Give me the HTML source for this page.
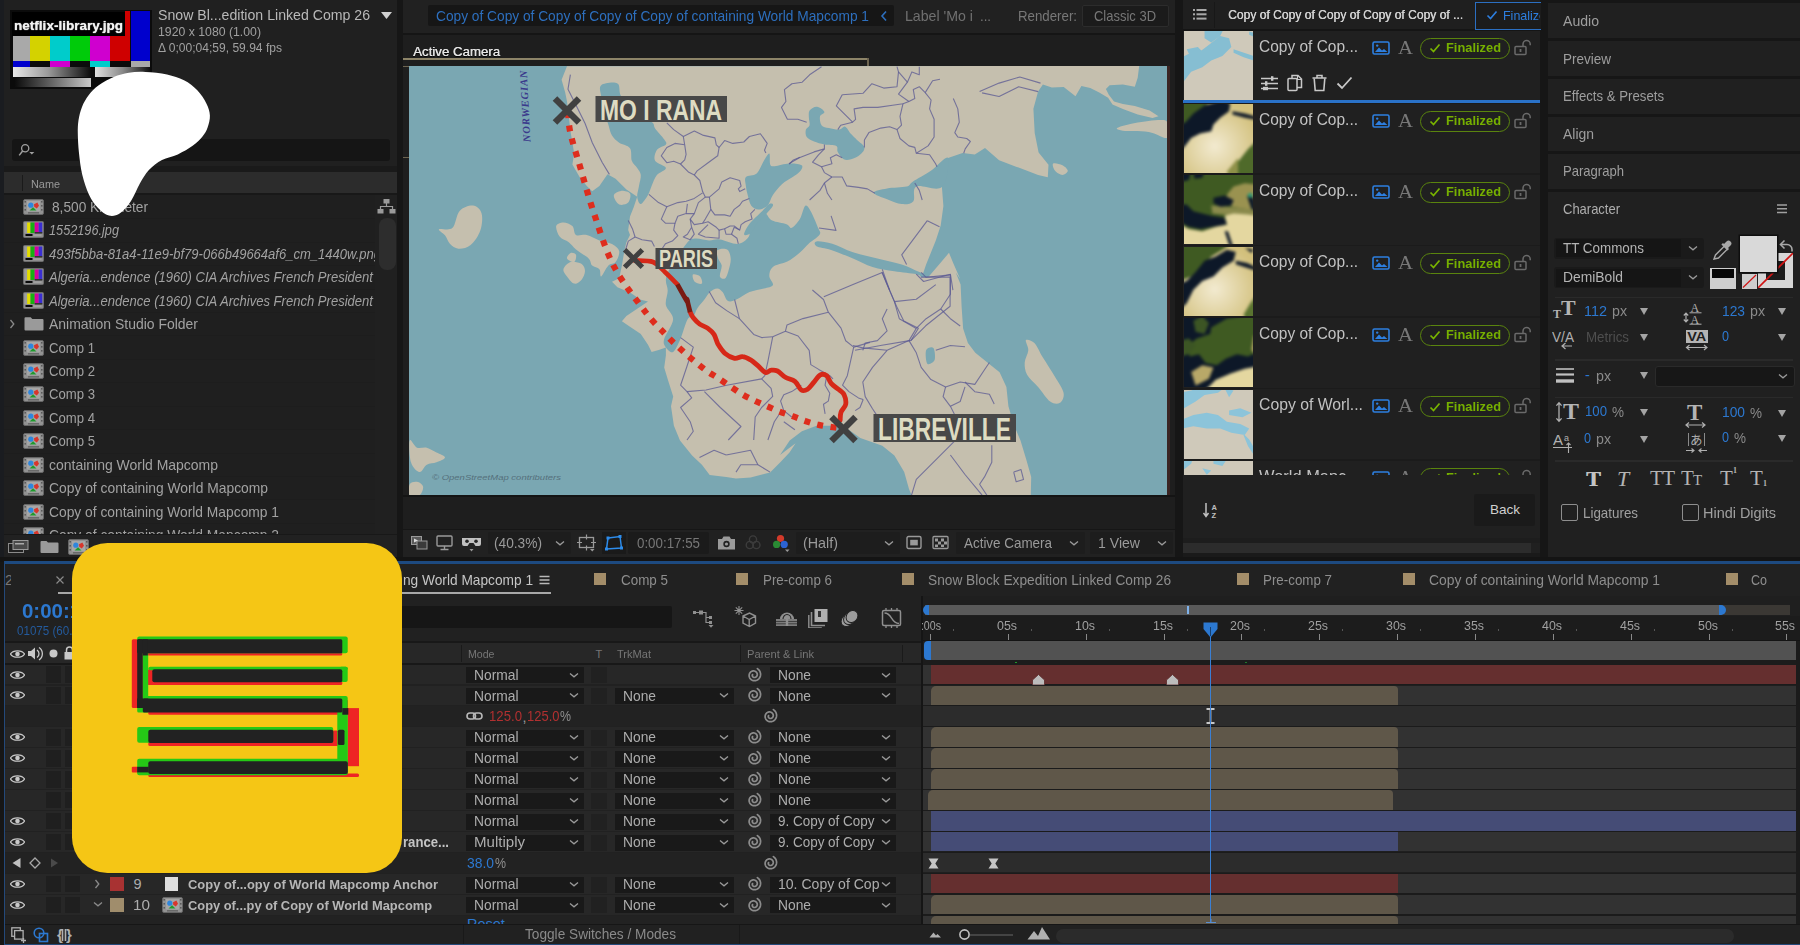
<!DOCTYPE html>
<html><head><meta charset="utf-8"><title>After Effects</title>
<style>
html,body{margin:0;padding:0;background:#1b1b1b;}
#root{position:relative;width:1800px;height:945px;overflow:hidden;background:#161616;font-family:"Liberation Sans",sans-serif;}
#root div,#root svg,#root span.t{position:absolute;display:block;}
span.t{white-space:nowrap;transform-origin:0 50%;}
</style></head><body><div id="root">
<div style="left:0px;top:0px;width:4px;height:557px;background:#1a1c20;"></div>
<div style="left:4px;top:0px;width:393px;height:557px;background:#202020;"></div>
<div style="left:403px;top:0px;width:772px;height:557px;background:#1e1e1e;"></div>
<div style="left:403px;top:0px;width:772px;height:33px;background:#212121;"></div>
<div style="left:403px;top:33px;width:772px;height:2px;background:#151515;"></div>
<div style="left:1183px;top:0px;width:357px;height:557px;background:#202020;"></div>
<div style="left:1548px;top:0px;width:252px;height:557px;background:#202020;"></div>
<div style="left:0px;top:557px;width:1800px;height:5px;background:#141414;"></div>
<div style="left:4px;top:561px;width:1796px;height:384px;background:#212121;box-sizing:border-box;border:1px solid #24497a;border-top:3px solid #1d4a80;border-right:none;"></div>
<div style="left:10px;top:10px;width:142px;height:79px;background:#0b0b0b;"></div>
<div style="left:13.4px;top:35.6px;width:16.4px;height:25px;background:#a9a9a9;"></div>
<div style="left:29.8px;top:35.6px;width:20.4px;height:25px;background:#d4d200;"></div>
<div style="left:50.2px;top:35.6px;width:19.7px;height:25px;background:#00cccb;"></div>
<div style="left:69.9px;top:35.6px;width:20.4px;height:25px;background:#00cb0a;"></div>
<div style="left:90.3px;top:35.6px;width:19.6px;height:25px;background:#cf00cf;"></div>
<div style="left:109.9px;top:35.6px;width:20.5px;height:25px;background:#cf0000;"></div>
<div style="left:130.8px;top:35.6px;width:19.2px;height:25px;background:#0000cd;"></div>
<div style="left:124.6px;top:11px;width:5.8px;height:25px;background:#cf0000;"></div>
<div style="left:130.8px;top:11px;width:19.2px;height:25px;background:#0000cd;"></div>
<div style="left:13.4px;top:60.6px;width:16.4px;height:6px;background:#0000cd;"></div>
<div style="left:50.2px;top:60.6px;width:19.7px;height:6px;background:#cf00cf;"></div>
<div style="left:90.3px;top:60.6px;width:19.6px;height:6px;background:#00cccb;"></div>
<div style="left:130.8px;top:60.6px;width:19.2px;height:6px;background:#a9a9a9;"></div>
<div style="left:13.4px;top:67.2px;width:78px;height:9.6px;background:linear-gradient(90deg,#e8e8e8,#9a9a9a 45%,#0c0c0c);"></div>
<div style="left:95px;top:67.2px;width:55px;height:9.6px;background:linear-gradient(90deg,#e0e0e0,#8a8a8a 50%,#111);"></div>
<div style="left:15px;top:78px;width:76px;height:9px;background:linear-gradient(90deg,#0c0c0c,#555 40%,#c9c9c9);"></div>
<div style="left:12px;top:12px;width:112.5px;height:23.5px;background:#000;"></div>
<span class="t" style="left:14px;top:16.5px;font-size:13px;line-height:17px;color:#f2f2f2;font-weight:700;transform:scaleX(1.0431);text-shadow:0 0 1px #fff;">netflix-library.jpg</span>
<span class="t" style="left:158px;top:5.0px;font-size:15px;line-height:20px;color:#b9b9b9;transform:scaleX(0.9417);">Snow Bl...edition Linked Comp 26</span>
<svg style="left:381.0px;top:12.0px;" width="11" height="7" viewBox="0 0 11 7"><path d="M0 0 L11 0 L5.5 7Z" fill="#d0d0d0"/></svg>
<span class="t" style="left:158px;top:24.0px;font-size:12.5px;line-height:16px;color:#a0a0a0;transform:scaleX(0.9816);">1920 x 1080 (1.00)</span>
<span class="t" style="left:158px;top:40.0px;font-size:12.5px;line-height:16px;color:#a0a0a0;transform:scaleX(0.9643);">Δ 0;00;04;59, 59.94 fps</span>
<div style="left:12px;top:139px;width:378px;height:22px;background:#151515;border-radius:3px;"></div>
<svg style="left:18px;top:142px;" width="20" height="16" viewBox="0 0 20 16"><circle cx="7.2" cy="6.2" r="3.6" fill="none" stroke="#a0a0a0" stroke-width="1.3"/><path d="M4.6 9 L1.2 13.4" stroke="#a0a0a0" stroke-width="1.5"/><path d="M11.3 10 h5 l-2.5 2.6z" fill="#a0a0a0"/></svg>
<div style="left:4px;top:166px;width:393px;height:6px;background:#1a1a1a;"></div>
<div style="left:4px;top:172px;width:393px;height:21px;background:#2c2c2c;"></div>
<div style="left:22px;top:175px;width:1px;height:16px;background:#1a1a1a;"></div>
<span class="t" style="left:31px;top:177.0px;font-size:11.5px;line-height:15px;color:#9a9a9a;transform:scaleX(0.9454);">Name</span>
<div style="left:4px;top:193px;width:393px;height:2px;background:#181818;"></div>
<div style="left:4px;top:195px;width:371px;height:340px;overflow:hidden;background:#1f1f1f;">
<div style="left:0px;top:23.2px;width:371px;height:1px;background:#1d1d1d;"></div>
<svg style="left:19px;top:4.0px;" width="21" height="16" viewBox="0 0 21 16"><rect x="0.5" y="0.5" width="20" height="15" rx="1.5" fill="#929292" stroke="#666"/><rect x="4" y="2" width="13" height="10.5" fill="#a6a6a6"/><g fill="#555"><rect x="1.5" y="2" width="1.4" height="1.6"/><rect x="1.5" y="6" width="1.4" height="1.6"/><rect x="1.5" y="10" width="1.4" height="1.6"/><rect x="18.1" y="2" width="1.4" height="1.6"/><rect x="18.1" y="6" width="1.4" height="1.6"/><rect x="18.1" y="10" width="1.4" height="1.6"/></g><rect x="5" y="13" width="11" height="1.6" fill="#6a6a6a"/><circle cx="7.8" cy="6.2" r="2.6" fill="#2f86dc"/><path d="M11 5.2 l3.4 -1.6 l1.6 3.2 l-2.2 2.6 l-2.6 -1.6z" fill="#d8362c"/><path d="M6.5 11.6 l3.6 -3.4 l3.4 3.4z" fill="#1e9b2c"/></svg>
<span class="t" style="left:48px;top:2.0px;font-size:15px;line-height:20px;color:#a2a2a2;transform:scaleX(0.9138);">8,500 Kilometer</span>
<div style="left:0px;top:46.6px;width:371px;height:1px;background:#1d1d1d;"></div>
<svg style="left:19px;top:26.4px;" width="21" height="17" viewBox="0 0 21 17"><rect x="0.5" y="0.5" width="20" height="16" rx="1" fill="#8d8d8d" stroke="#6c6c6c"/><rect x="1.5" y="1.5" width="2.6" height="10.5" fill="#9d9d9d"/><rect x="4.1" y="1.5" width="3.4" height="10.5" fill="#e2dc00"/><rect x="7.5" y="1.5" width="4.2" height="10.5" fill="#17b013"/><rect x="11.7" y="1.5" width="4" height="10.5" fill="#d6009e"/><rect x="15.7" y="1.5" width="3.6" height="10.5" fill="#3a2fd2"/><rect x="11.7" y="11" width="7.6" height="1.6" fill="#333"/><rect x="2.5" y="13" width="7" height="2" fill="#0a0a0a"/><rect x="10.5" y="13.4" width="8" height="1.4" fill="#a5a5a5"/></svg>
<span class="t" style="left:45px;top:25.4px;font-size:15px;line-height:20px;color:#a2a2a2;font-style:italic;transform:scaleX(0.8477);">1552196.jpg</span>
<div style="left:0px;top:70.1px;width:371px;height:1px;background:#1d1d1d;"></div>
<svg style="left:19px;top:49.9px;" width="21" height="17" viewBox="0 0 21 17"><rect x="0.5" y="0.5" width="20" height="16" rx="1" fill="#8d8d8d" stroke="#6c6c6c"/><rect x="1.5" y="1.5" width="2.6" height="10.5" fill="#9d9d9d"/><rect x="4.1" y="1.5" width="3.4" height="10.5" fill="#e2dc00"/><rect x="7.5" y="1.5" width="4.2" height="10.5" fill="#17b013"/><rect x="11.7" y="1.5" width="4" height="10.5" fill="#d6009e"/><rect x="15.7" y="1.5" width="3.6" height="10.5" fill="#3a2fd2"/><rect x="11.7" y="11" width="7.6" height="1.6" fill="#333"/><rect x="2.5" y="13" width="7" height="2" fill="#0a0a0a"/><rect x="10.5" y="13.4" width="8" height="1.4" fill="#a5a5a5"/></svg>
<span class="t" style="left:45px;top:48.9px;font-size:15px;line-height:20px;color:#a2a2a2;font-style:italic;transform:scaleX(0.8679);">493f5bba-81a4-11e9-bf79-066b49664af6_cm_1440w.png</span>
<div style="left:0px;top:93.5px;width:371px;height:1px;background:#1d1d1d;"></div>
<svg style="left:19px;top:73.3px;" width="21" height="17" viewBox="0 0 21 17"><rect x="0.5" y="0.5" width="20" height="16" rx="1" fill="#8d8d8d" stroke="#6c6c6c"/><rect x="1.5" y="1.5" width="2.6" height="10.5" fill="#9d9d9d"/><rect x="4.1" y="1.5" width="3.4" height="10.5" fill="#e2dc00"/><rect x="7.5" y="1.5" width="4.2" height="10.5" fill="#17b013"/><rect x="11.7" y="1.5" width="4" height="10.5" fill="#d6009e"/><rect x="15.7" y="1.5" width="3.6" height="10.5" fill="#3a2fd2"/><rect x="11.7" y="11" width="7.6" height="1.6" fill="#333"/><rect x="2.5" y="13" width="7" height="2" fill="#0a0a0a"/><rect x="10.5" y="13.4" width="8" height="1.4" fill="#a5a5a5"/></svg>
<span class="t" style="left:45px;top:72.3px;font-size:15px;line-height:20px;color:#a2a2a2;font-style:italic;transform:scaleX(0.8700);">Algeria...endence (1960) CIA Archives French President</span>
<div style="left:0px;top:116.9px;width:371px;height:1px;background:#1d1d1d;"></div>
<svg style="left:19px;top:96.7px;" width="21" height="17" viewBox="0 0 21 17"><rect x="0.5" y="0.5" width="20" height="16" rx="1" fill="#8d8d8d" stroke="#6c6c6c"/><rect x="1.5" y="1.5" width="2.6" height="10.5" fill="#9d9d9d"/><rect x="4.1" y="1.5" width="3.4" height="10.5" fill="#e2dc00"/><rect x="7.5" y="1.5" width="4.2" height="10.5" fill="#17b013"/><rect x="11.7" y="1.5" width="4" height="10.5" fill="#d6009e"/><rect x="15.7" y="1.5" width="3.6" height="10.5" fill="#3a2fd2"/><rect x="11.7" y="11" width="7.6" height="1.6" fill="#333"/><rect x="2.5" y="13" width="7" height="2" fill="#0a0a0a"/><rect x="10.5" y="13.4" width="8" height="1.4" fill="#a5a5a5"/></svg>
<span class="t" style="left:45px;top:95.7px;font-size:15px;line-height:20px;color:#a2a2a2;font-style:italic;transform:scaleX(0.8700);">Algeria...endence (1960) CIA Archives French President</span>
<div style="left:0px;top:140.4px;width:371px;height:1px;background:#1d1d1d;"></div>
<svg style="left:20px;top:121.1px;" width="20" height="15" viewBox="0 0 20 15"><path d="M0.5 2.2 a1 1 0 0 1 1 -1 h5.2 l1.6 1.8 h10.2 a1 1 0 0 1 1 1 v9.5 a1 1 0 0 1 -1 1 h-17 a1 1 0 0 1 -1 -1z" fill="#9a9a9a"/></svg>
<svg style="left:4.5px;top:124.14999999999998px;" width="7" height="10" viewBox="0 0 7 10"><path d="M1.5 1 L4.8 5 L1.5 9" fill="none" stroke="#8a8a8a" stroke-width="1.3"/></svg>
<span class="t" style="left:45px;top:119.1px;font-size:15px;line-height:20px;color:#a2a2a2;transform:scaleX(0.9308);">Animation Studio Folder</span>
<div style="left:0px;top:163.8px;width:371px;height:1px;background:#1d1d1d;"></div>
<svg style="left:19px;top:144.6px;" width="21" height="16" viewBox="0 0 21 16"><rect x="0.5" y="0.5" width="20" height="15" rx="1.5" fill="#929292" stroke="#666"/><rect x="4" y="2" width="13" height="10.5" fill="#a6a6a6"/><g fill="#555"><rect x="1.5" y="2" width="1.4" height="1.6"/><rect x="1.5" y="6" width="1.4" height="1.6"/><rect x="1.5" y="10" width="1.4" height="1.6"/><rect x="18.1" y="2" width="1.4" height="1.6"/><rect x="18.1" y="6" width="1.4" height="1.6"/><rect x="18.1" y="10" width="1.4" height="1.6"/></g><rect x="5" y="13" width="11" height="1.6" fill="#6a6a6a"/><circle cx="7.8" cy="6.2" r="2.6" fill="#2f86dc"/><path d="M11 5.2 l3.4 -1.6 l1.6 3.2 l-2.2 2.6 l-2.6 -1.6z" fill="#d8362c"/><path d="M6.5 11.6 l3.6 -3.4 l3.4 3.4z" fill="#1e9b2c"/></svg>
<span class="t" style="left:45px;top:142.6px;font-size:15px;line-height:20px;color:#a2a2a2;transform:scaleX(0.8758);">Comp 1</span>
<div style="left:0px;top:187.2px;width:371px;height:1px;background:#1d1d1d;"></div>
<svg style="left:19px;top:168.0px;" width="21" height="16" viewBox="0 0 21 16"><rect x="0.5" y="0.5" width="20" height="15" rx="1.5" fill="#929292" stroke="#666"/><rect x="4" y="2" width="13" height="10.5" fill="#a6a6a6"/><g fill="#555"><rect x="1.5" y="2" width="1.4" height="1.6"/><rect x="1.5" y="6" width="1.4" height="1.6"/><rect x="1.5" y="10" width="1.4" height="1.6"/><rect x="18.1" y="2" width="1.4" height="1.6"/><rect x="18.1" y="6" width="1.4" height="1.6"/><rect x="18.1" y="10" width="1.4" height="1.6"/></g><rect x="5" y="13" width="11" height="1.6" fill="#6a6a6a"/><circle cx="7.8" cy="6.2" r="2.6" fill="#2f86dc"/><path d="M11 5.2 l3.4 -1.6 l1.6 3.2 l-2.2 2.6 l-2.6 -1.6z" fill="#d8362c"/><path d="M6.5 11.6 l3.6 -3.4 l3.4 3.4z" fill="#1e9b2c"/></svg>
<span class="t" style="left:45px;top:166.0px;font-size:15px;line-height:20px;color:#a2a2a2;transform:scaleX(0.8758);">Comp 2</span>
<div style="left:0px;top:210.7px;width:371px;height:1px;background:#1d1d1d;"></div>
<svg style="left:19px;top:191.4px;" width="21" height="16" viewBox="0 0 21 16"><rect x="0.5" y="0.5" width="20" height="15" rx="1.5" fill="#929292" stroke="#666"/><rect x="4" y="2" width="13" height="10.5" fill="#a6a6a6"/><g fill="#555"><rect x="1.5" y="2" width="1.4" height="1.6"/><rect x="1.5" y="6" width="1.4" height="1.6"/><rect x="1.5" y="10" width="1.4" height="1.6"/><rect x="18.1" y="2" width="1.4" height="1.6"/><rect x="18.1" y="6" width="1.4" height="1.6"/><rect x="18.1" y="10" width="1.4" height="1.6"/></g><rect x="5" y="13" width="11" height="1.6" fill="#6a6a6a"/><circle cx="7.8" cy="6.2" r="2.6" fill="#2f86dc"/><path d="M11 5.2 l3.4 -1.6 l1.6 3.2 l-2.2 2.6 l-2.6 -1.6z" fill="#d8362c"/><path d="M6.5 11.6 l3.6 -3.4 l3.4 3.4z" fill="#1e9b2c"/></svg>
<span class="t" style="left:45px;top:189.4px;font-size:15px;line-height:20px;color:#a2a2a2;transform:scaleX(0.8758);">Comp 3</span>
<div style="left:0px;top:234.1px;width:371px;height:1px;background:#1d1d1d;"></div>
<svg style="left:19px;top:214.9px;" width="21" height="16" viewBox="0 0 21 16"><rect x="0.5" y="0.5" width="20" height="15" rx="1.5" fill="#929292" stroke="#666"/><rect x="4" y="2" width="13" height="10.5" fill="#a6a6a6"/><g fill="#555"><rect x="1.5" y="2" width="1.4" height="1.6"/><rect x="1.5" y="6" width="1.4" height="1.6"/><rect x="1.5" y="10" width="1.4" height="1.6"/><rect x="18.1" y="2" width="1.4" height="1.6"/><rect x="18.1" y="6" width="1.4" height="1.6"/><rect x="18.1" y="10" width="1.4" height="1.6"/></g><rect x="5" y="13" width="11" height="1.6" fill="#6a6a6a"/><circle cx="7.8" cy="6.2" r="2.6" fill="#2f86dc"/><path d="M11 5.2 l3.4 -1.6 l1.6 3.2 l-2.2 2.6 l-2.6 -1.6z" fill="#d8362c"/><path d="M6.5 11.6 l3.6 -3.4 l3.4 3.4z" fill="#1e9b2c"/></svg>
<span class="t" style="left:45px;top:212.9px;font-size:15px;line-height:20px;color:#a2a2a2;transform:scaleX(0.8758);">Comp 4</span>
<div style="left:0px;top:257.5px;width:371px;height:1px;background:#1d1d1d;"></div>
<svg style="left:19px;top:238.3px;" width="21" height="16" viewBox="0 0 21 16"><rect x="0.5" y="0.5" width="20" height="15" rx="1.5" fill="#929292" stroke="#666"/><rect x="4" y="2" width="13" height="10.5" fill="#a6a6a6"/><g fill="#555"><rect x="1.5" y="2" width="1.4" height="1.6"/><rect x="1.5" y="6" width="1.4" height="1.6"/><rect x="1.5" y="10" width="1.4" height="1.6"/><rect x="18.1" y="2" width="1.4" height="1.6"/><rect x="18.1" y="6" width="1.4" height="1.6"/><rect x="18.1" y="10" width="1.4" height="1.6"/></g><rect x="5" y="13" width="11" height="1.6" fill="#6a6a6a"/><circle cx="7.8" cy="6.2" r="2.6" fill="#2f86dc"/><path d="M11 5.2 l3.4 -1.6 l1.6 3.2 l-2.2 2.6 l-2.6 -1.6z" fill="#d8362c"/><path d="M6.5 11.6 l3.6 -3.4 l3.4 3.4z" fill="#1e9b2c"/></svg>
<span class="t" style="left:45px;top:236.3px;font-size:15px;line-height:20px;color:#a2a2a2;transform:scaleX(0.8758);">Comp 5</span>
<div style="left:0px;top:280.9px;width:371px;height:1px;background:#1d1d1d;"></div>
<svg style="left:19px;top:261.7px;" width="21" height="16" viewBox="0 0 21 16"><rect x="0.5" y="0.5" width="20" height="15" rx="1.5" fill="#929292" stroke="#666"/><rect x="4" y="2" width="13" height="10.5" fill="#a6a6a6"/><g fill="#555"><rect x="1.5" y="2" width="1.4" height="1.6"/><rect x="1.5" y="6" width="1.4" height="1.6"/><rect x="1.5" y="10" width="1.4" height="1.6"/><rect x="18.1" y="2" width="1.4" height="1.6"/><rect x="18.1" y="6" width="1.4" height="1.6"/><rect x="18.1" y="10" width="1.4" height="1.6"/></g><rect x="5" y="13" width="11" height="1.6" fill="#6a6a6a"/><circle cx="7.8" cy="6.2" r="2.6" fill="#2f86dc"/><path d="M11 5.2 l3.4 -1.6 l1.6 3.2 l-2.2 2.6 l-2.6 -1.6z" fill="#d8362c"/><path d="M6.5 11.6 l3.6 -3.4 l3.4 3.4z" fill="#1e9b2c"/></svg>
<span class="t" style="left:45px;top:259.7px;font-size:15px;line-height:20px;color:#a2a2a2;transform:scaleX(0.9312);">containing World Mapcomp</span>
<div style="left:0px;top:304.4px;width:371px;height:1px;background:#1d1d1d;"></div>
<svg style="left:19px;top:285.2px;" width="21" height="16" viewBox="0 0 21 16"><rect x="0.5" y="0.5" width="20" height="15" rx="1.5" fill="#929292" stroke="#666"/><rect x="4" y="2" width="13" height="10.5" fill="#a6a6a6"/><g fill="#555"><rect x="1.5" y="2" width="1.4" height="1.6"/><rect x="1.5" y="6" width="1.4" height="1.6"/><rect x="1.5" y="10" width="1.4" height="1.6"/><rect x="18.1" y="2" width="1.4" height="1.6"/><rect x="18.1" y="6" width="1.4" height="1.6"/><rect x="18.1" y="10" width="1.4" height="1.6"/></g><rect x="5" y="13" width="11" height="1.6" fill="#6a6a6a"/><circle cx="7.8" cy="6.2" r="2.6" fill="#2f86dc"/><path d="M11 5.2 l3.4 -1.6 l1.6 3.2 l-2.2 2.6 l-2.6 -1.6z" fill="#d8362c"/><path d="M6.5 11.6 l3.6 -3.4 l3.4 3.4z" fill="#1e9b2c"/></svg>
<span class="t" style="left:45px;top:283.2px;font-size:15px;line-height:20px;color:#a2a2a2;transform:scaleX(0.9227);">Copy of containing World Mapcomp</span>
<div style="left:0px;top:327.8px;width:371px;height:1px;background:#1d1d1d;"></div>
<svg style="left:19px;top:308.6px;" width="21" height="16" viewBox="0 0 21 16"><rect x="0.5" y="0.5" width="20" height="15" rx="1.5" fill="#929292" stroke="#666"/><rect x="4" y="2" width="13" height="10.5" fill="#a6a6a6"/><g fill="#555"><rect x="1.5" y="2" width="1.4" height="1.6"/><rect x="1.5" y="6" width="1.4" height="1.6"/><rect x="1.5" y="10" width="1.4" height="1.6"/><rect x="18.1" y="2" width="1.4" height="1.6"/><rect x="18.1" y="6" width="1.4" height="1.6"/><rect x="18.1" y="10" width="1.4" height="1.6"/></g><rect x="5" y="13" width="11" height="1.6" fill="#6a6a6a"/><circle cx="7.8" cy="6.2" r="2.6" fill="#2f86dc"/><path d="M11 5.2 l3.4 -1.6 l1.6 3.2 l-2.2 2.6 l-2.6 -1.6z" fill="#d8362c"/><path d="M6.5 11.6 l3.6 -3.4 l3.4 3.4z" fill="#1e9b2c"/></svg>
<span class="t" style="left:45px;top:306.6px;font-size:15px;line-height:20px;color:#a2a2a2;transform:scaleX(0.9206);">Copy of containing World Mapcomp 1</span>
<div style="left:0px;top:351.2px;width:371px;height:1px;background:#1d1d1d;"></div>
<svg style="left:19px;top:332.0px;" width="21" height="16" viewBox="0 0 21 16"><rect x="0.5" y="0.5" width="20" height="15" rx="1.5" fill="#929292" stroke="#666"/><rect x="4" y="2" width="13" height="10.5" fill="#a6a6a6"/><g fill="#555"><rect x="1.5" y="2" width="1.4" height="1.6"/><rect x="1.5" y="6" width="1.4" height="1.6"/><rect x="1.5" y="10" width="1.4" height="1.6"/><rect x="18.1" y="2" width="1.4" height="1.6"/><rect x="18.1" y="6" width="1.4" height="1.6"/><rect x="18.1" y="10" width="1.4" height="1.6"/></g><rect x="5" y="13" width="11" height="1.6" fill="#6a6a6a"/><circle cx="7.8" cy="6.2" r="2.6" fill="#2f86dc"/><path d="M11 5.2 l3.4 -1.6 l1.6 3.2 l-2.2 2.6 l-2.6 -1.6z" fill="#d8362c"/><path d="M6.5 11.6 l3.6 -3.4 l3.4 3.4z" fill="#1e9b2c"/></svg>
<span class="t" style="left:45px;top:330.0px;font-size:15px;line-height:20px;color:#a2a2a2;transform:scaleX(0.9206);">Copy of containing World Mapcomp 2</span>
</div>
<div style="left:375px;top:195px;width:22px;height:340px;background:#202020;"></div>
<div style="left:379px;top:218px;width:17px;height:52px;background:#2d2d2d;border-radius:8px;"></div>
<svg style="left:377px;top:198px;" width="20" height="18" viewBox="0 0 20 18"><g fill="#9a9a9a"><rect x="6.5" y="1" width="6" height="4.5"/><rect x="0.5" y="11" width="6" height="4.5"/><rect x="12.5" y="11" width="6" height="4.5"/></g><path d="M9.5 5 v3.5 M3.5 11 v-2.5 h12 v2.5" fill="none" stroke="#9a9a9a" stroke-width="1.2"/></svg>
<div style="left:4px;top:535px;width:393px;height:22px;background:#212121;"></div>
<div style="left:4px;top:534px;width:393px;height:1px;background:#181818;"></div>
<svg style="left:8px;top:539px;" width="24" height="16" viewBox="0 0 24 16"><rect x="0.5" y="4.5" width="15" height="9" fill="none" stroke="#8a8a8a"/><rect x="5" y="1.5" width="15" height="9" fill="#4a4a4a" stroke="#9a9a9a"/><rect x="7" y="4" width="9" height="1.5" fill="#aaa"/></svg>
<svg style="left:40px;top:540px;" width="20" height="14" viewBox="0 0 20 14"><path d="M0.5 2 a1 1 0 0 1 1 -1 h5 l1.5 1.6 h9.5 a1 1 0 0 1 1 1 v8.5 a1 1 0 0 1 -1 1 h-16 a1 1 0 0 1 -1 -1z" fill="#9a9a9a"/></svg>
<svg style="left:68px;top:539px;" width="21" height="16" viewBox="0 0 21 16"><rect x="0.5" y="0.5" width="20" height="15" rx="1.5" fill="#929292" stroke="#666"/><rect x="4" y="2" width="13" height="10.5" fill="#a6a6a6"/><g fill="#555"><rect x="1.5" y="2" width="1.4" height="1.6"/><rect x="1.5" y="6" width="1.4" height="1.6"/><rect x="1.5" y="10" width="1.4" height="1.6"/><rect x="18.1" y="2" width="1.4" height="1.6"/><rect x="18.1" y="6" width="1.4" height="1.6"/><rect x="18.1" y="10" width="1.4" height="1.6"/></g><rect x="5" y="13" width="11" height="1.6" fill="#6a6a6a"/><circle cx="7.8" cy="6.2" r="2.6" fill="#2f86dc"/><path d="M11 5.2 l3.4 -1.6 l1.6 3.2 l-2.2 2.6 l-2.6 -1.6z" fill="#d8362c"/><path d="M6.5 11.6 l3.6 -3.4 l3.4 3.4z" fill="#1e9b2c"/></svg>
<div style="left:428px;top:5px;width:466px;height:21px;background:#161616;border-radius:2px;"></div>
<span class="t" style="left:436px;top:6.5px;font-size:14.5px;line-height:19px;color:#2d6fbe;transform:scaleX(0.9464);">Copy of Copy of Copy of Copy of Copy of containing World Mapcomp 1</span>
<svg style="left:880px;top:10px;" width="8" height="12" viewBox="0 0 8 12"><path d="M6 1.5 L2 6 L6 10.5" fill="none" stroke="#2d6fbe" stroke-width="1.6"/></svg>
<span class="t" style="left:905px;top:6.5px;font-size:14.5px;line-height:19px;color:#707070;transform:scaleX(0.9761);">Label &#x27;Mo i</span>
<span class="t" style="left:980px;top:6.5px;font-size:14.5px;line-height:19px;color:#777;transform:scaleX(0.9103);">...</span>
<span class="t" style="left:1018px;top:6.5px;font-size:14.5px;line-height:19px;color:#777;transform:scaleX(0.9151);">Renderer:</span>
<div style="left:1082px;top:5px;width:87px;height:22px;background:#1b1b1b;border:1px solid #2c2c2c;box-sizing:border-box;border-radius:2px;"></div>
<span class="t" style="left:1094px;top:6.5px;font-size:14.5px;line-height:19px;color:#777;transform:scaleX(0.8947);">Classic 3D</span>
<span class="t" style="left:413px;top:43.0px;font-size:13.5px;line-height:18px;color:#e8e8e8;transform:scaleX(0.9828);text-shadow:0.4px 0 0 #ccc, 0 1px 1px #000;">Active Camera</span>
<div style="left:403px;top:58px;width:465px;height:1.5px;background:#8d8468;"></div>
<div style="left:867px;top:58px;width:1.5px;height:8px;background:#6d6450;"></div>
<div style="left:403px;top:66px;width:6px;height:1px;background:#6d6450;"></div>
<div style="left:403px;top:157px;width:6px;height:1px;background:#6d6450;"></div>
<svg style="left:0;top:0;" width="1800" height="945" viewBox="0 0 1800 945"><defs><clipPath id="mapclip"><rect x="409" y="66" width="758" height="429"/></clipPath></defs><g clip-path="url(#mapclip)"><rect x="409" y="66" width="758" height="429" fill="#7aa7b2"/><path d="M567.0 66.3 L561.6 79.8 L565.2 92.4 L567.0 101.4 L570.6 132.0 L574.2 153.6 L572.4 164.4 L579.6 176.9 L586.8 185.9 L592.2 191.3 L599.4 185.9 L607.5 174.2 L615.6 178.7 L626.4 189.5 L637.2 196.7 L633.6 207.5 L630.0 216.5 L628.2 230.0 L630.0 235.0 L626.4 242.2 L624.6 249.4 L621.9 265.6 L619.2 278.2 L612.0 281.8 L617.4 287.2 L630.0 292.6 L640.8 299.8 L648.0 301.6 L637.2 308.7 L626.4 315.9 L621.9 321.3 L630.0 326.7 L640.8 333.9 L648.0 344.7 L651.6 351.9 L658.7 350.1 L665.9 347.4 L665.9 355.2 L664.2 367.4 L667.8 379.6 L673.2 396.6 L671.0 406.3 L673.9 425.8 L680.0 440.4 L692.1 455.5 L701.9 464.8 L709.7 475.0 L726.2 476.9 L736.0 478.6 L750.6 477.4 L770.1 472.6 L780.3 462.3 L789.5 452.6 L795.6 443.3 L780.0 455.0 L789.7 440.4 L801.9 431.2 L816.5 425.8 L843.3 425.8 L860.3 438.0 L882.3 445.8 L894.4 455.5 L904.2 472.1 L909.0 489.1 L911.5 495.2 L1030.8 495.2 L1031.2 476.9 L1026.4 459.9 L1020.5 440.4 L1014.2 425.8 L1008.4 406.3 L1006.4 386.9 L999.6 372.3 L987.4 362.5 L975.3 352.8 L967.9 343.0 L963.1 328.4 L961.6 306.5 L960.6 284.6 L955.8 272.4 L960.2 279.1 L953.3 263.3 L949.0 252.8 L939.5 264.0 L929.0 276.2 L922.4 275.5 L926.1 264.5 L935.8 240.6 L940.7 225.6 L943.4 206.1 L941.9 187.1 L935.8 182.9 L948.0 157.9 L962.6 153.0 L974.8 154.5 L985.0 148.1 L999.1 160.3 L1018.6 167.6 L1038.1 174.9 L1047.8 177.3 L1048.5 164.7 L1038.6 152.5 L1034.7 133.0 L1033.4 108.7 L1038.1 91.6 L1042.9 84.4 L1051.8 87.4 L1063.7 87.0 L1075.5 96.3 L1081.4 85.9 L1090.3 88.1 L1099.2 92.6 L1108.1 97.8 L1112.5 104.4 L1122.9 108.9 L1137.7 114.5 L1152.5 118.1 L1158.5 116.3 L1149.6 110.4 L1134.8 105.9 L1122.9 104.1 L1114.0 101.5 L1108.8 94.8 L1105.9 88.9 L1109.6 85.2 L1122.9 84.4 L1134.8 86.7 L1137.7 77.8 L1139.2 65.9Z" fill="#c5bfae" /><path d="M601.2 85.2 C603.9 83.1 614.1 81.6 617.4 83.4 C620.7 85.2 618.3 90.9 621.0 96.0 C623.7 101.1 628.5 109.6 633.6 114.0 C638.7 118.3 648.0 119.7 651.6 122.1 C655.1 124.5 653.1 125.5 655.1 128.4 C657.2 131.2 662.3 136.5 664.1 139.2 C665.9 141.9 667.1 142.8 665.9 144.6 C664.7 146.4 658.7 147.3 656.9 150.0 C655.1 152.7 653.6 157.8 655.1 160.8 C656.6 163.8 665.6 165.6 665.9 168.0 C666.2 170.4 659.3 172.2 656.9 175.1 C654.5 178.1 653.1 182.6 651.6 185.9 C650.1 189.2 649.8 191.9 648.0 194.9 C646.2 197.9 642.6 203.6 640.8 203.9 C639.0 204.2 637.5 199.7 637.2 196.7 C636.9 193.7 638.4 189.5 639.0 185.9 C639.6 182.3 641.1 178.1 640.8 175.1 C640.5 172.2 638.7 170.4 637.2 168.0 C635.7 165.6 633.0 164.1 631.8 160.8 C630.6 157.5 632.1 151.2 630.0 148.2 C627.9 145.2 622.2 144.9 619.2 142.8 C616.2 140.7 613.8 138.6 612.0 135.6 C610.2 132.6 609.9 129.9 608.4 124.8 C606.9 119.7 604.2 109.8 603.0 105.0 C601.8 100.2 601.5 99.3 601.2 96.0 C600.9 92.7 598.5 87.3 601.2 85.2Z" fill="#7aa7b2"/><path d="M745.9 177.0 C747.7 174.9 753.7 176.1 756.7 173.4 C759.7 170.7 761.8 164.1 763.9 160.8 C766.0 157.5 768.3 153.0 769.3 153.6 C770.4 154.2 769.3 162.3 770.2 164.4 C771.1 166.5 771.6 166.3 774.7 166.2 C777.9 166.0 784.6 163.6 789.1 163.5 C793.6 163.3 799.9 163.9 801.7 165.3 C803.5 166.6 801.4 169.6 799.9 171.6 C798.4 173.5 795.7 174.9 792.7 177.0 C789.7 179.1 785.2 181.2 781.9 184.2 C778.6 187.2 775.3 191.4 772.9 195.0 C770.5 198.6 769.9 203.4 767.5 205.8 C765.1 208.2 761.2 209.4 758.5 209.4 C755.8 209.4 753.1 208.2 751.3 205.8 C749.5 203.4 748.6 198.3 747.7 195.0 C746.8 191.7 746.2 189.0 745.9 186.0 C745.6 183.0 744.1 179.1 745.9 177.0Z" fill="#7aa7b2"/><path d="M809.6 110.4 C811.0 108.5 814.6 106.4 817.0 106.7 C819.5 106.9 824.0 110.2 824.4 111.9 C824.9 113.5 820.5 114.1 820.0 116.3 C819.5 118.5 820.0 123.2 821.5 125.2 C823.0 127.2 825.9 127.4 828.9 128.1 C831.9 128.9 836.5 129.9 839.3 129.6 C842.0 129.4 843.2 125.9 845.2 126.7 C847.2 127.4 849.1 131.9 851.1 134.1 C853.1 136.3 854.8 137.8 857.0 140.0 C859.3 142.2 864.0 144.9 864.4 147.4 C864.9 149.9 862.2 152.8 860.0 154.8 C857.8 156.8 853.8 158.5 851.1 159.3 C848.4 160.0 845.9 160.5 843.7 159.3 C841.5 158.0 839.0 154.1 837.8 151.9 C836.5 149.6 838.5 147.2 836.3 145.9 C834.1 144.7 828.1 145.2 824.4 144.4 C820.7 143.7 817.0 142.7 814.1 141.5 C811.1 140.2 808.0 139.0 806.7 137.0 C805.3 135.1 805.4 131.6 805.9 129.6 C806.4 127.7 809.1 127.2 809.6 125.2 C810.1 123.2 808.9 120.2 808.9 117.8 C808.9 115.3 808.3 112.2 809.6 110.4Z" fill="#7aa7b2"/><path d="M873.7 192.7 C873.7 190.9 881.6 189.6 887.1 188.5 C892.6 187.5 902.3 187.7 906.6 186.6 C910.9 185.5 908.6 184.4 912.7 181.7 C916.7 179.1 925.1 174.7 930.9 170.8 C936.8 166.8 946.2 155.2 948.0 157.9 C949.8 160.6 947.2 182.3 941.9 187.1 C936.6 191.9 921.1 184.2 916.3 186.6 C911.6 189.0 915.8 198.3 913.4 201.2 C911.0 204.1 906.1 204.5 901.7 204.1 C897.3 203.8 891.8 201.2 887.1 199.3 C882.5 197.4 873.7 194.5 873.7 192.7Z" fill="#7aa7b2"/><path d="M816.5 241.4 C819.2 241.0 826.3 242.0 832.3 243.8 C838.4 245.6 845.5 249.9 853.0 252.3 C860.5 254.8 869.3 256.4 877.4 258.4 C885.5 260.4 894.8 262.3 901.7 264.5 C908.6 266.7 914.2 269.9 918.8 271.8 C923.3 273.8 928.4 275.3 929.0 276.2 C929.6 277.1 924.5 277.5 922.4 277.2 C920.3 276.8 921.0 275.2 916.3 274.2 C911.7 273.3 901.7 272.5 894.4 271.3 C887.1 270.1 879.4 269.1 872.5 266.9 C865.6 264.8 859.9 261.3 853.0 258.4 C846.1 255.6 837.2 251.9 831.1 249.9 C825.0 247.9 819.0 247.7 816.5 246.2 C814.1 244.8 813.9 241.8 816.5 241.4Z" fill="#7aa7b2"/><path d="M665.9 347.4 C664.4 345.3 662.9 344.0 664.1 339.3 C665.3 334.7 672.8 325.2 673.1 319.5 C673.4 313.8 666.8 309.9 665.9 305.1 C665.0 300.4 667.7 295.0 667.7 290.8 C667.7 286.6 665.6 283.6 665.9 280.0 C666.2 276.4 666.1 275.2 669.5 269.2 C673.0 263.1 682.4 248.7 686.6 243.6 C690.8 238.5 691.0 239.1 694.7 238.6 C698.5 238.0 704.9 240.2 709.1 240.4 C713.3 240.5 715.1 238.9 719.9 239.5 C724.7 240.1 733.1 244.4 737.9 244.0 C742.7 243.5 746.6 239.8 748.7 236.8 C750.8 233.8 749.3 228.7 750.5 226.0 C751.7 223.3 753.5 222.7 755.9 220.6 C758.3 218.5 762.2 213.4 764.9 213.4 C767.6 213.4 768.5 218.8 772.1 220.6 C775.7 222.4 783.2 223.0 786.5 224.2 C789.8 225.4 789.6 228.7 791.9 227.8 C794.1 226.9 797.7 222.5 800.0 218.8 C802.2 215.1 803.5 207.0 805.3 205.8 C807.1 204.5 808.6 207.6 810.7 211.2 C812.8 214.8 816.4 223.5 817.9 227.4 C819.4 231.3 821.2 231.9 819.7 234.6 C818.2 237.3 812.2 240.6 808.9 243.6 C805.6 246.6 803.5 249.6 799.9 252.6 C796.3 255.6 791.8 259.2 787.3 261.6 C782.8 263.9 775.9 264.5 772.9 266.9 C769.9 269.3 769.3 272.9 769.3 275.9 C769.3 278.9 773.8 282.8 772.9 284.9 C772.0 287.0 767.8 287.3 763.9 288.5 C760.0 289.7 754.0 290.3 749.5 292.1 C745.0 293.9 740.5 297.8 736.9 299.3 C733.4 300.8 730.4 302.3 728.0 301.1 C725.6 299.9 724.4 294.2 722.6 292.1 C720.8 290.0 719.3 288.5 717.2 288.5 C715.1 288.5 712.1 290.3 710.0 292.1 C707.9 293.9 706.7 296.6 704.6 299.3 C702.5 302.0 699.2 305.6 697.4 308.3 C695.6 311.0 695.4 313.7 693.8 315.5 C692.1 317.4 689.8 315.6 687.5 319.5 C685.3 323.5 682.7 333.9 680.3 339.3 C677.9 344.7 675.5 350.6 673.1 351.9 C670.7 353.3 667.4 349.5 665.9 347.4Z" fill="#7aa7b2"/><path d="M744.1 234.6 C743.8 233.1 746.5 227.7 749.5 223.8 C752.5 219.9 758.8 214.5 762.1 211.2 C765.4 207.9 767.5 204.9 769.3 204.0 C771.1 203.1 773.8 203.7 772.9 205.8 C772.0 207.9 766.6 213.6 763.9 216.6 C761.2 219.6 758.8 221.1 756.7 223.8 C754.6 226.5 753.4 231.0 751.3 232.8 C749.2 234.6 744.4 236.1 744.1 234.6Z" fill="#7aa7b2"/><path d="M439.0 229.2 C440.2 228.0 448.9 231.0 452.3 228.0 C455.8 224.9 456.2 214.7 459.6 210.9 C463.1 207.2 469.4 205.2 473.0 205.6 C476.7 206.0 480.3 209.2 481.6 213.4 C482.8 217.5 482.2 225.1 480.3 230.4 C478.5 235.7 474.3 242.0 470.6 245.0 C467.0 248.1 461.9 248.9 458.4 248.7 C455.0 248.5 452.1 246.0 449.9 243.8 C447.7 241.6 446.9 237.7 445.0 235.3 C443.2 232.9 437.7 230.4 439.0 229.2Z" fill="#c5bfae"/><path d="M556.2 226.0 C556.8 223.6 560.7 222.4 563.4 222.4 C566.1 222.4 570.3 223.9 572.4 226.0 C574.5 228.1 573.6 233.5 576.0 235.0 C578.4 236.5 582.9 234.1 586.8 235.0 C590.7 235.9 595.2 238.9 599.4 240.4 C603.6 241.9 608.7 242.2 612.0 244.0 C615.3 245.8 618.6 248.2 619.2 251.2 C619.8 254.2 617.4 259.6 615.6 262.0 C613.8 264.4 610.8 263.2 608.4 265.6 C606.0 268.0 602.7 275.8 601.2 276.4 C599.7 277.0 600.9 271.0 599.4 269.2 C597.9 267.4 594.0 267.4 592.2 265.6 C590.4 263.8 591.3 261.1 588.6 258.4 C585.9 255.7 579.3 252.1 576.0 249.4 C572.7 246.7 571.5 244.3 568.8 242.2 C566.1 240.1 561.9 239.5 559.8 236.8 C557.7 234.1 555.6 228.4 556.2 226.0Z" fill="#c5bfae"/><path d="M563.4 269.2 C564.0 266.8 567.6 262.9 570.6 262.0 C573.6 261.1 579.0 262.3 581.4 263.8 C583.8 265.3 585.0 268.3 585.0 271.0 C585.0 273.7 583.2 277.9 581.4 280.0 C579.6 282.1 576.6 284.2 574.2 283.6 C571.8 283.0 568.8 278.8 567.0 276.4 C565.2 274.0 562.8 271.6 563.4 269.2Z" fill="#c5bfae"/><path d="M567.0 258.4 C566.4 256.9 569.1 253.6 570.6 253.0 C572.1 252.4 575.4 253.3 576.0 254.8 C576.6 256.3 575.7 261.4 574.2 262.0 C572.7 262.6 567.6 259.9 567.0 258.4Z" fill="#c5bfae"/><path d="M613.8 195.4 C614.1 193.1 618.3 191.2 621.0 190.9 C623.7 190.6 628.8 191.6 630.0 193.6 C631.2 195.5 630.0 200.8 628.2 202.6 C626.4 204.4 621.6 205.6 619.2 204.4 C616.8 203.2 613.5 197.6 613.8 195.4Z" fill="#c5bfae"/><path d="M717.2 250.3 C718.7 248.8 724.9 248.0 727.1 249.4 C729.4 250.7 730.4 255.1 730.7 258.4 C731.0 261.7 729.8 265.9 728.9 269.2 C728.0 272.5 726.8 277.0 725.3 278.2 C723.8 279.4 720.5 278.5 719.9 276.4 C719.3 274.3 722.0 268.6 721.7 265.6 C721.4 262.6 718.9 260.9 718.1 258.4 C717.4 255.8 715.7 251.8 717.2 250.3Z" fill="#c5bfae"/><path d="M692.9 274.6 C693.8 273.7 698.6 274.9 700.1 276.4 C701.6 277.9 702.8 282.7 701.9 283.6 C701.0 284.5 696.2 283.3 694.7 281.8 C693.2 280.3 692.0 275.5 692.9 274.6Z" fill="#c5bfae"/><path d="M1025.9 340.1 C1026.9 338.9 1031.6 340.1 1034.4 343.0 C1037.3 346.0 1039.5 352.0 1042.9 357.6 C1046.4 363.3 1051.7 371.2 1055.1 377.1 C1058.6 383.0 1062.8 388.7 1063.6 392.9 C1064.4 397.2 1062.2 401.3 1060.0 402.7 C1057.7 404.1 1053.9 404.1 1050.2 401.5 C1046.6 398.8 1041.9 391.3 1038.1 386.9 C1034.2 382.4 1029.3 378.7 1027.1 374.7 C1024.9 370.6 1024.5 366.6 1024.7 362.5 C1024.9 358.5 1028.1 354.1 1028.3 350.3 C1028.5 346.6 1024.9 341.3 1025.9 340.1Z" fill="#c5bfae"/><path d="M1053.2 163.5 C1054.4 162.5 1060.0 164.0 1062.4 165.2 C1064.8 166.4 1067.8 169.1 1067.8 170.8 C1067.8 172.4 1064.5 174.9 1062.4 174.9 C1060.3 174.9 1056.6 172.7 1055.1 170.8 C1053.6 168.9 1051.9 164.4 1053.2 163.5Z" fill="#c5bfae"/><path d="M1117.0 128.1 C1118.2 127.0 1125.6 125.1 1130.3 124.0 C1135.0 122.9 1140.4 122.1 1145.1 121.5 C1149.8 120.8 1154.8 119.9 1158.5 120.0 C1162.2 120.1 1165.9 119.2 1167.3 122.2 C1168.8 125.2 1169.8 136.0 1167.3 137.8 C1164.9 139.5 1157.5 134.0 1152.5 132.9 C1147.6 131.8 1142.7 131.4 1137.7 131.1 C1132.8 130.7 1126.4 131.3 1122.9 130.8 C1119.5 130.3 1115.8 129.3 1117.0 128.1Z" fill="#c5bfae"/><path d="M409.7 440.4 C410.8 438.0 414.2 446.5 417.0 447.7 C419.9 448.9 423.5 446.9 426.8 447.7 C430.0 448.5 433.5 451.0 436.5 452.6 C439.6 454.2 445.0 455.8 445.0 457.5 C445.0 459.1 439.6 461.1 436.5 462.3 C433.5 463.5 429.6 463.1 426.8 464.8 C423.9 466.4 422.1 472.5 419.5 472.1 C416.8 471.7 412.6 467.6 411.0 462.3 C409.3 457.1 408.7 442.9 409.7 440.4Z" fill="#c5bfae"/><path d="M409.7 484.2 C411.0 482.0 414.8 481.4 417.0 481.8 C419.3 482.2 422.7 484.4 423.1 486.7 C423.5 488.9 421.7 493.8 419.5 495.2 C417.2 496.6 411.4 497.0 409.7 495.2 C408.1 493.4 408.5 486.5 409.7 484.2Z" fill="#c5bfae"/><path d="M570.4 74.6 L568.0 89.2 L575.3 103.8 L585.0 123.3 L592.3 142.8 L602.1 162.3 L609.4 174.4" fill="none" stroke="#5a5893" stroke-width="1.1" opacity="0.75" stroke-linejoin="round"/><path d="M979.6 91.6 L999.1 83.1 L1019.8 77.0 L1040.5 83.1" fill="none" stroke="#5a5893" stroke-width="1.1" opacity="0.75" stroke-linejoin="round"/><path d="M982.1 92.9 L999.1 96.5 L1018.6 86.8 L1038.1 91.6" fill="none" stroke="#5a5893" stroke-width="1.1" opacity="0.75" stroke-linejoin="round"/><path d="M831.1 215.8 L836.0 230.4 L819.0 228.0" fill="none" stroke="#5a5893" stroke-width="1.1" opacity="0.75" stroke-linejoin="round"/><path d="M927.3 220.7 L939.5 226.8" fill="none" stroke="#5a5893" stroke-width="1.1" opacity="0.75" stroke-linejoin="round"/><path d="M927.3 220.7 L901.7 254.8 L906.6 264.5" fill="none" stroke="#5a5893" stroke-width="1.1" opacity="0.75" stroke-linejoin="round"/><path d="M882.3 269.4 L889.6 290.1" fill="none" stroke="#5a5893" stroke-width="1.1" opacity="0.75" stroke-linejoin="round"/><path d="M916.3 274.2 L923.6 281.5 L950.4 274.2 L952.9 290.1" fill="none" stroke="#5a5893" stroke-width="1.1" opacity="0.75" stroke-linejoin="round"/><path d="M881.9 272.3 L896.5 306.3 L903.8 320.9 L918.4 328.2 L911.1 340.4" fill="none" stroke="#5a5893" stroke-width="1.1" opacity="0.75" stroke-linejoin="round"/><path d="M855.1 350.2 L881.9 345.3 L911.1 340.4 L925.7 325.8 L950.1 306.3 L950.1 277.1 L920.8 277.1" fill="none" stroke="#5a5893" stroke-width="1.1" opacity="0.75" stroke-linejoin="round"/><path d="M726.2 455.0 L750.6 450.2 L757.9 464.8" fill="none" stroke="#5a5893" stroke-width="1.1" opacity="0.75" stroke-linejoin="round"/><path d="M699.5 457.5 L714.1 450.2 L726.2 455.0" fill="none" stroke="#5a5893" stroke-width="1.1" opacity="0.75" stroke-linejoin="round"/><path d="M736.0 472.1 L740.8 464.8 L757.9 464.8 L770.1 472.1" fill="none" stroke="#5a5893" stroke-width="1.1" opacity="0.75" stroke-linejoin="round"/><path d="M823.8 296.8 L853.0 284.6 L882.3 272.4" fill="none" stroke="#5a5893" stroke-width="1.1" opacity="0.75" stroke-linejoin="round"/><path d="M882.3 272.4 L887.1 284.6 L894.4 301.6 L899.3 318.7 L916.3 328.4" fill="none" stroke="#5a5893" stroke-width="1.1" opacity="0.75" stroke-linejoin="round"/><path d="M916.3 328.4 L926.1 318.7 L940.7 309.0 L950.4 294.3 L950.4 274.9 L926.1 277.3 L921.2 272.4" fill="none" stroke="#5a5893" stroke-width="1.1" opacity="0.75" stroke-linejoin="round"/><path d="M853.0 345.5 L862.8 347.9 L887.1 350.3 L909.0 340.6 L916.3 328.4" fill="none" stroke="#5a5893" stroke-width="1.1" opacity="0.75" stroke-linejoin="round"/><path d="M887.1 309.0 L882.3 318.7 L887.1 330.9 L877.4 340.6 L865.2 343.0 L862.8 350.3" fill="none" stroke="#5a5893" stroke-width="1.1" opacity="0.75" stroke-linejoin="round"/><path d="M894.4 301.6 L916.3 299.2 L935.8 284.6" fill="none" stroke="#5a5893" stroke-width="1.1" opacity="0.75" stroke-linejoin="round"/><path d="M940.7 309.0 L950.4 318.7 L960.2 326.0" fill="none" stroke="#5a5893" stroke-width="1.1" opacity="0.75" stroke-linejoin="round"/><path d="M909.0 340.6 L916.3 352.8 L921.2 367.4 L930.9 379.6 L945.6 386.9 L960.2 382.0 L974.8 384.4 L984.5 369.8 L989.4 362.5" fill="none" stroke="#5a5893" stroke-width="1.1" opacity="0.75" stroke-linejoin="round"/><path d="M935.8 350.3 L950.4 345.5 L965.0 346.7" fill="none" stroke="#5a5893" stroke-width="1.1" opacity="0.75" stroke-linejoin="round"/><path d="M887.1 350.3 L872.5 367.4 L862.8 382.0 L865.2 396.6 L872.5 408.8 L877.4 416.1" fill="none" stroke="#5a5893" stroke-width="1.1" opacity="0.75" stroke-linejoin="round"/><path d="M945.6 386.9 L943.1 396.6 L950.4 406.3 L960.2 401.5 L965.0 386.9" fill="none" stroke="#5a5893" stroke-width="1.1" opacity="0.75" stroke-linejoin="round"/><path d="M965.0 382.0 L974.8 391.7 L989.4 394.2 L994.2 403.9" fill="none" stroke="#5a5893" stroke-width="1.1" opacity="0.75" stroke-linejoin="round"/><path d="M950.4 406.3 L955.3 416.1" fill="none" stroke="#5a5893" stroke-width="1.1" opacity="0.75" stroke-linejoin="round"/><path d="M955.3 440.4 L935.8 459.9 L916.3 479.4 L911.5 495.2" fill="none" stroke="#5a5893" stroke-width="1.1" opacity="0.75" stroke-linejoin="round"/><path d="M950.4 455.0 L965.0 474.5 L982.1 495.2" fill="none" stroke="#5a5893" stroke-width="1.1" opacity="0.75" stroke-linejoin="round"/><path d="M991.8 445.3 L991.8 462.3 L984.5 476.9 L979.6 484.2 L986.9 495.2" fill="none" stroke="#5a5893" stroke-width="1.1" opacity="0.75" stroke-linejoin="round"/><path d="M1013.7 472.1 L1021.0 469.6 L1023.5 479.4 L1016.2 481.8 L1013.7 472.1" fill="none" stroke="#5a5893" stroke-width="1.1" opacity="0.75" stroke-linejoin="round"/><path d="M666.8 122.8 L673.7 129.6 L683.3 136.5 L684.7 144.8 L675.0 143.4 L666.8 147.5 L661.3 155.8 L666.8 162.7 L673.7 161.3 L680.5 164.0 L684.7 159.9 L686.1 154.4 L684.7 144.8" fill="none" stroke="#5a5893" stroke-width="1.1" opacity="0.75" stroke-linejoin="round"/><path d="M683.3 136.5 L694.3 131.0 L702.6 135.1 L714.9 137.9 L716.3 144.8 L719.1 147.5 L724.6 140.6 L732.8 143.4 L743.8 142.0 L749.4 136.5 L760.4 133.8 L767.2 143.4 L764.5 150.3 L765.9 153.0" fill="none" stroke="#5a5893" stroke-width="1.1" opacity="0.75" stroke-linejoin="round"/><path d="M719.1 147.5 L717.7 155.8 L708.1 162.7 L697.1 170.9 L694.3 175.0" fill="none" stroke="#5a5893" stroke-width="1.1" opacity="0.75" stroke-linejoin="round"/><path d="M680.5 164.0 L688.8 172.3 L694.3 175.0 L699.8 180.5 L702.6 191.6 L705.3 197.1 L709.4 197.1 L719.1 188.8 L721.8 181.9 L730.1 177.8 L739.7 180.5 L741.1 186.1 L738.3 188.8 L739.7 191.6 L745.2 188.8" fill="none" stroke="#5a5893" stroke-width="1.1" opacity="0.75" stroke-linejoin="round"/><path d="M648.9 194.3 L658.5 202.6 L666.8 206.7 L677.8 202.6 L686.1 201.2 L694.3 198.4 L702.6 192.9" fill="none" stroke="#5a5893" stroke-width="1.1" opacity="0.75" stroke-linejoin="round"/><path d="M666.8 206.7 L661.3 219.1 L665.4 223.2 L675.0 223.2 L677.8 216.3 L686.1 213.6 L687.4 203.9" fill="none" stroke="#5a5893" stroke-width="1.1" opacity="0.75" stroke-linejoin="round"/><path d="M705.3 197.1 L698.4 202.6 L694.3 213.6 L686.1 213.6" fill="none" stroke="#5a5893" stroke-width="1.1" opacity="0.75" stroke-linejoin="round"/><path d="M709.4 197.1 L710.8 209.4 L705.3 219.1 L702.6 223.2 L694.3 224.6 L690.2 219.1 L694.3 213.6" fill="none" stroke="#5a5893" stroke-width="1.1" opacity="0.75" stroke-linejoin="round"/><path d="M710.8 209.4 L714.9 214.9 L724.6 214.9 L730.1 216.3 L734.2 209.4 L739.7 205.3 L742.5 201.2 L749.4 198.4" fill="none" stroke="#5a5893" stroke-width="1.1" opacity="0.75" stroke-linejoin="round"/><path d="M702.6 223.2 L708.1 221.8 L716.3 227.3 L719.1 230.1 L724.6 228.7 L730.1 226.0 L734.2 226.0 L739.7 230.1 L741.1 224.6 L745.2 221.8 L752.1 219.1 L750.7 213.6 L754.9 209.4" fill="none" stroke="#5a5893" stroke-width="1.1" opacity="0.75" stroke-linejoin="round"/><path d="M708.1 224.6 L698.4 234.2 L705.3 237.0 L719.1 238.3 L719.1 230.1" fill="none" stroke="#5a5893" stroke-width="1.1" opacity="0.75" stroke-linejoin="round"/><path d="M724.6 228.7 L726.0 234.2 L731.5 234.2 L737.0 238.3 L738.3 243.8" fill="none" stroke="#5a5893" stroke-width="1.1" opacity="0.75" stroke-linejoin="round"/><path d="M731.5 234.2 L734.2 227.3 L739.7 230.1" fill="none" stroke="#5a5893" stroke-width="1.1" opacity="0.75" stroke-linejoin="round"/><path d="M675.0 223.2 L673.7 230.1 L677.8 235.6 L672.3 241.1 L665.4 243.8 L661.3 250.0" fill="none" stroke="#5a5893" stroke-width="1.1" opacity="0.75" stroke-linejoin="round"/><path d="M690.2 219.1 L691.6 227.3 L687.4 234.2 L683.3 237.0 L690.2 239.7 L694.3 234.2 L691.6 227.3" fill="none" stroke="#5a5893" stroke-width="1.1" opacity="0.75" stroke-linejoin="round"/><path d="M628.3 220.5 L632.4 228.7 L635.1 237.0 L642.0 239.7 L651.6 241.1 L654.4 246.6" fill="none" stroke="#5a5893" stroke-width="1.1" opacity="0.75" stroke-linejoin="round"/><path d="M635.1 237.0 L628.3 241.1 L625.5 250.0" fill="none" stroke="#5a5893" stroke-width="1.1" opacity="0.75" stroke-linejoin="round"/><path d="M789.3 164.0 L793.4 159.9 L800.0 157.2" fill="none" stroke="#5a5893" stroke-width="1.1" opacity="0.75" stroke-linejoin="round"/><path d="M821.5 66.7 L809.6 74.8 L802.2 82.2 L791.9 83.7 L784.4 89.6 L785.9 101.5 L781.5 107.4 L787.4 119.3 L797.8 119.3 L806.7 122.2" fill="none" stroke="#5a5893" stroke-width="1.1" opacity="0.75" stroke-linejoin="round"/><path d="M842.2 94.8 L863.0 93.3 L871.9 83.7 L883.7 88.1 L897.0 86.7 L898.5 71.9 L897.0 66.7" fill="none" stroke="#5a5893" stroke-width="1.1" opacity="0.75" stroke-linejoin="round"/><path d="M842.2 94.8 L836.3 105.9 L852.6 122.2 L855.6 119.3 L854.1 108.9 L863.0 107.4 L877.8 107.4 L892.6 105.2 L903.0 103.7 L908.9 101.5 L914.8 98.5 L913.3 89.6 L919.3 86.7 L925.2 92.6 L932.6 80.7 L940.0 79.3" fill="none" stroke="#5a5893" stroke-width="1.1" opacity="0.75" stroke-linejoin="round"/><path d="M852.6 122.2 L840.7 125.2 L837.8 129.6" fill="none" stroke="#5a5893" stroke-width="1.1" opacity="0.75" stroke-linejoin="round"/><path d="M903.0 103.7 L900.0 116.3 L901.5 125.2 L897.0 129.6 L889.6 126.7 L880.7 128.1 L868.9 132.6 L864.4 140.0 L864.4 147.4" fill="none" stroke="#5a5893" stroke-width="1.1" opacity="0.75" stroke-linejoin="round"/><path d="M897.0 129.6 L900.0 138.5 L908.9 145.9 L914.8 147.4 L916.3 153.3 L928.1 145.9 L934.1 137.0 L934.1 119.3 L929.6 108.9 L931.1 100.0 L925.2 92.6" fill="none" stroke="#5a5893" stroke-width="1.1" opacity="0.75" stroke-linejoin="round"/><path d="M916.3 153.3 L929.6 154.8 L935.6 163.7 L937.0 166.7" fill="none" stroke="#5a5893" stroke-width="1.1" opacity="0.75" stroke-linejoin="round"/><path d="M953.3 98.5 L957.8 108.9 L959.3 122.2 L954.8 132.6 L957.8 137.0 L966.7 138.5 L970.4 141.5 L965.2 148.9 L963.7 153.3" fill="none" stroke="#5a5893" stroke-width="1.1" opacity="0.75" stroke-linejoin="round"/><path d="M898.5 71.9 L907.4 82.2 L911.9 71.9 L919.3 74.8 L919.3 66.7" fill="none" stroke="#5a5893" stroke-width="1.1" opacity="0.75" stroke-linejoin="round"/><path d="M907.4 82.2 L898.5 94.1 L908.9 101.5" fill="none" stroke="#5a5893" stroke-width="1.1" opacity="0.75" stroke-linejoin="round"/><path d="M824.4 144.4 L824.4 148.9 L814.1 151.9 L799.3 157.8 L788.9 163.7" fill="none" stroke="#5a5893" stroke-width="1.1" opacity="0.75" stroke-linejoin="round"/><path d="M824.4 148.9 L818.5 154.8 L812.6 162.2 L821.5 166.7 L831.9 163.7 L830.4 157.8 L836.3 154.8 L842.2 157.8" fill="none" stroke="#5a5893" stroke-width="1.1" opacity="0.75" stroke-linejoin="round"/><path d="M821.5 166.7 L824.4 172.6 L831.9 177.0 L842.2 177.0 L846.7 185.9 L858.5 187.4 L867.4 188.9 L874.8 193.3" fill="none" stroke="#5a5893" stroke-width="1.1" opacity="0.75" stroke-linejoin="round"/><path d="M831.9 177.0 L824.4 183.0 L820.0 190.4 L809.6 200.0" fill="none" stroke="#5a5893" stroke-width="1.1" opacity="0.75" stroke-linejoin="round"/><path d="M824.4 183.0 L827.4 193.3 L831.9 200.0" fill="none" stroke="#5a5893" stroke-width="1.1" opacity="0.75" stroke-linejoin="round"/><path d="M914.8 183.0 L919.3 190.4 L922.2 200.0" fill="none" stroke="#5a5893" stroke-width="1.1" opacity="0.75" stroke-linejoin="round"/><path d="M709.2 291.6 L715.6 302.7 L726.7 310.6 L739.4 318.6 L753.7 334.4 L761.6 337.6 L772.7 336.8" fill="none" stroke="#5a5893" stroke-width="1.1" opacity="0.75" stroke-linejoin="round"/><path d="M734.6 299.5 L739.4 318.6" fill="none" stroke="#5a5893" stroke-width="1.1" opacity="0.75" stroke-linejoin="round"/><path d="M772.7 336.8 L785.4 331.3 L787.0 324.9 L802.9 318.6 L828.3 312.2 L823.5 299.5 L812.4 290.0" fill="none" stroke="#5a5893" stroke-width="1.1" opacity="0.75" stroke-linejoin="round"/><path d="M828.3 312.2 L841.0 328.1 L845.7 340.8 L853.7 347.1 L870.0 342.4" fill="none" stroke="#5a5893" stroke-width="1.1" opacity="0.75" stroke-linejoin="round"/><path d="M772.7 336.8 L767.9 361.4 L764.8 375.7 L761.6 378.9" fill="none" stroke="#5a5893" stroke-width="1.1" opacity="0.75" stroke-linejoin="round"/><path d="M785.4 331.3 L798.1 336.0 L809.2 350.3 L810.8 364.6 L818.7 369.4 L829.8 375.7 L833.0 378.9" fill="none" stroke="#5a5893" stroke-width="1.1" opacity="0.75" stroke-linejoin="round"/><path d="M853.7 347.1 L850.5 361.4 L847.3 375.7 L842.5 385.2 L848.9 391.6 L858.4 397.9 L863.2 399.5" fill="none" stroke="#5a5893" stroke-width="1.1" opacity="0.75" stroke-linejoin="round"/><path d="M761.6 378.9 L726.7 385.2 L706.0 390.0 L687.0 391.6 L680.6 385.2 L687.0 366.2 L693.3 347.1 L680.6 337.6" fill="none" stroke="#5a5893" stroke-width="1.1" opacity="0.75" stroke-linejoin="round"/><path d="M761.6 378.9 L771.1 388.4 L772.7 396.3 L761.6 407.5 L755.2 417.0 L753.7 440.0" fill="none" stroke="#5a5893" stroke-width="1.1" opacity="0.75" stroke-linejoin="round"/><path d="M801.3 385.2 L791.7 391.6 L783.8 394.8 L780.6 401.1 L783.8 410.6 L791.7 417.0" fill="none" stroke="#5a5893" stroke-width="1.1" opacity="0.75" stroke-linejoin="round"/><path d="M826.7 375.7 L825.1 385.2 L829.8 393.2 L828.3 401.1 L823.5 404.3 L825.1 413.8" fill="none" stroke="#5a5893" stroke-width="1.1" opacity="0.75" stroke-linejoin="round"/><path d="M704.4 391.6 L720.3 407.5 L741.0 426.5 L728.3 440.0" fill="none" stroke="#5a5893" stroke-width="1.1" opacity="0.75" stroke-linejoin="round"/><path d="M687.0 391.6 L691.7 397.9 L680.6 407.5 L690.2 421.7 L693.3 431.3 L687.0 440.0" fill="none" stroke="#5a5893" stroke-width="1.1" opacity="0.75" stroke-linejoin="round"/><path d="M780.6 412.2 L774.3 421.7 L767.9 440.0" fill="none" stroke="#5a5893" stroke-width="1.1" opacity="0.75" stroke-linejoin="round"/><path d="M783.8 421.7 L794.9 429.7" fill="none" stroke="#5a5893" stroke-width="1.1" opacity="0.75" stroke-linejoin="round"/><path d="M863.2 399.5 L860.0 407.5 L855.2 410.6" fill="none" stroke="#5a5893" stroke-width="1.1" opacity="0.75" stroke-linejoin="round"/><path d="M926.1 350.3 C927.1 347.7 932.0 346.3 933.4 347.9 C934.8 349.5 935.6 357.4 934.6 360.1 C933.6 362.7 928.7 365.4 927.3 363.7 C925.9 362.1 925.1 353.0 926.1 350.3Z" fill="#7aa7b2"/><path d="M568.0 112.3 C568.4 115.8 568.4 123.9 570.4 133.0 C572.4 142.2 576.1 153.3 580.2 167.1 C584.2 180.9 589.1 199.2 594.8 215.8 C600.4 232.4 605.7 250.8 614.2 266.9 C622.8 283.1 637.5 301.5 645.9 312.6 C654.3 323.7 659.9 328.4 664.8 333.7 C669.6 338.9 671.6 340.7 675.1 344.0 C678.5 347.3 682.0 350.4 685.4 353.5 C688.8 356.5 692.1 359.3 695.7 362.2 C699.3 365.1 703.1 368.3 706.8 371.0 C710.5 373.6 714.1 375.6 717.9 378.1 C721.8 380.6 725.9 383.4 729.8 386.0 C733.8 388.7 737.8 391.6 741.7 394.0 C745.7 396.3 749.6 398.3 753.7 400.3 C757.8 402.3 762.1 404.0 766.3 405.9 C770.6 407.7 774.7 409.7 779.0 411.4 C783.4 413.1 788.2 414.6 792.5 416.2 C796.9 417.8 800.9 419.5 805.2 421.0 C809.6 422.4 814.1 423.9 818.7 424.9 C823.4 426.0 829.0 426.7 833.0 427.3 C837.0 427.9 841.0 428.2 842.5 428.4" fill="none" stroke="#de2d1d" stroke-width="6.2" stroke-dasharray="6 7.3"/><path d="M634.8 260.6 C637.8 260.8 648.0 260.1 653.0 262.0 C658.1 264.0 661.2 268.5 665.2 272.3 C669.3 276.0 675.4 282.4 677.4 284.4" fill="none" stroke="#d62818" stroke-width="4.6" stroke-linecap="round"/><path d="M690.2 312.2 C690.7 313.1 691.7 315.8 693.3 317.8 C694.9 319.8 697.3 322.4 699.7 324.1 C702.1 325.8 705.2 326.4 707.6 328.1 C710.0 329.8 712.2 331.8 714.0 334.4 C715.7 337.1 716.1 340.8 717.9 344.0 C719.8 347.1 722.3 351.1 725.1 353.5 C727.9 355.9 731.7 357.7 734.6 358.3 C737.5 358.8 739.9 356.4 742.5 356.7 C745.2 356.9 747.8 358.3 750.5 359.8 C753.1 361.4 755.9 364.1 758.4 366.2 C760.9 368.3 763.4 371.9 765.6 372.5 C767.7 373.2 769.1 370.4 771.1 370.2 C773.1 369.9 775.1 369.8 777.5 371.0 C779.8 372.1 782.5 375.6 785.4 377.3 C788.3 379.0 792.3 379.2 794.9 381.3 C797.6 383.4 799.2 388.7 801.3 390.0 C803.4 391.3 805.5 390.5 807.6 389.2 C809.7 387.9 811.9 384.4 814.0 382.1 C816.1 379.7 818.2 376.0 820.3 374.9 C822.4 373.9 824.8 374.3 826.7 375.7 C828.5 377.2 829.3 381.3 831.4 383.7 C833.5 386.0 837.2 388.1 839.4 390.0 C841.5 391.9 843.1 392.4 844.1 394.8 C845.2 397.1 846.2 401.4 845.7 404.3 C845.2 407.2 841.9 409.6 841.0 412.2 C840.0 414.9 840.3 418.8 840.2 420.2" fill="none" stroke="#d62818" stroke-width="4.8" stroke-linecap="round" stroke-linejoin="round"/><path d="M677.4 284.4 C679.0 287.3 685.5 299.0 687.1 301.5 C688.7 304.0 686.5 297.7 687.0 299.5 C687.5 301.3 689.6 310.1 690.2 312.2" fill="none" stroke="#7a1b12" stroke-width="4.8"/><g transform="translate(567 110.5) rotate(45)" fill="#404040"><rect x="-17" y="-3.2" width="34" height="6.4"/><rect x="-3.2" y="-17" width="6.4" height="34"/></g><g transform="translate(633.5 258.5) rotate(45)" fill="#404040"><rect x="-12.5" y="-2.5" width="25.0" height="5"/><rect x="-2.5" y="-12.5" width="5" height="25.0"/></g><g transform="translate(843.5 429) rotate(45)" fill="#404040"><rect x="-17" y="-3.2" width="34" height="6.4"/><rect x="-3.2" y="-17" width="6.4" height="34"/></g><rect x="595.5" y="96" width="131.5" height="26" fill="#484848"/><rect x="655.5" y="248" width="61.5" height="21" fill="#484848"/><rect x="873.5" y="414" width="142.5" height="28" fill="#484848"/><text x="600" y="119.5" font-family="Liberation Sans,sans-serif" font-weight="700" font-size="29" fill="#dedcc2" textLength="122" lengthAdjust="spacingAndGlyphs">MO I RANA</text><text x="659" y="266.5" font-family="Liberation Sans,sans-serif" font-weight="700" font-size="23" fill="#dedcc2" textLength="54" lengthAdjust="spacingAndGlyphs">PARIS</text><text x="878" y="439.5" font-family="Liberation Sans,sans-serif" font-weight="700" font-size="31.5" fill="#dedcc2" textLength="133" lengthAdjust="spacingAndGlyphs">LIBREVILLE</text><text transform="translate(530.5 142) rotate(-93)" font-family="Liberation Serif,serif" font-style="italic" font-weight="700" font-size="10.5" fill="#3b3a8c" letter-spacing="0.9">NORWEGIAN</text><text x="432" y="480" font-family="Liberation Sans,sans-serif" font-style="italic" font-size="7.8" fill="#55707c" textLength="129" lengthAdjust="spacingAndGlyphs">© OpenStreetMap contributers</text></g></svg>
<div style="left:1167px;top:66px;width:3px;height:429px;background:#3a2422;"></div>
<div style="left:403px;top:495px;width:772px;height:2px;background:#141414;"></div>
<div style="left:403px;top:528.5px;width:772px;height:1.5px;background:#161616;"></div>
<div style="left:403px;top:530px;width:772px;height:27px;background:#212121;"></div>
<div style="left:488px;top:532px;width:83px;height:22px;background:#1d1d1d;border-radius:2px;"></div>
<svg style="left:411px;top:535px;" width="18" height="16" viewBox="0 0 18 16"><rect x="0.5" y="1.5" width="10" height="8" fill="#5a5a5a" stroke="#9a9a9a"/><rect x="6" y="6" width="10" height="8" fill="#3a3a3a" stroke="#9a9a9a"/><path d="M3 3.5 l4 2 l-4 2z" fill="#ddd"/></svg>
<svg style="left:436px;top:535px;" width="18" height="16" viewBox="0 0 18 16"><rect x="1" y="1" width="15" height="10" rx="1" fill="none" stroke="#9a9a9a" stroke-width="1.4"/><path d="M8.5 11 v3 M4.5 14.5 h8" stroke="#9a9a9a" stroke-width="1.4"/></svg>
<svg style="left:461px;top:535px;" width="22" height="18" viewBox="0 0 22 18"><path d="M1 3 h19 v6 a2 2 0 0 1 -2 2 h-3.5 l-2 -3 h-4 l-2 3 h-3.5 a2 2 0 0 1 -2 -2z" fill="#c0c0c0"/><circle cx="6" cy="6.3" r="1.8" fill="#222"/><circle cx="15" cy="6.3" r="1.8" fill="#222"/><path d="M8.5 14 h4 l-2 2.5z" fill="#9a9a9a"/></svg>
<span class="t" style="left:494px;top:533.5px;font-size:14.5px;line-height:19px;color:#9a9a9a;transform:scaleX(0.9455);">(40.3%)</span>
<svg style="left:555px;top:539.5px;" width="10" height="7" viewBox="0 0 10 7"><path d="M1 1.5 L5 4.8 L9 1.5" fill="none" stroke="#9a9a9a" stroke-width="1.3"/></svg>
<svg style="left:577px;top:534px;" width="20" height="18" viewBox="0 0 20 18"><rect x="2.5" y="3.5" width="14" height="10" fill="none" stroke="#9a9a9a" stroke-width="1.3"/><path d="M9.5 0.5 v5 M9.5 11.5 v5 M0 8.5 h5 M14 8.5 h5" stroke="#9a9a9a" stroke-width="1.2"/><path d="M13 15 h4.5 l-2.2 2.5z" fill="#9a9a9a"/></svg>
<div style="left:602px;top:532px;width:24px;height:22px;background:#1a1a1a;"></div>
<svg style="left:604px;top:534px;" width="20" height="18" viewBox="0 0 20 18"><path d="M4 4 L16 2.5 L17.5 14 L2.5 15Z" fill="none" stroke="#2d8ceb" stroke-width="1.5"/><g fill="#2d8ceb"><rect x="2.5" y="2.5" width="3" height="3"/><rect x="14.5" y="1" width="3" height="3"/><rect x="16" y="12.5" width="3" height="3"/><rect x="1" y="13.5" width="3" height="3"/></g></svg>
<div style="left:628px;top:532px;width:81px;height:22px;background:#1b1b1b;border-radius:2px;"></div>
<span class="t" style="left:637px;top:534.0px;font-size:14px;line-height:18px;color:#777;transform:scaleX(0.9521);">0:00:17:55</span>
<svg style="left:717px;top:535px;" width="19" height="16" viewBox="0 0 19 16"><path d="M1 4 h4 l1.5 -2.5 h6 l1.5 2.5 h4 v10.5 h-17z" fill="#9a9a9a"/><circle cx="9.5" cy="9" r="3.2" fill="#212121"/><circle cx="9.5" cy="9" r="1.6" fill="#9a9a9a"/></svg>
<svg style="left:744px;top:534px;" width="19" height="18" viewBox="0 0 19 18"><circle cx="9" cy="5.5" r="3.6" fill="none" stroke="#3c3c3c" stroke-width="1.4"/><circle cx="5.8" cy="11" r="3.6" fill="none" stroke="#3c3c3c" stroke-width="1.4"/><circle cx="12.4" cy="11" r="3.6" fill="none" stroke="#3c3c3c" stroke-width="1.4"/></svg>
<svg style="left:771px;top:533px;" width="20" height="20" viewBox="0 0 20 20"><circle cx="9.5" cy="5.5" r="3.6" fill="#d23a2a"/><circle cx="5.6" cy="11.4" r="3.6" fill="#2a8a34"/><circle cx="13.2" cy="11.4" r="3.6" fill="#2c63d2"/><path d="M14 16.5 h4.5 l-2.2 2.5z" fill="#9a9a9a"/></svg>
<div style="left:796px;top:532px;width:104px;height:22px;background:#1d1d1d;border-radius:2px;"></div>
<span class="t" style="left:803px;top:533.5px;font-size:14.5px;line-height:19px;color:#9a9a9a;transform:scaleX(0.9875);">(Half)</span>
<svg style="left:883.5px;top:539.5px;" width="10" height="7" viewBox="0 0 10 7"><path d="M1 1.5 L5 4.8 L9 1.5" fill="none" stroke="#9a9a9a" stroke-width="1.3"/></svg>
<svg style="left:906px;top:535px;" width="17" height="16" viewBox="0 0 17 16"><rect x="1" y="1.5" width="14" height="12" rx="1.5" fill="none" stroke="#9a9a9a" stroke-width="1.4"/><rect x="4.2" y="4.8" width="7.6" height="5.6" fill="#9a9a9a"/></svg>
<svg style="left:932px;top:535px;" width="18" height="16" viewBox="0 0 18 16"><rect x="1" y="1.5" width="15" height="12" rx="1" fill="none" stroke="#9a9a9a" stroke-width="1.3"/><g fill="#9a9a9a"><rect x="3" y="3.5" width="3" height="3"/><rect x="9" y="3.5" width="3" height="3"/><rect x="6" y="6.5" width="3" height="3"/><rect x="12" y="6.5" width="3" height="3"/><rect x="3" y="9.5" width="3" height="2.5"/><rect x="9" y="9.5" width="3" height="2.5"/></g></svg>
<div style="left:956px;top:532px;width:129px;height:22px;background:#1d1d1d;border-radius:2px;"></div>
<span class="t" style="left:964px;top:533.5px;font-size:14.5px;line-height:19px;color:#9a9a9a;transform:scaleX(0.9255);">Active Camera</span>
<svg style="left:1069px;top:539.5px;" width="10" height="7" viewBox="0 0 10 7"><path d="M1 1.5 L5 4.8 L9 1.5" fill="none" stroke="#9a9a9a" stroke-width="1.3"/></svg>
<div style="left:1090px;top:532px;width:83px;height:22px;background:#1d1d1d;border-radius:2px;"></div>
<span class="t" style="left:1098px;top:533.5px;font-size:14.5px;line-height:19px;color:#9a9a9a;transform:scaleX(0.9709);">1 View</span>
<svg style="left:1157px;top:539.5px;" width="10" height="7" viewBox="0 0 10 7"><path d="M1 1.5 L5 4.8 L9 1.5" fill="none" stroke="#9a9a9a" stroke-width="1.3"/></svg>
<div style="left:1183px;top:0px;width:357px;height:30px;background:#1f1f1f;"></div>
<div style="left:1183px;top:29px;width:357px;height:2px;background:#151515;"></div>
<svg style="left:1193px;top:8px;" width="14" height="13" viewBox="0 0 14 13"><g fill="#a8a8a8"><rect x="0" y="1" width="2" height="2"/><rect x="3.5" y="1" width="10" height="2"/><rect x="0" y="5.3" width="2" height="2"/><rect x="3.5" y="5.3" width="10" height="2"/><rect x="0" y="9.6" width="2" height="2"/><rect x="3.5" y="9.6" width="10" height="2"/></g></svg>
<div style="left:1214px;top:2px;width:1px;height:26px;background:#181818;"></div>
<span class="t" style="left:1228px;top:7.0px;font-size:12.5px;line-height:16px;color:#d2d2d2;transform:scaleX(0.9664);text-shadow:0.4px 0 0 #ccc;">Copy of Copy of Copy of Copy of Copy of ...</span>
<div style="left:1475px;top:2px;width:66px;height:28px;box-sizing:border-box;border:1.5px solid #2b6fc2;border-right:none;background:#1c1c1c;overflow:hidden;"></div>
<svg style="left:1486px;top:10px;" width="12" height="10" viewBox="0 0 12 10"><path d="M1.5 5.5 L4.5 8.5 L10.5 1.5" fill="none" stroke="#2d7fe0" stroke-width="1.6"/></svg>
<div style="left:1503px;top:6.5px;width:37px;height:17px;overflow:hidden;"><span class="t" style="left:0;top:0;font-size:13px;line-height:17px;color:#2d7fe0;transform:scaleX(0.9600);">Finalize</span></div>
<svg width="0" height="0" style="left:0;top:0"><defs><radialGradient id="tg1" cx="0.45" cy="0.6" r="0.6"><stop offset="0" stop-color="#f2ead0"/><stop offset="1" stop-color="#d2c07c"/></radialGradient><filter id="tb" x="0" y="0" width="1" height="1"><feGaussianBlur stdDeviation="1.3"/></filter><filter id="tb2" x="0" y="0" width="1" height="1"><feGaussianBlur stdDeviation="0.6"/></filter></defs></svg>
<div style="left:1183px;top:30px;width:357px;height:445px;overflow:hidden;"><div style="left:-1183px;top:-30px;width:1800px;height:945px;">
<div style="left:1184px;top:31px;width:69px;height:69px;overflow:hidden;background:#888;"><svg style="left:-4px;top:-4px;filter:blur(0.7px);" width="77" height="77" viewBox="0 0 69 69" preserveAspectRatio="none"><rect width="69" height="69" fill="#cfc9ba"/><path d="M22 0 h18 l-4 8 l-8 6 l-6 -4z M0 28 l8 -4 l10 -2 l8 -6 l10 -8 l8 2 l2 8 l-8 8 l-10 4 l-8 6 l-10 4 l-6 8 l-4 6z M6 20 l10 -2 l4 4 l-12 2z M48 20 l12 4 l9 3 v4 l-12 -4 l-9 -4z M62 4 l7 2 v4 l-7 -3z" fill="#86bed2"/></svg></div>
<span class="t" style="left:1259px;top:35.5px;font-size:17px;line-height:22px;color:#c2c2c2;transform:scaleX(0.9110);">Copy of Cop...</span>
<svg style="left:1372px;top:40.5px;" width="18" height="14" viewBox="0 0 18 14"><rect x="1" y="1" width="16" height="12" rx="1.5" fill="none" stroke="#2d7fe0" stroke-width="1.6"/><path d="M3 11 l4 -4.5 l3 3 l2 -1.5 l3.5 3z" fill="#2d7fe0"/><circle cx="5.2" cy="4.6" r="1.2" fill="#2d7fe0"/></svg>
<span class="t" style="left:1398px;top:34.5px;font-size:19px;line-height:25px;color:#777;font-family:'Liberation Serif',serif;transform:scaleX(1.0931);">A</span>
<div style="left:1420px;top:37.7px;width:90px;height:21px;box-sizing:border-box;border:1.5px solid #5a840e;border-radius:11px;"></div>
<svg style="left:1429px;top:43.1px;" width="12" height="10" viewBox="0 0 12 10"><path d="M1.5 5.5 L4.5 8.5 L10.5 1.5" fill="none" stroke="#79b400" stroke-width="1.7"/></svg>
<span class="t" style="left:1446px;top:40.1px;font-size:12.5px;line-height:16px;color:#76b000;font-weight:700;transform:scaleX(1.0284);">Finalized</span>
<svg style="left:1514px;top:38.5px;" width="19" height="17" viewBox="0 0 19 17"><rect x="1" y="7.5" width="11" height="8" rx="1" fill="none" stroke="#6a6a6a" stroke-width="1.5"/><path d="M9 7.5 v-2.5 a3.6 3.6 0 0 1 7.2 0 v1.2" fill="none" stroke="#6a6a6a" stroke-width="1.5"/><rect x="5.6" y="10" width="1.8" height="3" fill="#6a6a6a"/></svg>
<div style="left:1184px;top:104px;width:69px;height:69px;overflow:hidden;background:#888;"><svg style="left:-4px;top:-4px;filter:blur(1.4px);" width="77" height="77" viewBox="0 0 69 69" preserveAspectRatio="none"><rect width="69" height="69" fill="#e4d7a0"/><rect width="69" height="69" fill="url(#tg1)"/><path d="M0 0 h27 l-4 5 l-10 7 l-7 8 l-6 3z" fill="#3f5a22"/><path d="M69 36 l-8 8 l-8 10 l-8 8 l2 7 h22z" fill="#4f6a2a"/><path d="M52 52 l-10 12 l2 5 h8z" fill="#8e9048"/><path d="M22 5 l16 -5 l7 3 l-1 7 l-8 6 l-6 6 l-2 6 l-10 2 l-8 4 l-6 8 l-4 4 v-24 l5 -2 l7 -8z" fill="#0d1828"/><path d="M47 10 l11 2 l11 3 v3 l-11 -2 l-11 -3z" fill="#0d1828"/></svg></div>
<div style="left:1183px;top:102px;width:357px;height:1.5px;background:#1b1b1b;"></div>
<span class="t" style="left:1259px;top:108.5px;font-size:17px;line-height:22px;color:#c2c2c2;transform:scaleX(0.9110);">Copy of Cop...</span>
<svg style="left:1372px;top:113.5px;" width="18" height="14" viewBox="0 0 18 14"><rect x="1" y="1" width="16" height="12" rx="1.5" fill="none" stroke="#2d7fe0" stroke-width="1.6"/><path d="M3 11 l4 -4.5 l3 3 l2 -1.5 l3.5 3z" fill="#2d7fe0"/><circle cx="5.2" cy="4.6" r="1.2" fill="#2d7fe0"/></svg>
<span class="t" style="left:1398px;top:107.5px;font-size:19px;line-height:25px;color:#777;font-family:'Liberation Serif',serif;transform:scaleX(1.0931);">A</span>
<div style="left:1420px;top:110.7px;width:90px;height:21px;box-sizing:border-box;border:1.5px solid #5a840e;border-radius:11px;"></div>
<svg style="left:1429px;top:116.1px;" width="12" height="10" viewBox="0 0 12 10"><path d="M1.5 5.5 L4.5 8.5 L10.5 1.5" fill="none" stroke="#79b400" stroke-width="1.7"/></svg>
<span class="t" style="left:1446px;top:113.1px;font-size:12.5px;line-height:16px;color:#76b000;font-weight:700;transform:scaleX(1.0284);">Finalized</span>
<svg style="left:1514px;top:111.5px;" width="19" height="17" viewBox="0 0 19 17"><rect x="1" y="7.5" width="11" height="8" rx="1" fill="none" stroke="#6a6a6a" stroke-width="1.5"/><path d="M9 7.5 v-2.5 a3.6 3.6 0 0 1 7.2 0 v1.2" fill="none" stroke="#6a6a6a" stroke-width="1.5"/><rect x="5.6" y="10" width="1.8" height="3" fill="#6a6a6a"/></svg>
<div style="left:1184px;top:175px;width:69px;height:69px;overflow:hidden;background:#888;"><svg style="left:-4px;top:-4px;filter:blur(1.4px);" width="77" height="77" viewBox="0 0 69 69" preserveAspectRatio="none"><rect width="69" height="69" fill="#3f5a22"/><path d="M48 14 l10 -3 l11 1 v24 l-10 -2 l-12 -2 l-8 -4 l4 -8z" fill="#9a9250"/><path d="M28 31 l14 1 l18 2 l9 2 v6 l-20 -2 l-20 -2z" fill="#8a8a4c"/><path d="M0 48 l8 4 l12 2 l12 -4 l10 -2 l-2 -8 l8 -2 l12 1 l9 1 v29 h-69z" fill="#e4d7a0"/><path d="M0 0 h10 l-2 8 l-8 2z M12 2 l10 -2 l-2 6 l-7 1z" fill="#0d1828"/><path d="M30 24 l10 -2 l8 4 l-2 5 l-10 1 l-6 -3z" fill="#0d1828"/><path d="M60 22 l6 2 l3 12 l-5 -2z" fill="#0d1828"/><circle cx="63" cy="22" r="2.2" fill="#2a9a78"/><path d="M0 30 l6 0 l6 6 l8 2 l8 2 l12 2 l2 6 l-12 2 l-12 2 l-10 -2 l-8 -4z" fill="#0d1828"/><path d="M40 54 l3 0 l5 15 h-3z" fill="#0d1828"/></svg></div>
<div style="left:1183px;top:173px;width:357px;height:1.5px;background:#1b1b1b;"></div>
<span class="t" style="left:1259px;top:179.5px;font-size:17px;line-height:22px;color:#c2c2c2;transform:scaleX(0.9110);">Copy of Cop...</span>
<svg style="left:1372px;top:184.5px;" width="18" height="14" viewBox="0 0 18 14"><rect x="1" y="1" width="16" height="12" rx="1.5" fill="none" stroke="#2d7fe0" stroke-width="1.6"/><path d="M3 11 l4 -4.5 l3 3 l2 -1.5 l3.5 3z" fill="#2d7fe0"/><circle cx="5.2" cy="4.6" r="1.2" fill="#2d7fe0"/></svg>
<span class="t" style="left:1398px;top:178.5px;font-size:19px;line-height:25px;color:#777;font-family:'Liberation Serif',serif;transform:scaleX(1.0931);">A</span>
<div style="left:1420px;top:181.7px;width:90px;height:21px;box-sizing:border-box;border:1.5px solid #5a840e;border-radius:11px;"></div>
<svg style="left:1429px;top:187.1px;" width="12" height="10" viewBox="0 0 12 10"><path d="M1.5 5.5 L4.5 8.5 L10.5 1.5" fill="none" stroke="#79b400" stroke-width="1.7"/></svg>
<span class="t" style="left:1446px;top:184.1px;font-size:12.5px;line-height:16px;color:#76b000;font-weight:700;transform:scaleX(1.0284);">Finalized</span>
<svg style="left:1514px;top:182.5px;" width="19" height="17" viewBox="0 0 19 17"><rect x="1" y="7.5" width="11" height="8" rx="1" fill="none" stroke="#6a6a6a" stroke-width="1.5"/><path d="M9 7.5 v-2.5 a3.6 3.6 0 0 1 7.2 0 v1.2" fill="none" stroke="#6a6a6a" stroke-width="1.5"/><rect x="5.6" y="10" width="1.8" height="3" fill="#6a6a6a"/></svg>
<div style="left:1184px;top:246.5px;width:69px;height:69px;overflow:hidden;background:#888;"><svg style="left:-4px;top:-4px;filter:blur(1.4px);" width="77" height="77" viewBox="0 0 69 69" preserveAspectRatio="none"><rect width="69" height="69" fill="#e4d7a0"/><rect width="69" height="69" fill="url(#tg1)"/><path d="M0 0 h46 l-8 6 l-10 6 l-8 10 l-10 8 l-10 4z" fill="#3f5a22"/><path d="M69 46 l-6 8 l-6 10 l2 5 h10z" fill="#5a7430"/><path d="M0 36 l6 -2 l8 -8 l8 -10 l10 -4 l10 -6 l8 2 l-2 8 l-10 6 l-8 8 l-10 4 l-8 8 l-6 12 l-6 6z" fill="#0d1828"/><path d="M50 16 l10 2 l9 4 v3 l-10 -3 l-9 -3z M58 4 l8 2 l-2 3z" fill="#0d1828"/></svg></div>
<div style="left:1183px;top:244.5px;width:357px;height:1.5px;background:#1b1b1b;"></div>
<span class="t" style="left:1259px;top:251.0px;font-size:17px;line-height:22px;color:#c2c2c2;transform:scaleX(0.9110);">Copy of Cop...</span>
<svg style="left:1372px;top:256.0px;" width="18" height="14" viewBox="0 0 18 14"><rect x="1" y="1" width="16" height="12" rx="1.5" fill="none" stroke="#2d7fe0" stroke-width="1.6"/><path d="M3 11 l4 -4.5 l3 3 l2 -1.5 l3.5 3z" fill="#2d7fe0"/><circle cx="5.2" cy="4.6" r="1.2" fill="#2d7fe0"/></svg>
<span class="t" style="left:1398px;top:250.0px;font-size:19px;line-height:25px;color:#777;font-family:'Liberation Serif',serif;transform:scaleX(1.0931);">A</span>
<div style="left:1420px;top:253.2px;width:90px;height:21px;box-sizing:border-box;border:1.5px solid #5a840e;border-radius:11px;"></div>
<svg style="left:1429px;top:258.6px;" width="12" height="10" viewBox="0 0 12 10"><path d="M1.5 5.5 L4.5 8.5 L10.5 1.5" fill="none" stroke="#79b400" stroke-width="1.7"/></svg>
<span class="t" style="left:1446px;top:255.6px;font-size:12.5px;line-height:16px;color:#76b000;font-weight:700;transform:scaleX(1.0284);">Finalized</span>
<svg style="left:1514px;top:254.0px;" width="19" height="17" viewBox="0 0 19 17"><rect x="1" y="7.5" width="11" height="8" rx="1" fill="none" stroke="#6a6a6a" stroke-width="1.5"/><path d="M9 7.5 v-2.5 a3.6 3.6 0 0 1 7.2 0 v1.2" fill="none" stroke="#6a6a6a" stroke-width="1.5"/><rect x="5.6" y="10" width="1.8" height="3" fill="#6a6a6a"/></svg>
<div style="left:1184px;top:318px;width:69px;height:69px;overflow:hidden;background:#888;"><svg style="left:-4px;top:-4px;filter:blur(1.4px);" width="77" height="77" viewBox="0 0 69 69" preserveAspectRatio="none"><rect width="69" height="69" fill="#0d1828"/><path d="M12 6 l8 -4 l6 6 l-4 10 l-8 -2z" fill="#3c5524"/><path d="M28 12 l14 -8 l27 -4 v34 l-8 4 l-10 -2 l-10 4 l-8 6 l-10 -2 l-6 -8 l-8 2 l-4 -8 l10 -8 l12 -4z" fill="#3f5a22"/><path d="M0 24 l8 -2 l6 6 l-6 8 l-8 2z" fill="#3c5524"/><path d="M10 52 l10 -6 l10 2 l-4 10 l-12 6z" fill="#b8a868"/><path d="M22 69 l10 -10 l14 -6 l12 -4 l11 -2 v22z" fill="#e4d7a0"/><path d="M66 20 l3 -2 v20 l-5 -6z" fill="#b8a868"/></svg></div>
<div style="left:1183px;top:316px;width:357px;height:1.5px;background:#1b1b1b;"></div>
<span class="t" style="left:1259px;top:322.5px;font-size:17px;line-height:22px;color:#c2c2c2;transform:scaleX(0.9110);">Copy of Cop...</span>
<svg style="left:1372px;top:327.5px;" width="18" height="14" viewBox="0 0 18 14"><rect x="1" y="1" width="16" height="12" rx="1.5" fill="none" stroke="#2d7fe0" stroke-width="1.6"/><path d="M3 11 l4 -4.5 l3 3 l2 -1.5 l3.5 3z" fill="#2d7fe0"/><circle cx="5.2" cy="4.6" r="1.2" fill="#2d7fe0"/></svg>
<span class="t" style="left:1398px;top:321.5px;font-size:19px;line-height:25px;color:#777;font-family:'Liberation Serif',serif;transform:scaleX(1.0931);">A</span>
<div style="left:1420px;top:324.7px;width:90px;height:21px;box-sizing:border-box;border:1.5px solid #5a840e;border-radius:11px;"></div>
<svg style="left:1429px;top:330.1px;" width="12" height="10" viewBox="0 0 12 10"><path d="M1.5 5.5 L4.5 8.5 L10.5 1.5" fill="none" stroke="#79b400" stroke-width="1.7"/></svg>
<span class="t" style="left:1446px;top:327.1px;font-size:12.5px;line-height:16px;color:#76b000;font-weight:700;transform:scaleX(1.0284);">Finalized</span>
<svg style="left:1514px;top:325.5px;" width="19" height="17" viewBox="0 0 19 17"><rect x="1" y="7.5" width="11" height="8" rx="1" fill="none" stroke="#6a6a6a" stroke-width="1.5"/><path d="M9 7.5 v-2.5 a3.6 3.6 0 0 1 7.2 0 v1.2" fill="none" stroke="#6a6a6a" stroke-width="1.5"/><rect x="5.6" y="10" width="1.8" height="3" fill="#6a6a6a"/></svg>
<div style="left:1184px;top:389.5px;width:69px;height:69px;overflow:hidden;background:#888;"><svg style="left:-4px;top:-4px;filter:blur(0.7px);" width="77" height="77" viewBox="0 0 69 69" preserveAspectRatio="none"><rect width="69" height="69" fill="#cfc9ba"/><path d="M0 6 l10 -2 l12 -4 h20 l-8 6 l-12 2 l-8 6 l-14 8z M40 2 l8 2 l-4 6z M2 30 l10 -4 l12 -2 l10 2 l8 6 l12 2 l8 4 l-4 6 l-12 -2 l-10 -4 l-12 0 l-12 -2 l-10 2z M44 22 l10 -2 l10 4 l-8 4 l-12 -2z M56 42 l6 6 l7 12 v6 l-8 -12z" fill="#8cc4da"/></svg></div>
<div style="left:1183px;top:387.5px;width:357px;height:1.5px;background:#1b1b1b;"></div>
<span class="t" style="left:1259px;top:394.0px;font-size:17px;line-height:22px;color:#c2c2c2;transform:scaleX(0.9277);">Copy of Worl...</span>
<svg style="left:1372px;top:399.0px;" width="18" height="14" viewBox="0 0 18 14"><rect x="1" y="1" width="16" height="12" rx="1.5" fill="none" stroke="#2d7fe0" stroke-width="1.6"/><path d="M3 11 l4 -4.5 l3 3 l2 -1.5 l3.5 3z" fill="#2d7fe0"/><circle cx="5.2" cy="4.6" r="1.2" fill="#2d7fe0"/></svg>
<span class="t" style="left:1398px;top:393.0px;font-size:19px;line-height:25px;color:#777;font-family:'Liberation Serif',serif;transform:scaleX(1.0931);">A</span>
<div style="left:1420px;top:396.2px;width:90px;height:21px;box-sizing:border-box;border:1.5px solid #5a840e;border-radius:11px;"></div>
<svg style="left:1429px;top:401.6px;" width="12" height="10" viewBox="0 0 12 10"><path d="M1.5 5.5 L4.5 8.5 L10.5 1.5" fill="none" stroke="#79b400" stroke-width="1.7"/></svg>
<span class="t" style="left:1446px;top:398.6px;font-size:12.5px;line-height:16px;color:#76b000;font-weight:700;transform:scaleX(1.0284);">Finalized</span>
<svg style="left:1514px;top:397.0px;" width="19" height="17" viewBox="0 0 19 17"><rect x="1" y="7.5" width="11" height="8" rx="1" fill="none" stroke="#6a6a6a" stroke-width="1.5"/><path d="M9 7.5 v-2.5 a3.6 3.6 0 0 1 7.2 0 v1.2" fill="none" stroke="#6a6a6a" stroke-width="1.5"/><rect x="5.6" y="10" width="1.8" height="3" fill="#6a6a6a"/></svg>
<div style="left:1184px;top:461px;width:69px;height:69px;overflow:hidden;background:#888;"><svg style="left:-4px;top:-4px;filter:blur(0.7px);" width="77" height="77" viewBox="0 0 69 69" preserveAspectRatio="none"><rect width="69" height="69" fill="#cfc9ba"/><path d="M0 0 h12 l-2 6 l-10 8z M30 2 l12 0 l-4 6 l-8 -2z M20 10 l8 2 l-4 4z" fill="#8cc4da"/></svg></div>
<div style="left:1183px;top:459px;width:357px;height:1.5px;background:#1b1b1b;"></div>
<span class="t" style="left:1259px;top:465.5px;font-size:17px;line-height:22px;color:#c2c2c2;transform:scaleX(0.9661);">World Mapc...</span>
<svg style="left:1372px;top:470.5px;" width="18" height="14" viewBox="0 0 18 14"><rect x="1" y="1" width="16" height="12" rx="1.5" fill="none" stroke="#2d7fe0" stroke-width="1.6"/><path d="M3 11 l4 -4.5 l3 3 l2 -1.5 l3.5 3z" fill="#2d7fe0"/><circle cx="5.2" cy="4.6" r="1.2" fill="#2d7fe0"/></svg>
<span class="t" style="left:1398px;top:464.5px;font-size:19px;line-height:25px;color:#777;font-family:'Liberation Serif',serif;transform:scaleX(1.0931);">A</span>
<div style="left:1420px;top:467.7px;width:90px;height:21px;box-sizing:border-box;border:1.5px solid #5a840e;border-radius:11px;"></div>
<svg style="left:1429px;top:473.1px;" width="12" height="10" viewBox="0 0 12 10"><path d="M1.5 5.5 L4.5 8.5 L10.5 1.5" fill="none" stroke="#79b400" stroke-width="1.7"/></svg>
<span class="t" style="left:1446px;top:470.1px;font-size:12.5px;line-height:16px;color:#76b000;font-weight:700;transform:scaleX(1.0284);">Finalized</span>
<svg style="left:1514px;top:468.5px;" width="19" height="17" viewBox="0 0 19 17"><rect x="1" y="7.5" width="11" height="8" rx="1" fill="none" stroke="#6a6a6a" stroke-width="1.5"/><path d="M9 7.5 v-2.5 a3.6 3.6 0 0 1 7.2 0 v1.2" fill="none" stroke="#6a6a6a" stroke-width="1.5"/><rect x="5.6" y="10" width="1.8" height="3" fill="#6a6a6a"/></svg>
<div style="left:1183px;top:100px;width:357px;height:2.5px;background:#2a72c8;"></div>
<svg style="left:1261px;top:75px;" width="18" height="17" viewBox="0 0 18 17"><path d="M0 3.5 h17 M0 8.5 h17 M0 13.5 h17" stroke="#c8c8c8" stroke-width="1.5"/><g fill="#c8c8c8"><rect x="10" y="1.2" width="2.4" height="4.6"/><rect x="4" y="6.2" width="2.4" height="4.6"/><rect x="2" y="11.8" width="5" height="3.4"/></g></svg>
<svg style="left:1287px;top:74px;" width="16" height="18" viewBox="0 0 16 18"><rect x="1" y="4.5" width="9" height="12" rx="1" fill="none" stroke="#c8c8c8" stroke-width="1.5"/><path d="M5 4.5 v-3 h6 l3.5 3.5 v8.5 h-4.5" fill="none" stroke="#c8c8c8" stroke-width="1.5"/><path d="M10.5 1.5 v4 h4" fill="none" stroke="#c8c8c8" stroke-width="1.2"/></svg>
<svg style="left:1312px;top:74px;" width="15" height="18" viewBox="0 0 15 18"><path d="M0.5 4 h14 M5 3.5 v-2 h5 v2" fill="none" stroke="#c8c8c8" stroke-width="1.5"/><path d="M2.2 4.5 l1 12 h8.6 l1 -12" fill="none" stroke="#c8c8c8" stroke-width="1.6"/></svg>
<svg style="left:1336px;top:76px;" width="17" height="14" viewBox="0 0 17 14"><path d="M1.5 7.5 L6 12 L15.5 1.5" fill="none" stroke="#c8c8c8" stroke-width="1.8"/></svg>
</div></div>
<div style="left:1183px;top:475px;width:357px;height:82px;background:#202020;"></div>
<svg style="left:1203px;top:502px;" width="16" height="17" viewBox="0 0 16 17"><path d="M3 1 v13 M0.5 11 l2.5 3.5 l2.5 -3.5" fill="none" stroke="#c0c0c0" stroke-width="1.5"/><text x="8.5" y="7.5" font-family="Liberation Sans,sans-serif" font-weight="700" font-size="7.5" fill="#c0c0c0">A</text><text x="8.5" y="15.5" font-family="Liberation Sans,sans-serif" font-weight="700" font-size="7.5" fill="#c0c0c0">Z</text></svg>
<div style="left:1474px;top:494px;width:61px;height:32px;background:#1a1a1a;border-radius:2px;"></div>
<span class="t" style="left:1490px;top:501.0px;font-size:13.5px;line-height:18px;color:#d0d0d0;">Back</span>
<div style="left:1183px;top:538px;width:357px;height:5px;background:#1d1d1d;"></div>
<div style="left:1183px;top:543px;width:348px;height:10px;background:#2c2c2c;"></div>
<div style="left:1183px;top:553px;width:357px;height:4px;background:#1a1a1a;"></div>
<div style="left:1548px;top:0px;width:252px;height:3px;background:#161616;"></div>
<div style="left:1548px;top:38px;width:252px;height:3px;background:#161616;"></div>
<div style="left:1548px;top:75.5px;width:252px;height:3px;background:#161616;"></div>
<div style="left:1548px;top:113.5px;width:252px;height:3px;background:#161616;"></div>
<div style="left:1548px;top:151px;width:252px;height:3px;background:#161616;"></div>
<div style="left:1548px;top:189px;width:252px;height:3px;background:#161616;"></div>
<span class="t" style="left:1563px;top:11.5px;font-size:14.5px;line-height:19px;color:#9e9e9e;transform:scaleX(0.9707);">Audio</span>
<span class="t" style="left:1563px;top:49.5px;font-size:14.5px;line-height:19px;color:#9e9e9e;transform:scaleX(0.9307);">Preview</span>
<span class="t" style="left:1563px;top:87.0px;font-size:14.5px;line-height:19px;color:#9e9e9e;transform:scaleX(0.9104);">Effects &amp; Presets</span>
<span class="t" style="left:1563px;top:124.5px;font-size:14.5px;line-height:19px;color:#9e9e9e;transform:scaleX(0.9614);">Align</span>
<span class="t" style="left:1563px;top:162.0px;font-size:14.5px;line-height:19px;color:#9e9e9e;transform:scaleX(0.9009);">Paragraph</span>
<span class="t" style="left:1563px;top:199.5px;font-size:14.5px;line-height:19px;color:#aeaeae;transform:scaleX(0.8953);">Character</span>
<svg style="left:1776px;top:203px;" width="12" height="12" viewBox="0 0 12 12"><path d="M1 2 h10 M1 5.8 h10 M1 9.6 h10" stroke="#a0a0a0" stroke-width="1.5"/></svg>
<div style="left:1554px;top:237.5px;width:150px;height:21px;background:#1a1a1a;border-radius:3px;"></div>
<div style="left:1556px;top:239.0px;width:125px;height:18px;background:#151515;"></div>
<span class="t" style="left:1563px;top:238.5px;font-size:14.5px;line-height:19px;color:#b4b4b4;transform:scaleX(0.9252);">TT Commons</span>
<svg style="left:1688px;top:244.5px;" width="10" height="7" viewBox="0 0 10 7"><path d="M1 1.5 L5 4.8 L9 1.5" fill="none" stroke="#9a9a9a" stroke-width="1.3"/></svg>
<div style="left:1554px;top:267px;width:150px;height:21px;background:#1a1a1a;border-radius:3px;"></div>
<div style="left:1556px;top:268.5px;width:125px;height:18px;background:#151515;"></div>
<span class="t" style="left:1563px;top:268.0px;font-size:14.5px;line-height:19px;color:#b4b4b4;transform:scaleX(0.9545);">DemiBold</span>
<svg style="left:1688px;top:274.0px;" width="10" height="7" viewBox="0 0 10 7"><path d="M1 1.5 L5 4.8 L9 1.5" fill="none" stroke="#9a9a9a" stroke-width="1.3"/></svg>
<svg style="left:1711px;top:238px;" width="26" height="24" viewBox="0 0 26 24"><path d="M3 21 l1.5 -4 l9 -9 l3 3 l-9 9z" fill="none" stroke="#a8a8a8" stroke-width="1.4"/><path d="M13 6 l2.5 -2.5 a2.6 2.6 0 0 1 4 4 l-2.5 2.5 l1 1 l-1.6 1.6 l-6 -6 l1.6 -1.6z" fill="#a8a8a8"/></svg>
<div style="left:1758px;top:253px;width:35px;height:35px;background:#d6d6d6;"></div>
<div style="left:1766px;top:261px;width:19px;height:19px;background:#1c1c1c;"></div>
<svg style="left:1758px;top:253px;" width="35" height="35" viewBox="0 0 35 35"><path d="M0 35 L35 0" stroke="#d01414" stroke-width="1.6"/></svg>
<div style="left:1740px;top:235.5px;width:37px;height:36px;background:#d9d9d9;box-shadow:0 0 0 1.5px #0e0e0e;"></div>
<svg style="left:1779px;top:239px;" width="16" height="14" viewBox="0 0 16 14"><path d="M2 5.5 h6 a5 5 0 0 1 5 5 v2" fill="none" stroke="#a8a8a8" stroke-width="1.6"/><path d="M5.5 1.5 L1.5 5.5 L5.5 9.5" fill="none" stroke="#a8a8a8" stroke-width="1.6"/></svg>
<div style="left:1710px;top:267.5px;width:26px;height:21px;background:#cfcfcf;"></div>
<div style="left:1712px;top:269px;width:22px;height:8.5px;background:#080808;"></div>
<div style="left:1741.5px;top:274px;width:15px;height:14.5px;background:#cdcdcd;"></div>
<svg style="left:1741.5px;top:274px;" width="15" height="14.5" viewBox="0 0 15 14.5"><path d="M1 13.5 L14 1" stroke="#d01414" stroke-width="1.2"/></svg>
<div style="left:1555px;top:296.5px;width:238px;height:1.5px;background:#2a2a2a;"></div>
<div style="left:1555px;top:359px;width:238px;height:1.5px;background:#2a2a2a;"></div>
<div style="left:1555px;top:396.5px;width:238px;height:1.5px;background:#2a2a2a;"></div>
<div style="left:1555px;top:460px;width:238px;height:1.5px;background:#2a2a2a;"></div>
<span class="t" style="left:1553px;top:307.5px;font-family:'Liberation Serif',serif;font-size:12px;line-height:12px;color:#b4b4b4;font-weight:700;">T</span>
<span class="t" style="left:1561px;top:297px;font-family:'Liberation Serif',serif;font-size:22px;line-height:22px;color:#b4b4b4;font-weight:700;">T</span>
<span class="t" style="left:1584px;top:301.5px;font-size:14.5px;line-height:19px;color:#2c78d0;transform:scaleX(0.9950);">112</span>
<span class="t" style="left:1612px;top:301.5px;font-size:14.5px;line-height:19px;color:#8a8a8a;transform:scaleX(0.9795);">px</span>
<svg style="left:1639.5px;top:308.0px;" width="8" height="7" viewBox="0 0 8 7"><path d="M0 0 L8 0 L4.0 7Z" fill="#a4a4a4"/></svg>
<svg style="left:1682px;top:301px;" width="22" height="24" viewBox="0 0 22 24"><path d="M4 12.5 v8 M1.8 14.5 l2.2 -2.4 l2.2 2.4 M1.8 18.5 l2.2 2.4 l2.2 -2.4" fill="none" stroke="#b0b0b0" stroke-width="1.2"/><text x="8.5" y="11" font-family="Liberation Serif,serif" font-size="12" fill="#b0b0b0">A</text><text x="8.5" y="22.5" font-family="Liberation Serif,serif" font-size="12" fill="#b0b0b0">A</text><path d="M7.5 11.8 h12 M7.5 23.2 h12" stroke="#b0b0b0" stroke-width="1"/></svg>
<span class="t" style="left:1722px;top:301.5px;font-size:14.5px;line-height:19px;color:#2c78d0;transform:scaleX(0.9507);">123</span>
<span class="t" style="left:1750px;top:301.5px;font-size:14.5px;line-height:19px;color:#8a8a8a;transform:scaleX(0.9795);">px</span>
<svg style="left:1778.0px;top:308.0px;" width="8" height="7" viewBox="0 0 8 7"><path d="M0 0 L8 0 L4.0 7Z" fill="#a4a4a4"/></svg>
<svg style="left:1552px;top:326px;" width="26" height="24" viewBox="0 0 26 24"><text x="0" y="16" font-family="Liberation Sans,sans-serif" font-size="15" fill="#b0b0b0" textLength="22" lengthAdjust="spacingAndGlyphs">V/A</text><path d="M10 20 h10 M13.5 17 l-3.5 3 l3.5 3" fill="none" stroke="#b0b0b0" stroke-width="1.2"/></svg>
<span class="t" style="left:1586px;top:327.5px;font-size:14.5px;line-height:19px;color:#4e4e4e;transform:scaleX(0.9204);">Metrics</span>
<svg style="left:1639.5px;top:334.0px;" width="8" height="7" viewBox="0 0 8 7"><path d="M0 0 L8 0 L4.0 7Z" fill="#a4a4a4"/></svg>
<div style="left:1686px;top:329.5px;width:22px;height:13px;background:#b4b4b4;"></div>
<svg style="left:1684px;top:327px;" width="26" height="26" viewBox="0 0 26 26"><text x="3.2" y="14.2" font-family="Liberation Sans,sans-serif" font-size="12.5" font-weight="700" fill="#1e1e1e" textLength="19" lengthAdjust="spacingAndGlyphs">VA</text><path d="M2.5 20.5 h20.5 M5.5 18 l-3 2.5 l3 2.5 M20 18 l3 2.5 l-3 2.5" fill="none" stroke="#b0b0b0" stroke-width="1.2"/></svg>
<span class="t" style="left:1722px;top:326.5px;font-size:14.5px;line-height:19px;color:#2c78d0;transform:scaleX(0.8680);">0</span>
<svg style="left:1778.0px;top:334.0px;" width="8" height="7" viewBox="0 0 8 7"><path d="M0 0 L8 0 L4.0 7Z" fill="#a4a4a4"/></svg>
<svg style="left:1556px;top:367px;" width="19" height="18" viewBox="0 0 19 18"><path d="M0 2 h18 M0 7.5 h18 M0 14 h18" stroke="#c0c0c0"/><path d="M0 2 h18" stroke="#c0c0c0" stroke-width="1.2"/><path d="M0 7.5 h18" stroke="#c0c0c0" stroke-width="2.2"/><path d="M0 14 h18" stroke="#c0c0c0" stroke-width="3.4"/></svg>
<span class="t" style="left:1585px;top:366.0px;font-size:14.5px;line-height:19px;color:#2c78d0;">-</span>
<span class="t" style="left:1596px;top:366.5px;font-size:14.5px;line-height:19px;color:#8a8a8a;transform:scaleX(0.9795);">px</span>
<svg style="left:1639.5px;top:371.5px;" width="8" height="7" viewBox="0 0 8 7"><path d="M0 0 L8 0 L4.0 7Z" fill="#a4a4a4"/></svg>
<div style="left:1654.5px;top:365.5px;width:140px;height:21.5px;background:#171717;border-radius:3px;border:1px solid #2a2a2a;box-sizing:border-box;"></div>
<svg style="left:1778px;top:373.0px;" width="10" height="7" viewBox="0 0 10 7"><path d="M1 1.5 L5 4.8 L9 1.5" fill="none" stroke="#9a9a9a" stroke-width="1.3"/></svg>
<svg style="left:1554px;top:400px;" width="12" height="26" viewBox="0 0 12 26"><path d="M5 3 v18 M2.4 5.6 l2.6 -2.8 l2.6 2.8 M2.4 18.4 l2.6 2.8 l2.6 -2.8" fill="none" stroke="#b0b0b0" stroke-width="1.3"/></svg>
<span class="t" style="left:1563px;top:399px;font-family:'Liberation Serif',serif;font-size:24px;line-height:24px;color:#b4b4b4;font-weight:700;">T</span>
<span class="t" style="left:1585px;top:402.0px;font-size:14.5px;line-height:19px;color:#2c78d0;transform:scaleX(0.9094);">100</span>
<span class="t" style="left:1612px;top:402.5px;font-size:14.5px;line-height:19px;color:#8a8a8a;transform:scaleX(0.9308);">%</span>
<svg style="left:1639.5px;top:409.0px;" width="8" height="7" viewBox="0 0 8 7"><path d="M0 0 L8 0 L4.0 7Z" fill="#a4a4a4"/></svg>
<span class="t" style="left:1687px;top:401px;font-family:'Liberation Serif',serif;font-size:23px;line-height:23px;color:#b4b4b4;font-weight:700;">T</span>
<svg style="left:1684px;top:420px;" width="24" height="10" viewBox="0 0 24 10"><path d="M2 5 h19 M5 2.5 l-3 2.5 l3 2.5 M18 2.5 l3 2.5 l-3 2.5" fill="none" stroke="#b0b0b0" stroke-width="1.2"/></svg>
<span class="t" style="left:1722px;top:403.0px;font-size:14.5px;line-height:19px;color:#2c78d0;transform:scaleX(0.9507);">100</span>
<span class="t" style="left:1750px;top:403.5px;font-size:14.5px;line-height:19px;color:#8a8a8a;transform:scaleX(0.9308);">%</span>
<svg style="left:1778.0px;top:410.0px;" width="8" height="7" viewBox="0 0 8 7"><path d="M0 0 L8 0 L4.0 7Z" fill="#a4a4a4"/></svg>
<svg style="left:1553px;top:428px;" width="24" height="26" viewBox="0 0 24 26"><text x="0" y="17" font-family="Liberation Sans,sans-serif" font-size="15" fill="#b0b0b0">A</text><text x="11" y="13" font-family="Liberation Sans,sans-serif" font-size="9" fill="#b0b0b0">a</text><path d="M0 19.5 h19" stroke="#b0b0b0"/><path d="M15.5 15 v10 M13.5 17 l2 -2 l2 2" fill="none" stroke="#b0b0b0" stroke-width="1.1"/></svg>
<span class="t" style="left:1584px;top:429.0px;font-size:14.5px;line-height:19px;color:#2c78d0;transform:scaleX(0.8680);">0</span>
<span class="t" style="left:1596px;top:430.0px;font-size:14.5px;line-height:19px;color:#8a8a8a;transform:scaleX(0.9795);">px</span>
<svg style="left:1639.5px;top:436.0px;" width="8" height="7" viewBox="0 0 8 7"><path d="M0 0 L8 0 L4.0 7Z" fill="#a4a4a4"/></svg>
<svg style="left:1684px;top:430px;" width="26" height="24" viewBox="0 0 26 24"><path d="M4.5 3 v13 M20.5 3 v13" stroke="#8a8a8a" stroke-width="1"/><text x="6" y="14.5" font-family="Liberation Sans,Noto Sans CJK JP,sans-serif" font-size="12.5" fill="#b0b0b0">あ</text><path d="M2 20.5 h8 M7.5 18.5 l2.5 2 l-2.5 2 M23 20.5 h-8 M17.500 18.5 l-2.5 2 l2.5 2" fill="none" stroke="#b0b0b0" stroke-width="1.1"/></svg>
<span class="t" style="left:1722px;top:428.0px;font-size:14.5px;line-height:19px;color:#2c78d0;transform:scaleX(0.8680);">0</span>
<span class="t" style="left:1734px;top:429.0px;font-size:14.5px;line-height:19px;color:#8a8a8a;transform:scaleX(0.9308);">%</span>
<svg style="left:1778.0px;top:435.0px;" width="8" height="7" viewBox="0 0 8 7"><path d="M0 0 L8 0 L4.0 7Z" fill="#a4a4a4"/></svg>
<span class="t" style="left:1586px;top:468px;font-family:'Liberation Serif',serif;font-size:22px;line-height:22px;color:#c4c4c4;font-weight:700;text-shadow:0.6px 0 0 #c4c4c4;">T</span>
<span class="t" style="left:1617px;top:468px;font-family:'Liberation Serif',serif;font-size:22px;line-height:22px;color:#b4b4b4;font-style:italic;">T</span>
<span class="t" style="left:1650px;top:468px;font-family:'Liberation Serif',serif;font-size:21px;line-height:21px;color:#b4b4b4;letter-spacing:-0.5px;">TT</span>
<span class="t" style="left:1681px;top:468px;font-family:'Liberation Serif',serif;font-size:21px;line-height:21px;color:#b4b4b4;">T</span>
<span class="t" style="left:1693px;top:473px;font-family:'Liberation Serif',serif;font-size:15px;line-height:15px;color:#b4b4b4;">T</span>
<span class="t" style="left:1720px;top:468px;font-family:'Liberation Serif',serif;font-size:21px;line-height:21px;color:#b4b4b4;">T</span>
<span class="t" style="left:1733px;top:467px;font-family:'Liberation Serif',serif;font-size:8px;line-height:8px;color:#b4b4b4;font-weight:700;">1</span>
<span class="t" style="left:1750px;top:468px;font-family:'Liberation Serif',serif;font-size:21px;line-height:21px;color:#b4b4b4;">T</span>
<span class="t" style="left:1763px;top:480px;font-family:'Liberation Serif',serif;font-size:8px;line-height:8px;color:#b4b4b4;font-weight:700;">1</span>
<div style="left:1561px;top:504px;width:17px;height:17px;box-sizing:border-box;border:1.5px solid #8e8e8e;border-radius:2px;"></div>
<span class="t" style="left:1583px;top:503.5px;font-size:14.5px;line-height:19px;color:#a0a0a0;transform:scaleX(0.9221);">Ligatures</span>
<div style="left:1682px;top:504px;width:17px;height:17px;box-sizing:border-box;border:1.5px solid #8e8e8e;border-radius:2px;"></div>
<span class="t" style="left:1703px;top:503.5px;font-size:14.5px;line-height:19px;color:#a0a0a0;transform:scaleX(0.9955);">Hindi Digits</span>
<div style="left:2px;top:570.5px;width:9px;height:19px;overflow:hidden;"><span class="t" style="left:0;top:0;font-size:14.5px;line-height:19px;color:#777;margin-left:3px;">2</span></div>
<svg style="left:55px;top:575px;" width="10" height="10" viewBox="0 0 10 10"><path d="M1.5 1.5 L8.5 8.5 M8.5 1.5 L1.5 8.5" stroke="#8a8a8a" stroke-width="1.2"/></svg>
<div style="left:58px;top:591.5px;width:493px;height:2px;background:#a8a8a8;"></div>
<span class="t" style="left:403px;top:570.5px;font-size:14.5px;line-height:19px;color:#c6c6c6;transform:scaleX(0.9452);">ng World Mapcomp 1</span>
<svg style="left:539px;top:575px;" width="12" height="10" viewBox="0 0 12 10"><path d="M0.5 1.5 h10 M0.5 5 h10 M0.5 8.5 h10" stroke="#b8b8b8" stroke-width="1.3"/></svg>
<div style="left:594px;top:573px;width:12px;height:12px;background:#a38d69;"></div>
<span class="t" style="left:621px;top:570.5px;font-size:14.5px;line-height:19px;color:#8e8e8e;transform:scaleX(0.9257);">Comp 5</span>
<div style="left:736px;top:573px;width:12px;height:12px;background:#a38d69;"></div>
<span class="t" style="left:763px;top:570.5px;font-size:14.5px;line-height:19px;color:#8e8e8e;transform:scaleX(0.9207);">Pre-comp 6</span>
<div style="left:902px;top:573px;width:12px;height:12px;background:#a38d69;"></div>
<span class="t" style="left:928px;top:570.5px;font-size:14.5px;line-height:19px;color:#8e8e8e;transform:scaleX(0.9451);">Snow Block Expedition Linked Comp 26</span>
<div style="left:1237px;top:573px;width:12px;height:12px;background:#a38d69;"></div>
<span class="t" style="left:1263px;top:570.5px;font-size:14.5px;line-height:19px;color:#8e8e8e;transform:scaleX(0.9207);">Pre-comp 7</span>
<div style="left:1403px;top:573px;width:12px;height:12px;background:#a38d69;"></div>
<span class="t" style="left:1429px;top:570.5px;font-size:14.5px;line-height:19px;color:#8e8e8e;transform:scaleX(0.9565);">Copy of containing World Mapcomp 1</span>
<div style="left:1726px;top:573px;width:12px;height:12px;background:#a38d69;"></div>
<span class="t" style="left:1751px;top:570.5px;font-size:14.5px;line-height:19px;color:#8e8e8e;transform:scaleX(0.8632);">Co</span>
<div style="left:1771px;top:566px;width:29px;height:28px;background:#212121;"></div>
<span class="t" style="left:22px;top:596.5px;font-size:21px;line-height:27px;color:#2c78d0;font-weight:700;transform:scaleX(0.9733);">0:00:17:55</span>
<span class="t" style="left:17px;top:622.5px;font-size:12.5px;line-height:16px;color:#245a9c;transform:scaleX(0.9287);">01075 (60.00 fps)</span>
<div style="left:140px;top:606px;width:532px;height:22px;background:#161616;border-radius:2px;"></div>
<svg style="left:693px;top:608px;" width="22" height="20" viewBox="0 0 22 20"><path d="M1 4.5 h6 M7 4.5 h6 v5 h5 M13 9.5 v5 h5" fill="none" stroke="#909090" stroke-width="1.2"/><g fill="#909090"><rect x="0" y="3" width="3" height="3"/><rect x="6" y="2.5" width="4" height="4"/><rect x="16" y="8" width="3" height="3"/><rect x="16" y="13" width="3" height="3"/><path d="M15.500 17 h5 l-2.500 2.800z"/></g></svg>
<svg style="left:733px;top:606px;" width="24" height="24" viewBox="0 0 24 24"><path d="M10 10 l6.500 -3 l6 3 v7 l-6 3.500 l-6.500 -3.500z M10 10 l6.200 3.500 l6.300 -3.500 M16.200 13.500 v7" fill="none" stroke="#909090" stroke-width="1.4"/><path d="M6 0 v9 M1.500 4.500 h9 M2.800 1.300 l6.400 6.400 M9.200 1.300 l-6.400 6.400" stroke="#909090" stroke-width="1.100"/></svg>
<svg style="left:775px;top:609px;" width="24" height="18" viewBox="0 0 24 18"><path d="M1 17 v-7 h21 v7z" fill="#7c7c7c"/><path d="M1 12.500 h21 M1 14.800 h21" stroke="#3a3a3a" stroke-width="0.900"/><path d="M5 10 a7 6.500 0 0 1 14 0z" fill="#909090"/><rect x="10.800" y="4" width="2.400" height="13" fill="#909090"/><path d="M8 10 a4 4.500 0 0 1 8 0" fill="none" stroke="#222" stroke-width="1.100"/></svg>
<svg style="left:808px;top:608px;" width="22" height="20" viewBox="0 0 22 20"><rect x="6.500" y="1" width="13" height="13" fill="#b0b0b0"/><rect x="10" y="3" width="3" height="6" fill="#333"/><path d="M3.500 4 v13.500 h13.500" fill="none" stroke="#909090" stroke-width="1.600"/><path d="M0.800 7 v13 h13" fill="none" stroke="#909090" stroke-width="1.400"/></svg>
<svg style="left:838px;top:608px;" width="24" height="20" viewBox="0 0 24 20"><g fill="#9c9c9c" stroke="#222" stroke-width="1"><ellipse cx="9" cy="12.500" rx="5.500" ry="6.500" transform="rotate(40 9 12.500)"/><ellipse cx="11.500" cy="10.500" rx="5.500" ry="6.500" transform="rotate(40 11.500 10.500)"/><ellipse cx="14" cy="8.500" rx="5.500" ry="6.500" transform="rotate(40 14 8.500)"/></g></svg>
<svg style="left:881px;top:607px;" width="22" height="22" viewBox="0 0 22 22"><rect x="1.500" y="3.500" width="18" height="15" rx="1.500" fill="none" stroke="#909090" stroke-width="1.500"/><path d="M3.500 6 c8 0 6 10 14.500 10.500" fill="none" stroke="#909090" stroke-width="1.400"/><path d="M5 1 v3 M10.500 1 v3 M16 1 v3 M5 18 v3 M10.500 18 v3 M16 18 v3" stroke="#909090" stroke-width="1.300"/></svg>
<div style="left:5px;top:641px;width:916px;height:1.5px;background:#181818;"></div>
<div style="left:5px;top:642.5px;width:916px;height:21px;background:#272727;"></div>
<div style="left:5px;top:663px;width:916px;height:1.5px;background:#181818;"></div>
<svg style="left:10px;top:648.5px;" width="15" height="10" viewBox="0 0 15 10"><path d="M0.5 5 C3 0.8 12 0.8 14.5 5 C12 9.2 3 9.2 0.5 5Z" fill="none" stroke="#c8c8c8" stroke-width="1.3"/><circle cx="7.5" cy="5" r="2.3" fill="#c8c8c8"/></svg>
<svg style="left:27px;top:646px;" width="16" height="15" viewBox="0 0 16 15"><path d="M1 5 h3 l4 -3.500 v12 l-4 -3.500 h-3z" fill="#c8c8c8"/><path d="M10 4 a4.500 4.500 0 0 1 0 7.500 M12 1.500 a7.500 7.500 0 0 1 0 12.500" fill="none" stroke="#c8c8c8" stroke-width="1.300"/></svg>
<svg style="left:49px;top:649px;" width="9" height="9" viewBox="0 0 9 9"><circle cx="4.500" cy="4.500" r="4" fill="#c8c8c8"/></svg>
<svg style="left:64px;top:646px;" width="11" height="14" viewBox="0 0 11 14"><rect x="0.500" y="6" width="10" height="7.500" fill="#c8c8c8"/><path d="M2.500 6 v-2 a3 3 0 0 1 6 0 v2" fill="none" stroke="#c8c8c8" stroke-width="1.500"/></svg>
<div style="left:460.5px;top:645px;width:1px;height:17px;background:#1a1a1a;"></div>
<div style="left:740px;top:645px;width:1px;height:17px;background:#1a1a1a;"></div>
<div style="left:902px;top:645px;width:1px;height:17px;background:#1a1a1a;"></div>
<span class="t" style="left:467.5px;top:647.0px;font-size:11px;line-height:14px;color:#767676;transform:scaleX(0.9631);">Mode</span>
<span class="t" style="left:595.5px;top:647.0px;font-size:11px;line-height:14px;color:#767676;">T</span>
<span class="t" style="left:617px;top:647.0px;font-size:11px;line-height:14px;color:#767676;transform:scaleX(1.0056);">TrkMat</span>
<span class="t" style="left:747px;top:647.0px;font-size:11px;line-height:14px;color:#767676;transform:scaleX(1.0146);">Parent &amp; Link</span>
<div style="left:5px;top:664.5px;width:916px;height:19.75px;background:#272727;"></div>
<div style="left:45.5px;top:666.0px;width:15.5px;height:16.75px;background:#1f1f1f;"></div>
<div style="left:64.5px;top:666.0px;width:15.5px;height:16.75px;background:#1f1f1f;"></div>
<svg style="left:10px;top:669.5px;" width="15" height="10" viewBox="0 0 15 10"><path d="M0.5 5 C3 0.8 12 0.8 14.5 5 C12 9.2 3 9.2 0.5 5Z" fill="none" stroke="#c8c8c8" stroke-width="1.3"/><circle cx="7.5" cy="5" r="2.3" fill="#c8c8c8"/></svg>
<div style="left:465.5px;top:667.0px;width:118.5px;height:16px;background:#191919;"></div>
<span class="t" style="left:473.5px;top:665.5px;font-size:14.5px;line-height:19px;color:#adadad;transform:scaleX(0.9523);">Normal</span>
<svg style="left:569.0px;top:671.5px;" width="10" height="7" viewBox="0 0 10 7"><path d="M1 1.5 L5 4.8 L9 1.5" fill="none" stroke="#9a9a9a" stroke-width="1.3"/></svg>
<div style="left:591px;top:667.0px;width:16px;height:16px;background:#212121;"></div>
<svg style="left:745.5px;top:666.5px;" width="16" height="16" viewBox="0 0 16 16"><path d="M11.38 1.64 L12.26 2.32 L13.01 3.11 L13.63 3.99 L14.10 4.94 L14.41 5.94 L14.57 6.97 L14.56 7.99 L14.40 8.99 L14.09 9.93 L13.64 10.81 L13.07 11.59 L12.40 12.27 L11.64 12.83 L10.81 13.26 L9.95 13.55 L9.05 13.70 L8.16 13.71 L7.29 13.59 L6.46 13.33 L5.70 12.96 L5.01 12.48 L4.41 11.90 L3.92 11.25 L3.54 10.55 L3.27 9.80 L3.13 9.04 L3.11 8.27 L3.21 7.52 L3.42 6.81 L3.73 6.15 L4.13 5.56 L4.61 5.05 L5.16 4.63 L5.75 4.30 L6.38 4.07 L7.02 3.95 L7.66 3.92 L8.29 4.00 L8.88 4.17 L9.43 4.43 L9.92 4.76 L10.35 5.15 L10.70 5.60 L10.97 6.09 L11.16 6.60 L11.26 7.12 L11.28 7.64 L11.21 8.15 L11.08 8.62 L10.87 9.06 L10.60 9.45 L10.29 9.79 L9.93 10.06 L9.55 10.27 L9.15 10.41 L8.74 10.48 L8.34 10.49 L7.96 10.43 L7.60 10.32 L7.27 10.16 L6.98 9.95 L6.74 9.71 L6.55 9.44 L6.41 9.15 L6.32 8.86 L6.28 8.56 L6.29 8.28 L6.35 8.01 L6.44 7.77 L6.57 7.56" fill="none" stroke="#8c8c8c" stroke-width="1.7" stroke-linecap="round" stroke-linejoin="round"/></svg>
<div style="left:769.5px;top:667.0px;width:126.5px;height:16px;background:#191919;"></div>
<span class="t" style="left:777.5px;top:665.5px;font-size:14.5px;line-height:19px;color:#adadad;transform:scaleX(0.9520);">None</span>
<svg style="left:881.0px;top:671.5px;" width="10" height="7" viewBox="0 0 10 7"><path d="M1 1.5 L5 4.8 L9 1.5" fill="none" stroke="#9a9a9a" stroke-width="1.3"/></svg>
<div style="left:5px;top:685.5px;width:916px;height:19.75px;background:#272727;"></div>
<div style="left:45.5px;top:687.0px;width:15.5px;height:16.75px;background:#1f1f1f;"></div>
<div style="left:64.5px;top:687.0px;width:15.5px;height:16.75px;background:#1f1f1f;"></div>
<svg style="left:10px;top:690.45px;" width="15" height="10" viewBox="0 0 15 10"><path d="M0.5 5 C3 0.8 12 0.8 14.5 5 C12 9.2 3 9.2 0.5 5Z" fill="none" stroke="#c8c8c8" stroke-width="1.3"/><circle cx="7.5" cy="5" r="2.3" fill="#c8c8c8"/></svg>
<div style="left:465.5px;top:687.95px;width:118.5px;height:16px;background:#191919;"></div>
<span class="t" style="left:473.5px;top:686.5px;font-size:14.5px;line-height:19px;color:#adadad;transform:scaleX(0.9523);">Normal</span>
<svg style="left:569.0px;top:692.45px;" width="10" height="7" viewBox="0 0 10 7"><path d="M1 1.5 L5 4.8 L9 1.5" fill="none" stroke="#9a9a9a" stroke-width="1.3"/></svg>
<div style="left:591px;top:687.95px;width:16px;height:16px;background:#212121;"></div>
<div style="left:614.5px;top:687.95px;width:119.5px;height:16px;background:#191919;"></div>
<span class="t" style="left:622.5px;top:686.5px;font-size:14.5px;line-height:19px;color:#adadad;transform:scaleX(0.9520);">None</span>
<svg style="left:719.0px;top:692.45px;" width="10" height="7" viewBox="0 0 10 7"><path d="M1 1.5 L5 4.8 L9 1.5" fill="none" stroke="#9a9a9a" stroke-width="1.3"/></svg>
<svg style="left:745.5px;top:687.45px;" width="16" height="16" viewBox="0 0 16 16"><path d="M11.38 1.64 L12.26 2.32 L13.01 3.11 L13.63 3.99 L14.10 4.94 L14.41 5.94 L14.57 6.97 L14.56 7.99 L14.40 8.99 L14.09 9.93 L13.64 10.81 L13.07 11.59 L12.40 12.27 L11.64 12.83 L10.81 13.26 L9.95 13.55 L9.05 13.70 L8.16 13.71 L7.29 13.59 L6.46 13.33 L5.70 12.96 L5.01 12.48 L4.41 11.90 L3.92 11.25 L3.54 10.55 L3.27 9.80 L3.13 9.04 L3.11 8.27 L3.21 7.52 L3.42 6.81 L3.73 6.15 L4.13 5.56 L4.61 5.05 L5.16 4.63 L5.75 4.30 L6.38 4.07 L7.02 3.95 L7.66 3.92 L8.29 4.00 L8.88 4.17 L9.43 4.43 L9.92 4.76 L10.35 5.15 L10.70 5.60 L10.97 6.09 L11.16 6.60 L11.26 7.12 L11.28 7.64 L11.21 8.15 L11.08 8.62 L10.87 9.06 L10.60 9.45 L10.29 9.79 L9.93 10.06 L9.55 10.27 L9.15 10.41 L8.74 10.48 L8.34 10.49 L7.96 10.43 L7.60 10.32 L7.27 10.16 L6.98 9.95 L6.74 9.71 L6.55 9.44 L6.41 9.15 L6.32 8.86 L6.28 8.56 L6.29 8.28 L6.35 8.01 L6.44 7.77 L6.57 7.56" fill="none" stroke="#8c8c8c" stroke-width="1.7" stroke-linecap="round" stroke-linejoin="round"/></svg>
<div style="left:769.5px;top:687.95px;width:126.5px;height:16px;background:#191919;"></div>
<span class="t" style="left:777.5px;top:686.5px;font-size:14.5px;line-height:19px;color:#adadad;transform:scaleX(0.9520);">None</span>
<svg style="left:881.0px;top:692.45px;" width="10" height="7" viewBox="0 0 10 7"><path d="M1 1.5 L5 4.8 L9 1.5" fill="none" stroke="#9a9a9a" stroke-width="1.3"/></svg>
<div style="left:5px;top:706.4px;width:916px;height:19.75px;background:#222222;"></div>
<svg style="left:761.5px;top:708.4px;" width="16" height="16" viewBox="0 0 16 16"><path d="M11.38 1.64 L12.26 2.32 L13.01 3.11 L13.63 3.99 L14.10 4.94 L14.41 5.94 L14.57 6.97 L14.56 7.99 L14.40 8.99 L14.09 9.93 L13.64 10.81 L13.07 11.59 L12.40 12.27 L11.64 12.83 L10.81 13.26 L9.95 13.55 L9.05 13.70 L8.16 13.71 L7.29 13.59 L6.46 13.33 L5.70 12.96 L5.01 12.48 L4.41 11.90 L3.92 11.25 L3.54 10.55 L3.27 9.80 L3.13 9.04 L3.11 8.27 L3.21 7.52 L3.42 6.81 L3.73 6.15 L4.13 5.56 L4.61 5.05 L5.16 4.63 L5.75 4.30 L6.38 4.07 L7.02 3.95 L7.66 3.92 L8.29 4.00 L8.88 4.17 L9.43 4.43 L9.92 4.76 L10.35 5.15 L10.70 5.60 L10.97 6.09 L11.16 6.60 L11.26 7.12 L11.28 7.64 L11.21 8.15 L11.08 8.62 L10.87 9.06 L10.60 9.45 L10.29 9.79 L9.93 10.06 L9.55 10.27 L9.15 10.41 L8.74 10.48 L8.34 10.49 L7.96 10.43 L7.60 10.32 L7.27 10.16 L6.98 9.95 L6.74 9.71 L6.55 9.44 L6.41 9.15 L6.32 8.86 L6.28 8.56 L6.29 8.28 L6.35 8.01 L6.44 7.77 L6.57 7.56" fill="none" stroke="#8c8c8c" stroke-width="1.7" stroke-linecap="round" stroke-linejoin="round"/></svg>
<div style="left:5px;top:727.4px;width:916px;height:19.75px;background:#272727;"></div>
<div style="left:45.5px;top:728.9px;width:15.5px;height:16.75px;background:#1f1f1f;"></div>
<div style="left:64.5px;top:728.9px;width:15.5px;height:16.75px;background:#1f1f1f;"></div>
<svg style="left:10px;top:732.35px;" width="15" height="10" viewBox="0 0 15 10"><path d="M0.5 5 C3 0.8 12 0.8 14.5 5 C12 9.2 3 9.2 0.5 5Z" fill="none" stroke="#c8c8c8" stroke-width="1.3"/><circle cx="7.5" cy="5" r="2.3" fill="#c8c8c8"/></svg>
<div style="left:465.5px;top:729.85px;width:118.5px;height:16px;background:#191919;"></div>
<span class="t" style="left:473.5px;top:728.4px;font-size:14.5px;line-height:19px;color:#adadad;transform:scaleX(0.9523);">Normal</span>
<svg style="left:569.0px;top:734.35px;" width="10" height="7" viewBox="0 0 10 7"><path d="M1 1.5 L5 4.8 L9 1.5" fill="none" stroke="#9a9a9a" stroke-width="1.3"/></svg>
<div style="left:591px;top:729.85px;width:16px;height:16px;background:#212121;"></div>
<div style="left:614.5px;top:729.85px;width:119.5px;height:16px;background:#191919;"></div>
<span class="t" style="left:622.5px;top:728.4px;font-size:14.5px;line-height:19px;color:#adadad;transform:scaleX(0.9520);">None</span>
<svg style="left:719.0px;top:734.35px;" width="10" height="7" viewBox="0 0 10 7"><path d="M1 1.5 L5 4.8 L9 1.5" fill="none" stroke="#9a9a9a" stroke-width="1.3"/></svg>
<svg style="left:745.5px;top:729.35px;" width="16" height="16" viewBox="0 0 16 16"><path d="M11.38 1.64 L12.26 2.32 L13.01 3.11 L13.63 3.99 L14.10 4.94 L14.41 5.94 L14.57 6.97 L14.56 7.99 L14.40 8.99 L14.09 9.93 L13.64 10.81 L13.07 11.59 L12.40 12.27 L11.64 12.83 L10.81 13.26 L9.95 13.55 L9.05 13.70 L8.16 13.71 L7.29 13.59 L6.46 13.33 L5.70 12.96 L5.01 12.48 L4.41 11.90 L3.92 11.25 L3.54 10.55 L3.27 9.80 L3.13 9.04 L3.11 8.27 L3.21 7.52 L3.42 6.81 L3.73 6.15 L4.13 5.56 L4.61 5.05 L5.16 4.63 L5.75 4.30 L6.38 4.07 L7.02 3.95 L7.66 3.92 L8.29 4.00 L8.88 4.17 L9.43 4.43 L9.92 4.76 L10.35 5.15 L10.70 5.60 L10.97 6.09 L11.16 6.60 L11.26 7.12 L11.28 7.64 L11.21 8.15 L11.08 8.62 L10.87 9.06 L10.60 9.45 L10.29 9.79 L9.93 10.06 L9.55 10.27 L9.15 10.41 L8.74 10.48 L8.34 10.49 L7.96 10.43 L7.60 10.32 L7.27 10.16 L6.98 9.95 L6.74 9.71 L6.55 9.44 L6.41 9.15 L6.32 8.86 L6.28 8.56 L6.29 8.28 L6.35 8.01 L6.44 7.77 L6.57 7.56" fill="none" stroke="#8c8c8c" stroke-width="1.7" stroke-linecap="round" stroke-linejoin="round"/></svg>
<div style="left:769.5px;top:729.85px;width:126.5px;height:16px;background:#191919;"></div>
<span class="t" style="left:777.5px;top:728.4px;font-size:14.5px;line-height:19px;color:#adadad;transform:scaleX(0.9520);">None</span>
<svg style="left:881.0px;top:734.35px;" width="10" height="7" viewBox="0 0 10 7"><path d="M1 1.5 L5 4.8 L9 1.5" fill="none" stroke="#9a9a9a" stroke-width="1.3"/></svg>
<div style="left:5px;top:748.3px;width:916px;height:19.75px;background:#272727;"></div>
<div style="left:45.5px;top:749.8px;width:15.5px;height:16.75px;background:#1f1f1f;"></div>
<div style="left:64.5px;top:749.8px;width:15.5px;height:16.75px;background:#1f1f1f;"></div>
<svg style="left:10px;top:753.3px;" width="15" height="10" viewBox="0 0 15 10"><path d="M0.5 5 C3 0.8 12 0.8 14.5 5 C12 9.2 3 9.2 0.5 5Z" fill="none" stroke="#c8c8c8" stroke-width="1.3"/><circle cx="7.5" cy="5" r="2.3" fill="#c8c8c8"/></svg>
<div style="left:465.5px;top:750.8px;width:118.5px;height:16px;background:#191919;"></div>
<span class="t" style="left:473.5px;top:749.3px;font-size:14.5px;line-height:19px;color:#adadad;transform:scaleX(0.9523);">Normal</span>
<svg style="left:569.0px;top:755.3px;" width="10" height="7" viewBox="0 0 10 7"><path d="M1 1.5 L5 4.8 L9 1.5" fill="none" stroke="#9a9a9a" stroke-width="1.3"/></svg>
<div style="left:591px;top:750.8px;width:16px;height:16px;background:#212121;"></div>
<div style="left:614.5px;top:750.8px;width:119.5px;height:16px;background:#191919;"></div>
<span class="t" style="left:622.5px;top:749.3px;font-size:14.5px;line-height:19px;color:#adadad;transform:scaleX(0.9520);">None</span>
<svg style="left:719.0px;top:755.3px;" width="10" height="7" viewBox="0 0 10 7"><path d="M1 1.5 L5 4.8 L9 1.5" fill="none" stroke="#9a9a9a" stroke-width="1.3"/></svg>
<svg style="left:745.5px;top:750.3px;" width="16" height="16" viewBox="0 0 16 16"><path d="M11.38 1.64 L12.26 2.32 L13.01 3.11 L13.63 3.99 L14.10 4.94 L14.41 5.94 L14.57 6.97 L14.56 7.99 L14.40 8.99 L14.09 9.93 L13.64 10.81 L13.07 11.59 L12.40 12.27 L11.64 12.83 L10.81 13.26 L9.95 13.55 L9.05 13.70 L8.16 13.71 L7.29 13.59 L6.46 13.33 L5.70 12.96 L5.01 12.48 L4.41 11.90 L3.92 11.25 L3.54 10.55 L3.27 9.80 L3.13 9.04 L3.11 8.27 L3.21 7.52 L3.42 6.81 L3.73 6.15 L4.13 5.56 L4.61 5.05 L5.16 4.63 L5.75 4.30 L6.38 4.07 L7.02 3.95 L7.66 3.92 L8.29 4.00 L8.88 4.17 L9.43 4.43 L9.92 4.76 L10.35 5.15 L10.70 5.60 L10.97 6.09 L11.16 6.60 L11.26 7.12 L11.28 7.64 L11.21 8.15 L11.08 8.62 L10.87 9.06 L10.60 9.45 L10.29 9.79 L9.93 10.06 L9.55 10.27 L9.15 10.41 L8.74 10.48 L8.34 10.49 L7.96 10.43 L7.60 10.32 L7.27 10.16 L6.98 9.95 L6.74 9.71 L6.55 9.44 L6.41 9.15 L6.32 8.86 L6.28 8.56 L6.29 8.28 L6.35 8.01 L6.44 7.77 L6.57 7.56" fill="none" stroke="#8c8c8c" stroke-width="1.7" stroke-linecap="round" stroke-linejoin="round"/></svg>
<div style="left:769.5px;top:750.8px;width:126.5px;height:16px;background:#191919;"></div>
<span class="t" style="left:777.5px;top:749.3px;font-size:14.5px;line-height:19px;color:#adadad;transform:scaleX(0.9520);">None</span>
<svg style="left:881.0px;top:755.3px;" width="10" height="7" viewBox="0 0 10 7"><path d="M1 1.5 L5 4.8 L9 1.5" fill="none" stroke="#9a9a9a" stroke-width="1.3"/></svg>
<div style="left:5px;top:769.3px;width:916px;height:19.75px;background:#272727;"></div>
<div style="left:45.5px;top:770.8px;width:15.5px;height:16.75px;background:#1f1f1f;"></div>
<div style="left:64.5px;top:770.8px;width:15.5px;height:16.75px;background:#1f1f1f;"></div>
<svg style="left:10px;top:774.25px;" width="15" height="10" viewBox="0 0 15 10"><path d="M0.5 5 C3 0.8 12 0.8 14.5 5 C12 9.2 3 9.2 0.5 5Z" fill="none" stroke="#c8c8c8" stroke-width="1.3"/><circle cx="7.5" cy="5" r="2.3" fill="#c8c8c8"/></svg>
<div style="left:465.5px;top:771.75px;width:118.5px;height:16px;background:#191919;"></div>
<span class="t" style="left:473.5px;top:770.2px;font-size:14.5px;line-height:19px;color:#adadad;transform:scaleX(0.9523);">Normal</span>
<svg style="left:569.0px;top:776.25px;" width="10" height="7" viewBox="0 0 10 7"><path d="M1 1.5 L5 4.8 L9 1.5" fill="none" stroke="#9a9a9a" stroke-width="1.3"/></svg>
<div style="left:591px;top:771.75px;width:16px;height:16px;background:#212121;"></div>
<div style="left:614.5px;top:771.75px;width:119.5px;height:16px;background:#191919;"></div>
<span class="t" style="left:622.5px;top:770.2px;font-size:14.5px;line-height:19px;color:#adadad;transform:scaleX(0.9520);">None</span>
<svg style="left:719.0px;top:776.25px;" width="10" height="7" viewBox="0 0 10 7"><path d="M1 1.5 L5 4.8 L9 1.5" fill="none" stroke="#9a9a9a" stroke-width="1.3"/></svg>
<svg style="left:745.5px;top:771.25px;" width="16" height="16" viewBox="0 0 16 16"><path d="M11.38 1.64 L12.26 2.32 L13.01 3.11 L13.63 3.99 L14.10 4.94 L14.41 5.94 L14.57 6.97 L14.56 7.99 L14.40 8.99 L14.09 9.93 L13.64 10.81 L13.07 11.59 L12.40 12.27 L11.64 12.83 L10.81 13.26 L9.95 13.55 L9.05 13.70 L8.16 13.71 L7.29 13.59 L6.46 13.33 L5.70 12.96 L5.01 12.48 L4.41 11.90 L3.92 11.25 L3.54 10.55 L3.27 9.80 L3.13 9.04 L3.11 8.27 L3.21 7.52 L3.42 6.81 L3.73 6.15 L4.13 5.56 L4.61 5.05 L5.16 4.63 L5.75 4.30 L6.38 4.07 L7.02 3.95 L7.66 3.92 L8.29 4.00 L8.88 4.17 L9.43 4.43 L9.92 4.76 L10.35 5.15 L10.70 5.60 L10.97 6.09 L11.16 6.60 L11.26 7.12 L11.28 7.64 L11.21 8.15 L11.08 8.62 L10.87 9.06 L10.60 9.45 L10.29 9.79 L9.93 10.06 L9.55 10.27 L9.15 10.41 L8.74 10.48 L8.34 10.49 L7.96 10.43 L7.60 10.32 L7.27 10.16 L6.98 9.95 L6.74 9.71 L6.55 9.44 L6.41 9.15 L6.32 8.86 L6.28 8.56 L6.29 8.28 L6.35 8.01 L6.44 7.77 L6.57 7.56" fill="none" stroke="#8c8c8c" stroke-width="1.7" stroke-linecap="round" stroke-linejoin="round"/></svg>
<div style="left:769.5px;top:771.75px;width:126.5px;height:16px;background:#191919;"></div>
<span class="t" style="left:777.5px;top:770.2px;font-size:14.5px;line-height:19px;color:#adadad;transform:scaleX(0.9520);">None</span>
<svg style="left:881.0px;top:776.25px;" width="10" height="7" viewBox="0 0 10 7"><path d="M1 1.5 L5 4.8 L9 1.5" fill="none" stroke="#9a9a9a" stroke-width="1.3"/></svg>
<div style="left:5px;top:790.2px;width:916px;height:19.75px;background:#272727;"></div>
<div style="left:45.5px;top:791.7px;width:15.5px;height:16.75px;background:#1f1f1f;"></div>
<div style="left:64.5px;top:791.7px;width:15.5px;height:16.75px;background:#1f1f1f;"></div>
<div style="left:465.5px;top:792.7px;width:118.5px;height:16px;background:#191919;"></div>
<span class="t" style="left:473.5px;top:791.2px;font-size:14.5px;line-height:19px;color:#adadad;transform:scaleX(0.9523);">Normal</span>
<svg style="left:569.0px;top:797.2px;" width="10" height="7" viewBox="0 0 10 7"><path d="M1 1.5 L5 4.8 L9 1.5" fill="none" stroke="#9a9a9a" stroke-width="1.3"/></svg>
<div style="left:591px;top:792.7px;width:16px;height:16px;background:#212121;"></div>
<div style="left:614.5px;top:792.7px;width:119.5px;height:16px;background:#191919;"></div>
<span class="t" style="left:622.5px;top:791.2px;font-size:14.5px;line-height:19px;color:#adadad;transform:scaleX(0.9520);">None</span>
<svg style="left:719.0px;top:797.2px;" width="10" height="7" viewBox="0 0 10 7"><path d="M1 1.5 L5 4.8 L9 1.5" fill="none" stroke="#9a9a9a" stroke-width="1.3"/></svg>
<svg style="left:745.5px;top:792.2px;" width="16" height="16" viewBox="0 0 16 16"><path d="M11.38 1.64 L12.26 2.32 L13.01 3.11 L13.63 3.99 L14.10 4.94 L14.41 5.94 L14.57 6.97 L14.56 7.99 L14.40 8.99 L14.09 9.93 L13.64 10.81 L13.07 11.59 L12.40 12.27 L11.64 12.83 L10.81 13.26 L9.95 13.55 L9.05 13.70 L8.16 13.71 L7.29 13.59 L6.46 13.33 L5.70 12.96 L5.01 12.48 L4.41 11.90 L3.92 11.25 L3.54 10.55 L3.27 9.80 L3.13 9.04 L3.11 8.27 L3.21 7.52 L3.42 6.81 L3.73 6.15 L4.13 5.56 L4.61 5.05 L5.16 4.63 L5.75 4.30 L6.38 4.07 L7.02 3.95 L7.66 3.92 L8.29 4.00 L8.88 4.17 L9.43 4.43 L9.92 4.76 L10.35 5.15 L10.70 5.60 L10.97 6.09 L11.16 6.60 L11.26 7.12 L11.28 7.64 L11.21 8.15 L11.08 8.62 L10.87 9.06 L10.60 9.45 L10.29 9.79 L9.93 10.06 L9.55 10.27 L9.15 10.41 L8.74 10.48 L8.34 10.49 L7.96 10.43 L7.60 10.32 L7.27 10.16 L6.98 9.95 L6.74 9.71 L6.55 9.44 L6.41 9.15 L6.32 8.86 L6.28 8.56 L6.29 8.28 L6.35 8.01 L6.44 7.77 L6.57 7.56" fill="none" stroke="#8c8c8c" stroke-width="1.7" stroke-linecap="round" stroke-linejoin="round"/></svg>
<div style="left:769.5px;top:792.7px;width:126.5px;height:16px;background:#191919;"></div>
<span class="t" style="left:777.5px;top:791.2px;font-size:14.5px;line-height:19px;color:#adadad;transform:scaleX(0.9520);">None</span>
<svg style="left:881.0px;top:797.2px;" width="10" height="7" viewBox="0 0 10 7"><path d="M1 1.5 L5 4.8 L9 1.5" fill="none" stroke="#9a9a9a" stroke-width="1.3"/></svg>
<div style="left:5px;top:811.2px;width:916px;height:19.75px;background:#272727;"></div>
<div style="left:45.5px;top:812.7px;width:15.5px;height:16.75px;background:#1f1f1f;"></div>
<div style="left:64.5px;top:812.7px;width:15.5px;height:16.75px;background:#1f1f1f;"></div>
<svg style="left:10px;top:816.15px;" width="15" height="10" viewBox="0 0 15 10"><path d="M0.5 5 C3 0.8 12 0.8 14.5 5 C12 9.2 3 9.2 0.5 5Z" fill="none" stroke="#c8c8c8" stroke-width="1.3"/><circle cx="7.5" cy="5" r="2.3" fill="#c8c8c8"/></svg>
<div style="left:465.5px;top:813.65px;width:118.5px;height:16px;background:#191919;"></div>
<span class="t" style="left:473.5px;top:812.1px;font-size:14.5px;line-height:19px;color:#adadad;transform:scaleX(0.9523);">Normal</span>
<svg style="left:569.0px;top:818.15px;" width="10" height="7" viewBox="0 0 10 7"><path d="M1 1.5 L5 4.8 L9 1.5" fill="none" stroke="#9a9a9a" stroke-width="1.3"/></svg>
<div style="left:591px;top:813.65px;width:16px;height:16px;background:#212121;"></div>
<div style="left:614.5px;top:813.65px;width:119.5px;height:16px;background:#191919;"></div>
<span class="t" style="left:622.5px;top:812.1px;font-size:14.5px;line-height:19px;color:#adadad;transform:scaleX(0.9520);">None</span>
<svg style="left:719.0px;top:818.15px;" width="10" height="7" viewBox="0 0 10 7"><path d="M1 1.5 L5 4.8 L9 1.5" fill="none" stroke="#9a9a9a" stroke-width="1.3"/></svg>
<svg style="left:745.5px;top:813.15px;" width="16" height="16" viewBox="0 0 16 16"><path d="M11.38 1.64 L12.26 2.32 L13.01 3.11 L13.63 3.99 L14.10 4.94 L14.41 5.94 L14.57 6.97 L14.56 7.99 L14.40 8.99 L14.09 9.93 L13.64 10.81 L13.07 11.59 L12.40 12.27 L11.64 12.83 L10.81 13.26 L9.95 13.55 L9.05 13.70 L8.16 13.71 L7.29 13.59 L6.46 13.33 L5.70 12.96 L5.01 12.48 L4.41 11.90 L3.92 11.25 L3.54 10.55 L3.27 9.80 L3.13 9.04 L3.11 8.27 L3.21 7.52 L3.42 6.81 L3.73 6.15 L4.13 5.56 L4.61 5.05 L5.16 4.63 L5.75 4.30 L6.38 4.07 L7.02 3.95 L7.66 3.92 L8.29 4.00 L8.88 4.17 L9.43 4.43 L9.92 4.76 L10.35 5.15 L10.70 5.60 L10.97 6.09 L11.16 6.60 L11.26 7.12 L11.28 7.64 L11.21 8.15 L11.08 8.62 L10.87 9.06 L10.60 9.45 L10.29 9.79 L9.93 10.06 L9.55 10.27 L9.15 10.41 L8.74 10.48 L8.34 10.49 L7.96 10.43 L7.60 10.32 L7.27 10.16 L6.98 9.95 L6.74 9.71 L6.55 9.44 L6.41 9.15 L6.32 8.86 L6.28 8.56 L6.29 8.28 L6.35 8.01 L6.44 7.77 L6.57 7.56" fill="none" stroke="#8c8c8c" stroke-width="1.7" stroke-linecap="round" stroke-linejoin="round"/></svg>
<div style="left:769.5px;top:813.65px;width:126.5px;height:16px;background:#191919;"></div>
<div style="left:777.5px;top:812.1px;width:101px;height:19px;overflow:hidden;"><span class="t" style="left:0;top:0;font-size:14.5px;line-height:19px;color:#adadad;transform:scaleX(0.9282);">9. Copy of Copy</span></div>
<svg style="left:881.0px;top:818.15px;" width="10" height="7" viewBox="0 0 10 7"><path d="M1 1.5 L5 4.8 L9 1.5" fill="none" stroke="#9a9a9a" stroke-width="1.3"/></svg>
<div style="left:5px;top:832.1px;width:916px;height:19.75px;background:#272727;"></div>
<div style="left:45.5px;top:833.6px;width:15.5px;height:16.75px;background:#1f1f1f;"></div>
<div style="left:64.5px;top:833.6px;width:15.5px;height:16.75px;background:#1f1f1f;"></div>
<svg style="left:10px;top:837.1px;" width="15" height="10" viewBox="0 0 15 10"><path d="M0.5 5 C3 0.8 12 0.8 14.5 5 C12 9.2 3 9.2 0.5 5Z" fill="none" stroke="#c8c8c8" stroke-width="1.3"/><circle cx="7.5" cy="5" r="2.3" fill="#c8c8c8"/></svg>
<div style="left:465.5px;top:834.6px;width:118.5px;height:16px;background:#191919;"></div>
<span class="t" style="left:473.5px;top:833.1px;font-size:14.5px;line-height:19px;color:#adadad;transform:scaleX(1.0376);">Multiply</span>
<svg style="left:569.0px;top:839.1px;" width="10" height="7" viewBox="0 0 10 7"><path d="M1 1.5 L5 4.8 L9 1.5" fill="none" stroke="#9a9a9a" stroke-width="1.3"/></svg>
<div style="left:591px;top:834.6px;width:16px;height:16px;background:#212121;"></div>
<div style="left:614.5px;top:834.6px;width:119.5px;height:16px;background:#191919;"></div>
<span class="t" style="left:622.5px;top:833.1px;font-size:14.5px;line-height:19px;color:#adadad;transform:scaleX(0.9520);">None</span>
<svg style="left:719.0px;top:839.1px;" width="10" height="7" viewBox="0 0 10 7"><path d="M1 1.5 L5 4.8 L9 1.5" fill="none" stroke="#9a9a9a" stroke-width="1.3"/></svg>
<svg style="left:745.5px;top:834.1px;" width="16" height="16" viewBox="0 0 16 16"><path d="M11.38 1.64 L12.26 2.32 L13.01 3.11 L13.63 3.99 L14.10 4.94 L14.41 5.94 L14.57 6.97 L14.56 7.99 L14.40 8.99 L14.09 9.93 L13.64 10.81 L13.07 11.59 L12.40 12.27 L11.64 12.83 L10.81 13.26 L9.95 13.55 L9.05 13.70 L8.16 13.71 L7.29 13.59 L6.46 13.33 L5.70 12.96 L5.01 12.48 L4.41 11.90 L3.92 11.25 L3.54 10.55 L3.27 9.80 L3.13 9.04 L3.11 8.27 L3.21 7.52 L3.42 6.81 L3.73 6.15 L4.13 5.56 L4.61 5.05 L5.16 4.63 L5.75 4.30 L6.38 4.07 L7.02 3.95 L7.66 3.92 L8.29 4.00 L8.88 4.17 L9.43 4.43 L9.92 4.76 L10.35 5.15 L10.70 5.60 L10.97 6.09 L11.16 6.60 L11.26 7.12 L11.28 7.64 L11.21 8.15 L11.08 8.62 L10.87 9.06 L10.60 9.45 L10.29 9.79 L9.93 10.06 L9.55 10.27 L9.15 10.41 L8.74 10.48 L8.34 10.49 L7.96 10.43 L7.60 10.32 L7.27 10.16 L6.98 9.95 L6.74 9.71 L6.55 9.44 L6.41 9.15 L6.32 8.86 L6.28 8.56 L6.29 8.28 L6.35 8.01 L6.44 7.77 L6.57 7.56" fill="none" stroke="#8c8c8c" stroke-width="1.7" stroke-linecap="round" stroke-linejoin="round"/></svg>
<div style="left:769.5px;top:834.6px;width:126.5px;height:16px;background:#191919;"></div>
<div style="left:777.5px;top:833.1px;width:101px;height:19px;overflow:hidden;"><span class="t" style="left:0;top:0;font-size:14.5px;line-height:19px;color:#adadad;transform:scaleX(0.9282);">9. Copy of Copy</span></div>
<svg style="left:881.0px;top:839.1px;" width="10" height="7" viewBox="0 0 10 7"><path d="M1 1.5 L5 4.8 L9 1.5" fill="none" stroke="#9a9a9a" stroke-width="1.3"/></svg>
<div style="left:5px;top:853.1px;width:916px;height:19.75px;background:#222222;"></div>
<svg style="left:761.5px;top:855.05px;" width="16" height="16" viewBox="0 0 16 16"><path d="M11.38 1.64 L12.26 2.32 L13.01 3.11 L13.63 3.99 L14.10 4.94 L14.41 5.94 L14.57 6.97 L14.56 7.99 L14.40 8.99 L14.09 9.93 L13.64 10.81 L13.07 11.59 L12.40 12.27 L11.64 12.83 L10.81 13.26 L9.95 13.55 L9.05 13.70 L8.16 13.71 L7.29 13.59 L6.46 13.33 L5.70 12.96 L5.01 12.48 L4.41 11.90 L3.92 11.25 L3.54 10.55 L3.27 9.80 L3.13 9.04 L3.11 8.27 L3.21 7.52 L3.42 6.81 L3.73 6.15 L4.13 5.56 L4.61 5.05 L5.16 4.63 L5.75 4.30 L6.38 4.07 L7.02 3.95 L7.66 3.92 L8.29 4.00 L8.88 4.17 L9.43 4.43 L9.92 4.76 L10.35 5.15 L10.70 5.60 L10.97 6.09 L11.16 6.60 L11.26 7.12 L11.28 7.64 L11.21 8.15 L11.08 8.62 L10.87 9.06 L10.60 9.45 L10.29 9.79 L9.93 10.06 L9.55 10.27 L9.15 10.41 L8.74 10.48 L8.34 10.49 L7.96 10.43 L7.60 10.32 L7.27 10.16 L6.98 9.95 L6.74 9.71 L6.55 9.44 L6.41 9.15 L6.32 8.86 L6.28 8.56 L6.29 8.28 L6.35 8.01 L6.44 7.77 L6.57 7.56" fill="none" stroke="#8c8c8c" stroke-width="1.7" stroke-linecap="round" stroke-linejoin="round"/></svg>
<div style="left:5px;top:874.0px;width:916px;height:19.75px;background:#272727;"></div>
<div style="left:45.5px;top:875.5px;width:15.5px;height:16.75px;background:#1f1f1f;"></div>
<div style="left:64.5px;top:875.5px;width:15.5px;height:16.75px;background:#1f1f1f;"></div>
<svg style="left:10px;top:879.0px;" width="15" height="10" viewBox="0 0 15 10"><path d="M0.5 5 C3 0.8 12 0.8 14.5 5 C12 9.2 3 9.2 0.5 5Z" fill="none" stroke="#c8c8c8" stroke-width="1.3"/><circle cx="7.5" cy="5" r="2.3" fill="#c8c8c8"/></svg>
<div style="left:465.5px;top:876.5px;width:118.5px;height:16px;background:#191919;"></div>
<span class="t" style="left:473.5px;top:875.0px;font-size:14.5px;line-height:19px;color:#adadad;transform:scaleX(0.9523);">Normal</span>
<svg style="left:569.0px;top:881.0px;" width="10" height="7" viewBox="0 0 10 7"><path d="M1 1.5 L5 4.8 L9 1.5" fill="none" stroke="#9a9a9a" stroke-width="1.3"/></svg>
<div style="left:591px;top:876.5px;width:16px;height:16px;background:#212121;"></div>
<div style="left:614.5px;top:876.5px;width:119.5px;height:16px;background:#191919;"></div>
<span class="t" style="left:622.5px;top:875.0px;font-size:14.5px;line-height:19px;color:#adadad;transform:scaleX(0.9520);">None</span>
<svg style="left:719.0px;top:881.0px;" width="10" height="7" viewBox="0 0 10 7"><path d="M1 1.5 L5 4.8 L9 1.5" fill="none" stroke="#9a9a9a" stroke-width="1.3"/></svg>
<svg style="left:745.5px;top:876.0px;" width="16" height="16" viewBox="0 0 16 16"><path d="M11.38 1.64 L12.26 2.32 L13.01 3.11 L13.63 3.99 L14.10 4.94 L14.41 5.94 L14.57 6.97 L14.56 7.99 L14.40 8.99 L14.09 9.93 L13.64 10.81 L13.07 11.59 L12.40 12.27 L11.64 12.83 L10.81 13.26 L9.95 13.55 L9.05 13.70 L8.16 13.71 L7.29 13.59 L6.46 13.33 L5.70 12.96 L5.01 12.48 L4.41 11.90 L3.92 11.25 L3.54 10.55 L3.27 9.80 L3.13 9.04 L3.11 8.27 L3.21 7.52 L3.42 6.81 L3.73 6.15 L4.13 5.56 L4.61 5.05 L5.16 4.63 L5.75 4.30 L6.38 4.07 L7.02 3.95 L7.66 3.92 L8.29 4.00 L8.88 4.17 L9.43 4.43 L9.92 4.76 L10.35 5.15 L10.70 5.60 L10.97 6.09 L11.16 6.60 L11.26 7.12 L11.28 7.64 L11.21 8.15 L11.08 8.62 L10.87 9.06 L10.60 9.45 L10.29 9.79 L9.93 10.06 L9.55 10.27 L9.15 10.41 L8.74 10.48 L8.34 10.49 L7.96 10.43 L7.60 10.32 L7.27 10.16 L6.98 9.95 L6.74 9.71 L6.55 9.44 L6.41 9.15 L6.32 8.86 L6.28 8.56 L6.29 8.28 L6.35 8.01 L6.44 7.77 L6.57 7.56" fill="none" stroke="#8c8c8c" stroke-width="1.7" stroke-linecap="round" stroke-linejoin="round"/></svg>
<div style="left:769.5px;top:876.5px;width:126.5px;height:16px;background:#191919;"></div>
<div style="left:777.5px;top:875.0px;width:101px;height:19px;overflow:hidden;"><span class="t" style="left:0;top:0;font-size:14.5px;line-height:19px;color:#adadad;transform:scaleX(0.9685);">10. Copy of Copy</span></div>
<svg style="left:881.0px;top:881.0px;" width="10" height="7" viewBox="0 0 10 7"><path d="M1 1.5 L5 4.8 L9 1.5" fill="none" stroke="#9a9a9a" stroke-width="1.3"/></svg>
<div style="left:5px;top:895.0px;width:916px;height:19.75px;background:#272727;"></div>
<div style="left:45.5px;top:896.5px;width:15.5px;height:16.75px;background:#1f1f1f;"></div>
<div style="left:64.5px;top:896.5px;width:15.5px;height:16.75px;background:#1f1f1f;"></div>
<svg style="left:10px;top:899.95px;" width="15" height="10" viewBox="0 0 15 10"><path d="M0.5 5 C3 0.8 12 0.8 14.5 5 C12 9.2 3 9.2 0.5 5Z" fill="none" stroke="#c8c8c8" stroke-width="1.3"/><circle cx="7.5" cy="5" r="2.3" fill="#c8c8c8"/></svg>
<div style="left:465.5px;top:897.45px;width:118.5px;height:16px;background:#191919;"></div>
<span class="t" style="left:473.5px;top:896.0px;font-size:14.5px;line-height:19px;color:#adadad;transform:scaleX(0.9523);">Normal</span>
<svg style="left:569.0px;top:901.95px;" width="10" height="7" viewBox="0 0 10 7"><path d="M1 1.5 L5 4.8 L9 1.5" fill="none" stroke="#9a9a9a" stroke-width="1.3"/></svg>
<div style="left:591px;top:897.45px;width:16px;height:16px;background:#212121;"></div>
<div style="left:614.5px;top:897.45px;width:119.5px;height:16px;background:#191919;"></div>
<span class="t" style="left:622.5px;top:896.0px;font-size:14.5px;line-height:19px;color:#adadad;transform:scaleX(0.9520);">None</span>
<svg style="left:719.0px;top:901.95px;" width="10" height="7" viewBox="0 0 10 7"><path d="M1 1.5 L5 4.8 L9 1.5" fill="none" stroke="#9a9a9a" stroke-width="1.3"/></svg>
<svg style="left:745.5px;top:896.95px;" width="16" height="16" viewBox="0 0 16 16"><path d="M11.38 1.64 L12.26 2.32 L13.01 3.11 L13.63 3.99 L14.10 4.94 L14.41 5.94 L14.57 6.97 L14.56 7.99 L14.40 8.99 L14.09 9.93 L13.64 10.81 L13.07 11.59 L12.40 12.27 L11.64 12.83 L10.81 13.26 L9.95 13.55 L9.05 13.70 L8.16 13.71 L7.29 13.59 L6.46 13.33 L5.70 12.96 L5.01 12.48 L4.41 11.90 L3.92 11.25 L3.54 10.55 L3.27 9.80 L3.13 9.04 L3.11 8.27 L3.21 7.52 L3.42 6.81 L3.73 6.15 L4.13 5.56 L4.61 5.05 L5.16 4.63 L5.75 4.30 L6.38 4.07 L7.02 3.95 L7.66 3.92 L8.29 4.00 L8.88 4.17 L9.43 4.43 L9.92 4.76 L10.35 5.15 L10.70 5.60 L10.97 6.09 L11.16 6.60 L11.26 7.12 L11.28 7.64 L11.21 8.15 L11.08 8.62 L10.87 9.06 L10.60 9.45 L10.29 9.79 L9.93 10.06 L9.55 10.27 L9.15 10.41 L8.74 10.48 L8.34 10.49 L7.96 10.43 L7.60 10.32 L7.27 10.16 L6.98 9.95 L6.74 9.71 L6.55 9.44 L6.41 9.15 L6.32 8.86 L6.28 8.56 L6.29 8.28 L6.35 8.01 L6.44 7.77 L6.57 7.56" fill="none" stroke="#8c8c8c" stroke-width="1.7" stroke-linecap="round" stroke-linejoin="round"/></svg>
<div style="left:769.5px;top:897.45px;width:126.5px;height:16px;background:#191919;"></div>
<span class="t" style="left:777.5px;top:896.0px;font-size:14.5px;line-height:19px;color:#adadad;transform:scaleX(0.9520);">None</span>
<svg style="left:881.0px;top:901.95px;" width="10" height="7" viewBox="0 0 10 7"><path d="M1 1.5 L5 4.8 L9 1.5" fill="none" stroke="#9a9a9a" stroke-width="1.3"/></svg>
<svg style="left:466px;top:711.4px;" width="17" height="10" viewBox="0 0 17 10"><rect x="1" y="2" width="8.500" height="6" rx="3" fill="none" stroke="#b8b8b8" stroke-width="1.600"/><rect x="7.500" y="2" width="8.500" height="6" rx="3" fill="none" stroke="#b8b8b8" stroke-width="1.600"/></svg>
<span class="t" style="left:489px;top:707.4px;font-size:14.5px;line-height:19px;color:#b13030;transform:scaleX(0.9095);">125.0</span>
<span class="t" style="left:522.5px;top:707.9px;font-size:14.5px;line-height:19px;color:#9a9a9a;">,</span>
<span class="t" style="left:526.5px;top:707.4px;font-size:14.5px;line-height:19px;color:#b13030;transform:scaleX(0.8957);">125.0</span>
<span class="t" style="left:560px;top:707.4px;font-size:14.5px;line-height:19px;color:#8e8e8e;transform:scaleX(0.8532);">%</span>
<span class="t" style="left:467px;top:854.0px;font-size:14.5px;line-height:19px;color:#2c78d0;transform:scaleX(0.9568);">38.0</span>
<span class="t" style="left:494.5px;top:854.0px;font-size:14.5px;line-height:19px;color:#8e8e8e;transform:scaleX(0.8532);">%</span>
<svg style="left:11px;top:857.05px;" width="50" height="12" viewBox="0 0 50 12"><path d="M9.500 1 v10 l-8 -5z" fill="#c0c0c0"/><path d="M24 1 l5 5 l-5 5 l-5 -5z" fill="none" stroke="#a8a8a8" stroke-width="1.300"/><path d="M40 1.500 v9 l7 -4.500z" fill="#4a4a4a"/></svg>
<span class="t" style="left:403px;top:833.1px;font-size:14.5px;line-height:19px;color:#c4c4c4;font-weight:700;transform:scaleX(0.9059);">rance...</span>
<svg style="left:94.0px;top:879.0px;" width="7" height="10" viewBox="0 0 7 10"><path d="M1.5 1 L4.8 5 L1.5 9" fill="none" stroke="#8a8a8a" stroke-width="1.3"/></svg>
<div style="left:110px;top:877.0px;width:13.5px;height:14px;background:#a83232;"></div>
<span class="t" style="left:133.5px;top:875.0px;font-size:14.5px;line-height:19px;color:#adadad;">9</span>
<div style="left:164.5px;top:877.0px;width:13.5px;height:14px;background:#dedede;"></div>
<span class="t" style="left:188px;top:875.5px;font-size:13.5px;line-height:18px;color:#b6b6b6;font-weight:700;transform:scaleX(0.9579);">Copy of...opy of World Mapcomp Anchor</span>
<svg style="left:93px;top:901.45px;" width="10" height="7" viewBox="0 0 10 7"><path d="M1 1.5 L5 4.8 L9 1.5" fill="none" stroke="#8a8a8a" stroke-width="1.3"/></svg>
<div style="left:110px;top:897.95px;width:13.5px;height:14px;background:#a08d6c;"></div>
<span class="t" style="left:133px;top:896.0px;font-size:14.5px;line-height:19px;color:#adadad;transform:scaleX(1.0541);">10</span>
<svg style="left:162px;top:896.95px;" width="21" height="16" viewBox="0 0 21 16"><rect x="0.5" y="0.5" width="20" height="15" rx="1.5" fill="#929292" stroke="#666"/><rect x="4" y="2" width="13" height="10.5" fill="#a6a6a6"/><g fill="#555"><rect x="1.5" y="2" width="1.4" height="1.6"/><rect x="1.5" y="6" width="1.4" height="1.6"/><rect x="1.5" y="10" width="1.4" height="1.6"/><rect x="18.1" y="2" width="1.4" height="1.6"/><rect x="18.1" y="6" width="1.4" height="1.6"/><rect x="18.1" y="10" width="1.4" height="1.6"/></g><rect x="5" y="13" width="11" height="1.6" fill="#6a6a6a"/><circle cx="7.8" cy="6.2" r="2.6" fill="#2f86dc"/><path d="M11 5.2 l3.4 -1.6 l1.6 3.2 l-2.2 2.6 l-2.6 -1.6z" fill="#d8362c"/><path d="M6.5 11.6 l3.6 -3.4 l3.4 3.4z" fill="#1e9b2c"/></svg>
<span class="t" style="left:188px;top:896.5px;font-size:13.5px;line-height:18px;color:#b6b6b6;font-weight:700;transform:scaleX(0.9523);">Copy of...py of Copy of World Mapcomp</span>
<div style="left:5px;top:915.9px;width:916px;height:9px;background:#222222;"></div>
<div style="left:467px;top:915.4px;width:40px;height:19px;overflow:hidden;"><span class="t" style="left:0;top:0;font-size:14.5px;line-height:19px;color:#2c78d0;">Reset</span></div>
<div style="left:5px;top:923.5px;width:916px;height:1.5px;background:#161616;"></div>
<div style="left:5px;top:925px;width:916px;height:19px;background:#212121;"></div>
<svg style="left:11px;top:927px;" width="16" height="16" viewBox="0 0 16 16"><rect x="0.800" y="0.800" width="8.500" height="8.500" fill="none" stroke="#b0b0b0" stroke-width="1.300"/><rect x="3.600" y="3.600" width="8.500" height="8.500" fill="#212121" stroke="#b0b0b0" stroke-width="1.300"/><path d="M10 13.500 h5 M12.500 11 v5" stroke="#b0b0b0" stroke-width="1.300"/></svg>
<svg style="left:33px;top:927px;" width="17" height="16" viewBox="0 0 17 16"><circle cx="6" cy="6" r="4.800" fill="none" stroke="#2c78d0" stroke-width="1.600"/><rect x="6.500" y="6.500" width="8" height="8" fill="none" stroke="#2c78d0" stroke-width="1.600"/></svg>
<span class="t" style="left:57px;top:924.5px;font-size:15px;line-height:20px;color:#b0b0b0;font-weight:700;">{</span>
<span class="t" style="left:66px;top:924.5px;font-size:15px;line-height:20px;color:#b0b0b0;font-weight:700;">}</span>
<svg style="left:60.5px;top:929px;" width="6" height="12" viewBox="0 0 6 12"><path d="M1.500 0 v12 M4.500 0 v12" stroke="#b0b0b0" stroke-width="1.600"/></svg>
<div style="left:463px;top:925px;width:1px;height:19px;background:#191919;"></div>
<div style="left:739px;top:925px;width:1px;height:19px;background:#191919;"></div>
<span class="t" style="left:525px;top:925.0px;font-size:14.5px;line-height:19px;color:#8a8a8a;transform:scaleX(0.9415);">Toggle Switches / Modes</span>
<div style="left:921px;top:596px;width:879px;height:348px;background:#1f1f1f;"></div>
<div style="left:921px;top:596px;width:1.5px;height:348px;background:#151515;"></div>
<div style="left:925px;top:604.5px;width:797px;height:10px;background:#5a5a5a;"></div>
<div style="left:1722px;top:604.5px;width:68px;height:10px;background:#3b3834;"></div>
<div style="left:922.5px;top:604.5px;width:6.5px;height:10px;background:#2c78d0;border-radius:5px 0 0 5px;"></div>
<div style="left:1719px;top:604.5px;width:7px;height:10px;background:#2c78d0;border-radius:0 5px 5px 0;"></div>
<div style="left:1187px;top:605.5px;width:1.5px;height:8px;background:#7fb2ea;"></div>
<div style="left:923px;top:616px;width:877px;height:23.5px;background:#1c1c1c;"></div>
<div style="left:930.0px;top:633.5px;width:1px;height:6px;background:#8a8a8a;"></div>
<div style="left:921.5px;top:618.0px;width:30px;height:16px;overflow:hidden;"><span class="t" style="left:0;top:0;font-size:12.5px;line-height:16px;color:#a0a0a0;transform:scaleX(0.8503);margin-left:-7px;">0:00s</span></div>
<div style="left:953.0px;top:629px;width:1px;height:1.5px;background:#555;"></div>
<div style="left:1007.9px;top:633.5px;width:1px;height:6px;background:#8a8a8a;"></div>
<span class="t" style="left:996.9px;top:618.0px;font-size:12.5px;line-height:16px;color:#a0a0a0;transform:scaleX(0.9924);">05s</span>
<div style="left:1030.8px;top:629px;width:1px;height:1.5px;background:#555;"></div>
<div style="left:1085.7px;top:633.5px;width:1px;height:6px;background:#8a8a8a;"></div>
<span class="t" style="left:1074.7px;top:618.0px;font-size:12.5px;line-height:16px;color:#a0a0a0;transform:scaleX(0.9924);">10s</span>
<div style="left:1108.7px;top:629px;width:1px;height:1.5px;background:#555;"></div>
<div style="left:1163.5px;top:633.5px;width:1px;height:6px;background:#8a8a8a;"></div>
<span class="t" style="left:1152.5px;top:618.0px;font-size:12.5px;line-height:16px;color:#a0a0a0;transform:scaleX(0.9924);">15s</span>
<div style="left:1186.5px;top:629px;width:1px;height:1.5px;background:#555;"></div>
<div style="left:1241.4px;top:633.5px;width:1px;height:6px;background:#8a8a8a;"></div>
<span class="t" style="left:1230.4px;top:618.0px;font-size:12.5px;line-height:16px;color:#a0a0a0;transform:scaleX(0.9924);">20s</span>
<div style="left:1264.4px;top:629px;width:1px;height:1.5px;background:#555;"></div>
<div style="left:1319.2px;top:633.5px;width:1px;height:6px;background:#8a8a8a;"></div>
<span class="t" style="left:1308.2px;top:618.0px;font-size:12.5px;line-height:16px;color:#a0a0a0;transform:scaleX(0.9924);">25s</span>
<div style="left:1342.2px;top:629px;width:1px;height:1.5px;background:#555;"></div>
<div style="left:1397.1px;top:633.5px;width:1px;height:6px;background:#8a8a8a;"></div>
<span class="t" style="left:1386.1px;top:618.0px;font-size:12.5px;line-height:16px;color:#a0a0a0;transform:scaleX(0.9924);">30s</span>
<div style="left:1420.1px;top:629px;width:1px;height:1.5px;background:#555;"></div>
<div style="left:1475.0px;top:633.5px;width:1px;height:6px;background:#8a8a8a;"></div>
<span class="t" style="left:1464.0px;top:618.0px;font-size:12.5px;line-height:16px;color:#a0a0a0;transform:scaleX(0.9924);">35s</span>
<div style="left:1498.0px;top:629px;width:1px;height:1.5px;background:#555;"></div>
<div style="left:1552.8px;top:633.5px;width:1px;height:6px;background:#8a8a8a;"></div>
<span class="t" style="left:1541.8px;top:618.0px;font-size:12.5px;line-height:16px;color:#a0a0a0;transform:scaleX(0.9924);">40s</span>
<div style="left:1575.8px;top:629px;width:1px;height:1.5px;background:#555;"></div>
<div style="left:1630.7px;top:633.5px;width:1px;height:6px;background:#8a8a8a;"></div>
<span class="t" style="left:1619.7px;top:618.0px;font-size:12.5px;line-height:16px;color:#a0a0a0;transform:scaleX(0.9924);">45s</span>
<div style="left:1653.7px;top:629px;width:1px;height:1.5px;background:#555;"></div>
<div style="left:1708.5px;top:633.5px;width:1px;height:6px;background:#8a8a8a;"></div>
<span class="t" style="left:1697.5px;top:618.0px;font-size:12.5px;line-height:16px;color:#a0a0a0;transform:scaleX(0.9924);">50s</span>
<div style="left:1731.5px;top:629px;width:1px;height:1.5px;background:#555;"></div>
<div style="left:1786.3px;top:633.5px;width:1px;height:6px;background:#8a8a8a;"></div>
<span class="t" style="left:1775.3px;top:618.0px;font-size:12.5px;line-height:16px;color:#a0a0a0;transform:scaleX(0.9924);">55s</span>
<div style="left:923px;top:639.5px;width:877px;height:1.5px;background:#141414;"></div>
<div style="left:930px;top:641px;width:866px;height:18.5px;background:#525252;"></div>
<div style="left:924px;top:641px;width:6.5px;height:18.5px;background:#2c78d0;border-radius:4px 0 0 4px;"></div>
<div style="left:923px;top:659.5px;width:877px;height:5px;background:#1c1c1c;"></div>
<div style="left:1015px;top:661.5px;width:2px;height:1.5px;background:#1f9a2a;"></div>
<div style="left:1245px;top:661.5px;width:2px;height:1.5px;background:#1f7a2a;"></div>
<div style="left:923px;top:664.5px;width:873px;height:19.4px;background:#323232;"></div>
<div style="left:923px;top:683.9px;width:877px;height:1.5px;background:#1b1b1b;"></div>
<div style="left:930.5px;top:664.5px;width:865.5px;height:19.4px;background:#652f2f;"></div>
<div style="left:923px;top:685.5px;width:873px;height:19.4px;background:#323232;"></div>
<div style="left:923px;top:704.9px;width:877px;height:1.5px;background:#1b1b1b;"></div>
<div style="left:930.5px;top:685.5px;width:467.0px;height:19.4px;background:#5f5749;border-radius:5px 4px 0 0;"></div>
<div style="left:923px;top:706.4px;width:873px;height:19.4px;background:#2c2c2c;"></div>
<div style="left:923px;top:725.8px;width:877px;height:1.5px;background:#1b1b1b;"></div>
<div style="left:923px;top:727.4px;width:873px;height:19.4px;background:#323232;"></div>
<div style="left:923px;top:746.8px;width:877px;height:1.5px;background:#1b1b1b;"></div>
<div style="left:930.5px;top:727.4px;width:467.0px;height:19.4px;background:#5f5749;border-radius:5px 4px 0 0;"></div>
<div style="left:923px;top:748.3px;width:873px;height:19.4px;background:#323232;"></div>
<div style="left:923px;top:767.6999999999999px;width:877px;height:1.5px;background:#1b1b1b;"></div>
<div style="left:930.5px;top:748.3px;width:467.0px;height:19.4px;background:#5f5749;border-radius:5px 4px 0 0;"></div>
<div style="left:923px;top:769.3px;width:873px;height:19.4px;background:#323232;"></div>
<div style="left:923px;top:788.6999999999999px;width:877px;height:1.5px;background:#1b1b1b;"></div>
<div style="left:930.5px;top:769.3px;width:467.0px;height:19.4px;background:#5f5749;border-radius:5px 4px 0 0;"></div>
<div style="left:923px;top:790.2px;width:873px;height:19.4px;background:#323232;"></div>
<div style="left:923px;top:809.6px;width:877px;height:1.5px;background:#1b1b1b;"></div>
<div style="left:927.5px;top:790.2px;width:465.5px;height:19.4px;background:#5f5749;border-radius:5px 4px 0 0;"></div>
<div style="left:923px;top:811.2px;width:873px;height:19.4px;background:#323232;"></div>
<div style="left:923px;top:830.6px;width:877px;height:1.5px;background:#1b1b1b;"></div>
<div style="left:930.5px;top:811.2px;width:865.5px;height:19.4px;background:#454c76;"></div>
<div style="left:923px;top:832.1px;width:873px;height:19.4px;background:#323232;"></div>
<div style="left:923px;top:851.5px;width:877px;height:1.5px;background:#1b1b1b;"></div>
<div style="left:930.5px;top:832.1px;width:467.0px;height:19.4px;background:#454c76;"></div>
<div style="left:923px;top:853.1px;width:873px;height:19.4px;background:#2c2c2c;"></div>
<div style="left:923px;top:872.5px;width:877px;height:1.5px;background:#1b1b1b;"></div>
<div style="left:923px;top:874.0px;width:873px;height:19.4px;background:#323232;"></div>
<div style="left:923px;top:893.4px;width:877px;height:1.5px;background:#1b1b1b;"></div>
<div style="left:930.5px;top:874.0px;width:467.0px;height:19.4px;background:#652f2f;"></div>
<div style="left:923px;top:895.0px;width:873px;height:19.4px;background:#323232;"></div>
<div style="left:923px;top:914.4px;width:877px;height:1.5px;background:#1b1b1b;"></div>
<div style="left:930.5px;top:895.0px;width:467.0px;height:19.4px;background:#5f5749;border-radius:5px 4px 0 0;"></div>
<div style="left:923px;top:915.9px;width:873px;height:8px;background:#323232;"></div>
<div style="left:930.5px;top:915.9px;width:467.0px;height:8px;background:#5f5749;border-radius:5px 4px 0 0;"></div>
<div style="left:1796px;top:641px;width:4px;height:284px;background:#1b1b1b;"></div>
<svg style="left:1032.0px;top:674.0px;" width="13" height="11" viewBox="0 0 13 11"><path d="M0.500 11 v-5 l6 -5.500 l6 5.500 v5z" fill="#bcbcbc" stroke="#5a2a2a" stroke-width="0.800"/></svg>
<svg style="left:1166.0px;top:674.0px;" width="13" height="11" viewBox="0 0 13 11"><path d="M0.500 11 v-5 l6 -5.500 l6 5.500 v5z" fill="#bcbcbc" stroke="#5a2a2a" stroke-width="0.800"/></svg>
<svg style="left:928.0px;top:857.55px;" width="11" height="11" viewBox="0 0 11 11"><path d="M0.500 0.500 h10 l-3.200 5 l3.200 5 h-10 l3.200 -5z" fill="#c4c4c4"/></svg>
<svg style="left:987.5px;top:857.55px;" width="11" height="11" viewBox="0 0 11 11"><path d="M0.500 0.500 h10 l-3.200 5 l3.200 5 h-10 l3.200 -5z" fill="#c4c4c4"/></svg>
<svg style="left:1204.5px;top:708.4px;" width="11" height="16" viewBox="0 0 11 16"><path d="M1.500 1 h8 M1.500 15 h8 M5.500 1 v14" stroke="#c8c8c8" stroke-width="1.800"/></svg>
<div style="left:1209.5px;top:625px;width:1.5px;height:297px;background:#3a7fd4;"></div>
<svg style="left:1203px;top:622px;" width="15" height="16" viewBox="0 0 15 16"><path d="M0.500 0.500 h14 v6.500 l-7 8.500 l-7 -8.500z" fill="#2c78d0"/><path d="M7.500 5 v9" stroke="#17406f" stroke-width="1"/></svg>
<svg style="left:1205.5px;top:919px;" width="10" height="4" viewBox="0 0 10 4"><path d="M0 3.500 h10 M5 0 v3" stroke="#5a8fd0" stroke-width="1"/></svg>
<div style="left:921px;top:923.5px;width:879px;height:1.5px;background:#161616;"></div>
<div style="left:921px;top:925px;width:879px;height:19px;background:#212121;"></div>
<svg style="left:929px;top:929px;" width="13" height="10" viewBox="0 0 13 10"><path d="M0.500 8.500 l4 -5 l2.500 3 l1.500 -1.500 l3.500 3.500z" fill="#b0b0b0"/></svg>
<svg style="left:958px;top:928px;" width="13" height="13" viewBox="0 0 13 13"><circle cx="6.500" cy="6.500" r="4.600" fill="#1c1c1c" stroke="#c0c0c0" stroke-width="1.600"/></svg>
<div style="left:970px;top:934px;width:43px;height:1.5px;background:#444;"></div>
<svg style="left:1027px;top:926px;" width="24" height="15" viewBox="0 0 24 15"><path d="M0.500 13.500 l6.500 -8.500 l4 5 l4 -9 l8 12.500z" fill="#b0b0b0"/></svg>
<div style="left:1056px;top:928.5px;width:678px;height:14px;background:#2b2b2b;border-radius:7px;"></div>
<svg style="left:0;top:0" width="400" height="230" viewBox="0 0 400 230"><path d="M145.5 72.0 C151.9 72.3 160.6 73.1 167.0 74.5 C173.4 75.9 178.9 77.7 184.0 80.3 C189.1 82.9 193.6 86.4 197.3 90.3 C201.1 94.2 204.4 99.5 206.5 103.7 C208.6 107.9 209.7 111.4 209.9 115.4 C210.1 119.4 208.8 124.0 207.6 127.5 C206.4 131.0 204.9 133.5 202.5 136.5 C200.1 139.5 197.1 142.6 193.0 145.6 C188.9 148.6 183.0 152.0 177.8 154.4 C172.6 156.8 166.8 157.4 162.0 160.0 C157.2 162.6 152.6 166.1 148.9 170.0 C145.2 173.9 143.0 178.1 140.0 183.3 C137.0 188.5 134.3 196.0 131.0 201.0 C127.7 206.0 123.7 210.9 120.0 213.3 C116.3 215.7 112.6 216.5 108.9 215.6 C105.2 214.7 101.1 211.3 97.8 207.8 C94.5 204.3 91.5 200.0 88.9 194.4 C86.3 188.8 83.9 181.4 82.2 174.4 C80.5 167.4 79.6 159.0 78.9 152.2 C78.2 145.4 77.9 139.1 77.8 133.8 C77.7 128.5 77.8 124.8 78.5 120.3 C79.2 115.8 80.3 111.2 82.0 107.0 C83.7 102.8 85.8 98.9 88.6 95.3 C91.4 91.7 94.5 88.3 98.7 85.3 C102.9 82.2 108.7 79.1 113.7 77.0 C118.7 74.9 123.5 73.5 128.8 72.7 C134.1 71.9 139.1 71.7 145.5 72.0Z" fill="#ffffff"/></svg>
<div style="left:72px;top:543px;width:330px;height:330px;background:#f5c615;border-radius:35.5px;"></div>
<svg style="left:0;top:0" width="1800" height="945" viewBox="0 0 1800 945"><rect x="131.8" y="639.2" width="6.4" height="68.8" fill="#ee2424" rx="1.5"/><rect x="147.3" y="640.2" width="195.0" height="15.3" fill="#ee2424" rx="1.5"/><rect x="147.3" y="669.3" width="195.0" height="15.7" fill="#ee2424" rx="1.5"/><rect x="148.3" y="699.5" width="199.5" height="15.3" fill="#ee2424" rx="1.5"/><rect x="347.7" y="708.1" width="11.3" height="58.1" fill="#ee2424" rx="0"/><rect x="148.3" y="730.6" width="190.0" height="15.3" fill="#ee2424" rx="1.5"/><rect x="131.8" y="766.8" width="16.5" height="5.6" fill="#ee2424" rx="1"/><rect x="148.3" y="768.8" width="199.5" height="8.2" fill="#ee2424" rx="1.5"/><rect x="341.3" y="773.5" width="17.7" height="3.6" fill="#ee2424" rx="1.5"/><rect x="137.2" y="636.5" width="210.5" height="16.7" fill="#25c916" rx="2"/><rect x="142.6" y="638.2" width="5.6" height="61.3" fill="#25c916" rx="0"/><rect x="148.3" y="666.7" width="199.5" height="3.6" fill="#25c916" rx="2"/><rect x="339.3" y="666.7" width="8.4" height="15.3" fill="#25c916" rx="2"/><rect x="142.6" y="696.1" width="205.1" height="12.9" fill="#25c916" rx="2"/><rect x="137.2" y="698.5" width="11.1" height="14.1" fill="#25c916" rx="1.5"/><rect x="337.3" y="708.9" width="10.5" height="61.9" fill="#25c916" rx="0"/><rect x="137.2" y="727.0" width="196.0" height="15.7" fill="#25c916" rx="2"/><rect x="137.2" y="758.8" width="210.5" height="16.5" fill="#25c916" rx="2"/><rect x="137.2" y="639.2" width="205.1" height="14.1" fill="#222222" rx="1.5"/><rect x="137.2" y="639.2" width="5.6" height="68.8" fill="#222222" rx="1"/><rect x="142.8" y="639.2" width="5.0" height="16.3" fill="#222222" rx="0"/><rect x="152.3" y="669.3" width="190.0" height="12.9" fill="#222222" rx="2"/><rect x="137.2" y="698.5" width="11.1" height="9.5" fill="#222222" rx="0"/><rect x="142.8" y="698.5" width="199.5" height="14.1" fill="#222222" rx="1.5"/><rect x="342.3" y="708.1" width="6.0" height="6.6" fill="#222222" rx="0"/><rect x="148.3" y="729.8" width="185.0" height="13.3" fill="#222222" rx="2"/><rect x="337.9" y="729.8" width="6.6" height="15.1" fill="#222222" rx="1.5"/><rect x="148.3" y="761.2" width="199.5" height="12.9" fill="#222222" rx="2"/><rect x="137.2" y="766.8" width="11.5" height="5.6" fill="#222222" rx="0"/></svg>
</div></body></html>
